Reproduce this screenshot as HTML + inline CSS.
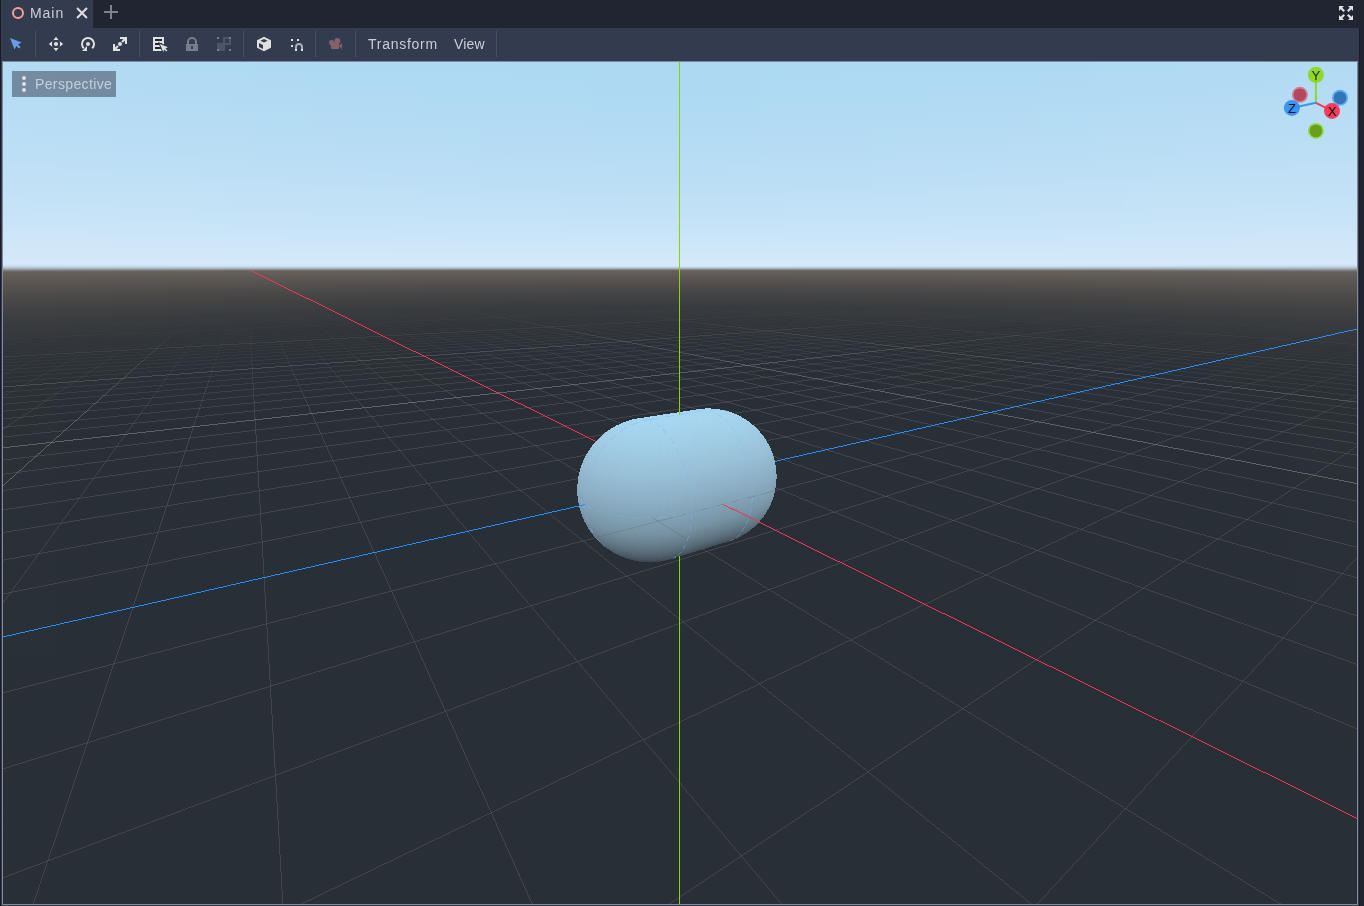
<!DOCTYPE html>
<html><head><meta charset="utf-8"><title>Godot 3D viewport</title>
<style>
html,body{margin:0;padding:0;background:#202531;}
body{width:1364px;height:906px;position:relative;overflow:hidden;font-family:"Liberation Sans",sans-serif;font-size:14px;color:#cccdd3;}
.abs{position:absolute;}
.txt{will-change:transform;}
#edgeL{left:0;top:0;width:1px;height:906px;background:#181b25;}
#edgeR{left:1359px;top:28px;width:1px;height:878px;background:#1a1d28;}
#panel{left:1px;top:28px;width:1358px;height:878px;background:#333b4f;}
#tab{left:1px;top:0;width:92px;height:28px;background:#333b4f;}
#tabtxt{left:30px;top:5px;line-height:16px;letter-spacing:0.95px;}
.sep{width:1px;top:31px;height:26px;background:#474e62;}
.mtxt{top:36px;line-height:16px;}
#vp{left:2px;top:61px;width:1354px;height:842px;border:1px solid #838898;}
#persp{left:12px;top:71px;width:104px;height:26px;background:rgba(51,59,79,0.5);}
#persptxt{left:35px;top:76px;line-height:16px;letter-spacing:0.37px;color:rgba(224,228,236,0.74);}
</style></head><body>
<div class="abs" id="panel"></div>
<div class="abs" id="tab"></div>
<div class="abs" id="edgeL"></div>
<div class="abs" id="edgeR"></div>
<div class="abs txt" id="tabtxt">Main</div>
<div class="abs mtxt txt" style="left:368px;letter-spacing:0.73px">Transform</div>
<div class="abs mtxt txt" style="left:454px;letter-spacing:0.2px">View</div>
<div class="abs sep" style="left:35px"></div>
<div class="abs sep" style="left:139px"></div>
<div class="abs sep" style="left:243px"></div>
<div class="abs sep" style="left:315px"></div>
<div class="abs sep" style="left:355px"></div>
<div class="abs sep" style="left:496px"></div>
<svg width="1364" height="906" viewBox="0 0 1364 906" style="position:absolute;left:0;top:0"><defs><linearGradient id="b0" gradientUnits="userSpaceOnUse" x1="0" y1="61" x2="0" y2="905"><stop offset="0.0000" stop-color="#b1dbf3"/><stop offset="0.0344" stop-color="#b4dcf4"/><stop offset="0.0699" stop-color="#b8ddf4"/><stop offset="0.1055" stop-color="#bcdff5"/><stop offset="0.1351" stop-color="#c0e0f6"/><stop offset="0.1647" stop-color="#c5e2f7"/><stop offset="0.1884" stop-color="#c9e4f7"/><stop offset="0.2121" stop-color="#cee6f8"/><stop offset="0.2299" stop-color="#d2e8f9"/><stop offset="0.2405" stop-color="#d5e9fa"/><stop offset="0.2431" stop-color="#c9dbea"/><stop offset="0.2441" stop-color="#becedb"/><stop offset="0.2453" stop-color="#aebcc7"/><stop offset="0.2459" stop-color="#a6b2bb"/><stop offset="0.2464" stop-color="#9da7af"/><stop offset="0.2476" stop-color="#898e92"/><stop offset="0.2486" stop-color="#767474"/><stop offset="0.2500" stop-color="#67615b"/><stop offset="0.2524" stop-color="#645e5a"/><stop offset="0.2559" stop-color="#605b57"/><stop offset="0.2595" stop-color="#5d5855"/><stop offset="0.2642" stop-color="#585451"/><stop offset="0.2690" stop-color="#54514f"/><stop offset="0.2749" stop-color="#4f4d4b"/><stop offset="0.2808" stop-color="#4b4949"/><stop offset="0.2879" stop-color="#464546"/><stop offset="0.2962" stop-color="#414143"/><stop offset="0.3057" stop-color="#3c3d40"/><stop offset="0.3164" stop-color="#373a3d"/><stop offset="0.3306" stop-color="#33363b"/><stop offset="0.3483" stop-color="#2e3339"/><stop offset="0.3720" stop-color="#2b3137"/><stop offset="0.4135" stop-color="#293036"/><stop offset="1.0000" stop-color="#282f36"/></linearGradient><linearGradient id="b1" gradientUnits="userSpaceOnUse" x1="0" y1="61" x2="0" y2="905"><stop offset="0.0000" stop-color="#b1dbf3"/><stop offset="0.0344" stop-color="#b4dcf3"/><stop offset="0.0699" stop-color="#b7ddf4"/><stop offset="0.1055" stop-color="#bbdff5"/><stop offset="0.1351" stop-color="#c0e0f6"/><stop offset="0.1647" stop-color="#c4e2f6"/><stop offset="0.1884" stop-color="#c9e4f7"/><stop offset="0.2121" stop-color="#cee6f8"/><stop offset="0.2299" stop-color="#d2e8f9"/><stop offset="0.2405" stop-color="#d5e9fa"/><stop offset="0.2431" stop-color="#cadceb"/><stop offset="0.2441" stop-color="#becfdc"/><stop offset="0.2453" stop-color="#afbcc7"/><stop offset="0.2459" stop-color="#a6b2bb"/><stop offset="0.2464" stop-color="#9da6ae"/><stop offset="0.2476" stop-color="#888d91"/><stop offset="0.2486" stop-color="#747271"/><stop offset="0.2500" stop-color="#67615b"/><stop offset="0.2524" stop-color="#645e5a"/><stop offset="0.2559" stop-color="#605b57"/><stop offset="0.2595" stop-color="#5d5854"/><stop offset="0.2642" stop-color="#585451"/><stop offset="0.2690" stop-color="#54504e"/><stop offset="0.2749" stop-color="#4f4c4b"/><stop offset="0.2808" stop-color="#4a4948"/><stop offset="0.2879" stop-color="#454545"/><stop offset="0.2962" stop-color="#404142"/><stop offset="0.3057" stop-color="#3b3d40"/><stop offset="0.3164" stop-color="#37393d"/><stop offset="0.3306" stop-color="#32363b"/><stop offset="0.3483" stop-color="#2e3339"/><stop offset="0.3720" stop-color="#2b3137"/><stop offset="0.4135" stop-color="#293036"/><stop offset="1.0000" stop-color="#282f36"/></linearGradient><linearGradient id="b2" gradientUnits="userSpaceOnUse" x1="0" y1="61" x2="0" y2="905"><stop offset="0.0000" stop-color="#b1daf3"/><stop offset="0.0344" stop-color="#b3dbf3"/><stop offset="0.0699" stop-color="#b7ddf4"/><stop offset="0.1055" stop-color="#bbdef5"/><stop offset="0.1351" stop-color="#bfe0f5"/><stop offset="0.1647" stop-color="#c4e2f6"/><stop offset="0.1884" stop-color="#c9e4f7"/><stop offset="0.2121" stop-color="#cee6f8"/><stop offset="0.2299" stop-color="#d2e8f9"/><stop offset="0.2405" stop-color="#d5e9fa"/><stop offset="0.2431" stop-color="#caddec"/><stop offset="0.2441" stop-color="#bfcfdc"/><stop offset="0.2453" stop-color="#afbcc7"/><stop offset="0.2459" stop-color="#a6b2bb"/><stop offset="0.2464" stop-color="#9da6ae"/><stop offset="0.2476" stop-color="#878b8f"/><stop offset="0.2486" stop-color="#72706f"/><stop offset="0.2500" stop-color="#67605b"/><stop offset="0.2524" stop-color="#645e59"/><stop offset="0.2559" stop-color="#605b57"/><stop offset="0.2595" stop-color="#5c5854"/><stop offset="0.2642" stop-color="#585451"/><stop offset="0.2690" stop-color="#53504e"/><stop offset="0.2749" stop-color="#4e4c4b"/><stop offset="0.2808" stop-color="#494848"/><stop offset="0.2879" stop-color="#444445"/><stop offset="0.2962" stop-color="#3f4042"/><stop offset="0.3057" stop-color="#3b3c3f"/><stop offset="0.3164" stop-color="#36393d"/><stop offset="0.3306" stop-color="#32363a"/><stop offset="0.3483" stop-color="#2e3339"/><stop offset="0.3720" stop-color="#2b3137"/><stop offset="0.4135" stop-color="#292f36"/><stop offset="1.0000" stop-color="#282f36"/></linearGradient><linearGradient id="b3" gradientUnits="userSpaceOnUse" x1="0" y1="61" x2="0" y2="905"><stop offset="0.0000" stop-color="#b0daf3"/><stop offset="0.0344" stop-color="#b3dbf3"/><stop offset="0.0699" stop-color="#b6ddf4"/><stop offset="0.1055" stop-color="#bbdef5"/><stop offset="0.1351" stop-color="#bfe0f5"/><stop offset="0.1647" stop-color="#c4e2f6"/><stop offset="0.1884" stop-color="#c8e4f7"/><stop offset="0.2121" stop-color="#cee6f8"/><stop offset="0.2299" stop-color="#d2e8f9"/><stop offset="0.2405" stop-color="#d5e9fa"/><stop offset="0.2431" stop-color="#cbdeec"/><stop offset="0.2441" stop-color="#bfd0dd"/><stop offset="0.2453" stop-color="#afbcc7"/><stop offset="0.2459" stop-color="#a6b1bb"/><stop offset="0.2464" stop-color="#9ca6ae"/><stop offset="0.2476" stop-color="#868a8e"/><stop offset="0.2486" stop-color="#716e6c"/><stop offset="0.2500" stop-color="#67605b"/><stop offset="0.2524" stop-color="#645e59"/><stop offset="0.2559" stop-color="#605b56"/><stop offset="0.2595" stop-color="#5c5754"/><stop offset="0.2642" stop-color="#575351"/><stop offset="0.2690" stop-color="#53504e"/><stop offset="0.2749" stop-color="#4d4b4a"/><stop offset="0.2808" stop-color="#494848"/><stop offset="0.2879" stop-color="#444445"/><stop offset="0.2962" stop-color="#3f4042"/><stop offset="0.3057" stop-color="#3a3c3f"/><stop offset="0.3164" stop-color="#35393c"/><stop offset="0.3306" stop-color="#31353a"/><stop offset="0.3483" stop-color="#2d3338"/><stop offset="0.3720" stop-color="#2b3137"/><stop offset="0.4135" stop-color="#292f36"/><stop offset="1.0000" stop-color="#282f36"/></linearGradient><linearGradient id="b4" gradientUnits="userSpaceOnUse" x1="0" y1="61" x2="0" y2="905"><stop offset="0.0000" stop-color="#b0daf3"/><stop offset="0.0344" stop-color="#b3dbf3"/><stop offset="0.0699" stop-color="#b6dcf4"/><stop offset="0.1055" stop-color="#badef5"/><stop offset="0.1351" stop-color="#bee0f5"/><stop offset="0.1647" stop-color="#c3e2f6"/><stop offset="0.1884" stop-color="#c8e4f7"/><stop offset="0.2121" stop-color="#cde6f8"/><stop offset="0.2299" stop-color="#d2e8f9"/><stop offset="0.2405" stop-color="#d5e9fa"/><stop offset="0.2431" stop-color="#ccdeed"/><stop offset="0.2441" stop-color="#c0d0dd"/><stop offset="0.2453" stop-color="#afbcc7"/><stop offset="0.2459" stop-color="#a6b1bb"/><stop offset="0.2464" stop-color="#9ca5ad"/><stop offset="0.2476" stop-color="#85898d"/><stop offset="0.2486" stop-color="#6f6c69"/><stop offset="0.2500" stop-color="#66605b"/><stop offset="0.2524" stop-color="#645e59"/><stop offset="0.2559" stop-color="#5f5a56"/><stop offset="0.2595" stop-color="#5c5754"/><stop offset="0.2642" stop-color="#575350"/><stop offset="0.2690" stop-color="#524f4d"/><stop offset="0.2749" stop-color="#4d4b4a"/><stop offset="0.2808" stop-color="#484747"/><stop offset="0.2879" stop-color="#434344"/><stop offset="0.2962" stop-color="#3e3f41"/><stop offset="0.3057" stop-color="#393b3f"/><stop offset="0.3164" stop-color="#35383c"/><stop offset="0.3306" stop-color="#31353a"/><stop offset="0.3483" stop-color="#2d3238"/><stop offset="0.3720" stop-color="#2a3137"/><stop offset="0.4135" stop-color="#292f36"/><stop offset="1.0000" stop-color="#282f36"/></linearGradient><linearGradient id="b5" gradientUnits="userSpaceOnUse" x1="0" y1="61" x2="0" y2="905"><stop offset="0.0000" stop-color="#b0daf3"/><stop offset="0.0344" stop-color="#b2dbf3"/><stop offset="0.0699" stop-color="#b6dcf4"/><stop offset="0.1055" stop-color="#badef5"/><stop offset="0.1351" stop-color="#bee0f5"/><stop offset="0.1647" stop-color="#c3e2f6"/><stop offset="0.1884" stop-color="#c8e4f7"/><stop offset="0.2121" stop-color="#cde6f8"/><stop offset="0.2299" stop-color="#d2e8f9"/><stop offset="0.2405" stop-color="#d5e9fa"/><stop offset="0.2431" stop-color="#ccdfee"/><stop offset="0.2441" stop-color="#c0d1de"/><stop offset="0.2453" stop-color="#afbcc7"/><stop offset="0.2459" stop-color="#a6b1bb"/><stop offset="0.2464" stop-color="#9ca5ad"/><stop offset="0.2476" stop-color="#84888b"/><stop offset="0.2486" stop-color="#6d6966"/><stop offset="0.2500" stop-color="#66605b"/><stop offset="0.2524" stop-color="#645e59"/><stop offset="0.2559" stop-color="#5f5a56"/><stop offset="0.2595" stop-color="#5b5754"/><stop offset="0.2642" stop-color="#565350"/><stop offset="0.2690" stop-color="#524f4d"/><stop offset="0.2749" stop-color="#4c4a4a"/><stop offset="0.2808" stop-color="#484747"/><stop offset="0.2879" stop-color="#434344"/><stop offset="0.2962" stop-color="#3d3f41"/><stop offset="0.3057" stop-color="#393b3e"/><stop offset="0.3164" stop-color="#34383c"/><stop offset="0.3306" stop-color="#30353a"/><stop offset="0.3483" stop-color="#2d3238"/><stop offset="0.3720" stop-color="#2a3037"/><stop offset="0.4135" stop-color="#282f36"/><stop offset="1.0000" stop-color="#282f36"/></linearGradient><linearGradient id="b6" gradientUnits="userSpaceOnUse" x1="0" y1="61" x2="0" y2="905"><stop offset="0.0000" stop-color="#afdaf3"/><stop offset="0.0344" stop-color="#b2dbf3"/><stop offset="0.0699" stop-color="#b5dcf4"/><stop offset="0.1055" stop-color="#b9def4"/><stop offset="0.1351" stop-color="#bee0f5"/><stop offset="0.1647" stop-color="#c3e2f6"/><stop offset="0.1884" stop-color="#c8e4f7"/><stop offset="0.2121" stop-color="#cde6f8"/><stop offset="0.2299" stop-color="#d2e8f9"/><stop offset="0.2405" stop-color="#d5e9fa"/><stop offset="0.2431" stop-color="#cde0ef"/><stop offset="0.2441" stop-color="#c0d1df"/><stop offset="0.2453" stop-color="#afbdc8"/><stop offset="0.2459" stop-color="#a6b1bb"/><stop offset="0.2464" stop-color="#9ba4ac"/><stop offset="0.2476" stop-color="#84878a"/><stop offset="0.2486" stop-color="#6c6763"/><stop offset="0.2500" stop-color="#66605b"/><stop offset="0.2524" stop-color="#635e59"/><stop offset="0.2559" stop-color="#5f5a56"/><stop offset="0.2595" stop-color="#5b5753"/><stop offset="0.2642" stop-color="#565250"/><stop offset="0.2690" stop-color="#514e4d"/><stop offset="0.2749" stop-color="#4c4a49"/><stop offset="0.2808" stop-color="#474646"/><stop offset="0.2879" stop-color="#424243"/><stop offset="0.2962" stop-color="#3d3e41"/><stop offset="0.3057" stop-color="#383a3e"/><stop offset="0.3164" stop-color="#34373c"/><stop offset="0.3306" stop-color="#30343a"/><stop offset="0.3483" stop-color="#2c3238"/><stop offset="0.3720" stop-color="#2a3037"/><stop offset="0.4135" stop-color="#282f36"/><stop offset="1.0000" stop-color="#282f36"/></linearGradient><linearGradient id="b7" gradientUnits="userSpaceOnUse" x1="0" y1="61" x2="0" y2="905"><stop offset="0.0000" stop-color="#afdaf3"/><stop offset="0.0344" stop-color="#b2dbf3"/><stop offset="0.0699" stop-color="#b5dcf4"/><stop offset="0.1055" stop-color="#b9def4"/><stop offset="0.1351" stop-color="#bddff5"/><stop offset="0.1647" stop-color="#c3e2f6"/><stop offset="0.1884" stop-color="#c7e4f7"/><stop offset="0.2121" stop-color="#cde6f8"/><stop offset="0.2299" stop-color="#d2e8f9"/><stop offset="0.2405" stop-color="#d5e9fa"/><stop offset="0.2431" stop-color="#cde1f0"/><stop offset="0.2441" stop-color="#c1d2df"/><stop offset="0.2453" stop-color="#afbdc8"/><stop offset="0.2459" stop-color="#a5b1ba"/><stop offset="0.2464" stop-color="#9ba4ac"/><stop offset="0.2476" stop-color="#838588"/><stop offset="0.2486" stop-color="#6a6460"/><stop offset="0.2500" stop-color="#66605b"/><stop offset="0.2524" stop-color="#635d59"/><stop offset="0.2559" stop-color="#5f5a56"/><stop offset="0.2595" stop-color="#5b5653"/><stop offset="0.2642" stop-color="#565250"/><stop offset="0.2690" stop-color="#514e4d"/><stop offset="0.2749" stop-color="#4b4a49"/><stop offset="0.2808" stop-color="#464646"/><stop offset="0.2879" stop-color="#414243"/><stop offset="0.2962" stop-color="#3c3e40"/><stop offset="0.3057" stop-color="#373a3e"/><stop offset="0.3164" stop-color="#33373b"/><stop offset="0.3306" stop-color="#2f3439"/><stop offset="0.3483" stop-color="#2c3238"/><stop offset="0.3720" stop-color="#2a3037"/><stop offset="0.4135" stop-color="#282f36"/><stop offset="1.0000" stop-color="#282f36"/></linearGradient><linearGradient id="b8" gradientUnits="userSpaceOnUse" x1="0" y1="61" x2="0" y2="905"><stop offset="0.0000" stop-color="#afdaf3"/><stop offset="0.0344" stop-color="#b1dbf3"/><stop offset="0.0699" stop-color="#b5dcf4"/><stop offset="0.1055" stop-color="#b9def4"/><stop offset="0.1351" stop-color="#bddff5"/><stop offset="0.1647" stop-color="#c2e1f6"/><stop offset="0.1884" stop-color="#c7e3f7"/><stop offset="0.2121" stop-color="#cde6f8"/><stop offset="0.2299" stop-color="#d1e8f9"/><stop offset="0.2405" stop-color="#d4e9fa"/><stop offset="0.2431" stop-color="#cee1f1"/><stop offset="0.2441" stop-color="#c1d2e0"/><stop offset="0.2453" stop-color="#afbdc8"/><stop offset="0.2459" stop-color="#a5b1ba"/><stop offset="0.2464" stop-color="#9ba4ab"/><stop offset="0.2476" stop-color="#828487"/><stop offset="0.2486" stop-color="#68615c"/><stop offset="0.2500" stop-color="#66605b"/><stop offset="0.2524" stop-color="#635d59"/><stop offset="0.2559" stop-color="#5e5a56"/><stop offset="0.2595" stop-color="#5a5653"/><stop offset="0.2642" stop-color="#55524f"/><stop offset="0.2690" stop-color="#504e4c"/><stop offset="0.2749" stop-color="#4b4949"/><stop offset="0.2808" stop-color="#464546"/><stop offset="0.2879" stop-color="#414143"/><stop offset="0.2962" stop-color="#3c3d40"/><stop offset="0.3057" stop-color="#373a3d"/><stop offset="0.3164" stop-color="#33373b"/><stop offset="0.3306" stop-color="#2f3439"/><stop offset="0.3483" stop-color="#2c3138"/><stop offset="0.3720" stop-color="#2a3037"/><stop offset="0.4135" stop-color="#282f36"/><stop offset="1.0000" stop-color="#282f36"/></linearGradient><linearGradient id="b9" gradientUnits="userSpaceOnUse" x1="0" y1="61" x2="0" y2="905"><stop offset="0.0000" stop-color="#aed9f3"/><stop offset="0.0344" stop-color="#b1daf3"/><stop offset="0.0699" stop-color="#b4dcf4"/><stop offset="0.1055" stop-color="#b8ddf4"/><stop offset="0.1351" stop-color="#bddff5"/><stop offset="0.1647" stop-color="#c2e1f6"/><stop offset="0.1884" stop-color="#c7e3f7"/><stop offset="0.2121" stop-color="#cde6f8"/><stop offset="0.2299" stop-color="#d1e8f9"/><stop offset="0.2405" stop-color="#d4e9fa"/><stop offset="0.2431" stop-color="#cfe2f2"/><stop offset="0.2441" stop-color="#c2d3e0"/><stop offset="0.2453" stop-color="#afbdc8"/><stop offset="0.2459" stop-color="#a5b1ba"/><stop offset="0.2464" stop-color="#9aa3ab"/><stop offset="0.2476" stop-color="#818385"/><stop offset="0.2486" stop-color="#68615c"/><stop offset="0.2500" stop-color="#66605b"/><stop offset="0.2524" stop-color="#635d59"/><stop offset="0.2559" stop-color="#5e5955"/><stop offset="0.2595" stop-color="#5a5653"/><stop offset="0.2642" stop-color="#55514f"/><stop offset="0.2690" stop-color="#504d4c"/><stop offset="0.2749" stop-color="#4a4948"/><stop offset="0.2808" stop-color="#454545"/><stop offset="0.2879" stop-color="#404142"/><stop offset="0.2962" stop-color="#3b3d40"/><stop offset="0.3057" stop-color="#36393d"/><stop offset="0.3164" stop-color="#32363b"/><stop offset="0.3306" stop-color="#2e3339"/><stop offset="0.3483" stop-color="#2b3138"/><stop offset="0.3720" stop-color="#293037"/><stop offset="0.4135" stop-color="#282f36"/><stop offset="1.0000" stop-color="#282f36"/></linearGradient><linearGradient id="b10" gradientUnits="userSpaceOnUse" x1="0" y1="61" x2="0" y2="905"><stop offset="0.0000" stop-color="#aed9f2"/><stop offset="0.0344" stop-color="#b1daf3"/><stop offset="0.0699" stop-color="#b4dcf3"/><stop offset="0.1055" stop-color="#b8ddf4"/><stop offset="0.1351" stop-color="#bcdff5"/><stop offset="0.1647" stop-color="#c2e1f6"/><stop offset="0.1884" stop-color="#c7e3f7"/><stop offset="0.2121" stop-color="#cce6f8"/><stop offset="0.2299" stop-color="#d1e8f9"/><stop offset="0.2405" stop-color="#d4e9fa"/><stop offset="0.2431" stop-color="#cfe3f2"/><stop offset="0.2441" stop-color="#c2d3e1"/><stop offset="0.2453" stop-color="#b0bdc8"/><stop offset="0.2459" stop-color="#a5b1ba"/><stop offset="0.2464" stop-color="#9aa3aa"/><stop offset="0.2476" stop-color="#808284"/><stop offset="0.2486" stop-color="#68615c"/><stop offset="0.2500" stop-color="#66605b"/><stop offset="0.2524" stop-color="#635d58"/><stop offset="0.2559" stop-color="#5e5955"/><stop offset="0.2595" stop-color="#5a5552"/><stop offset="0.2642" stop-color="#54514f"/><stop offset="0.2690" stop-color="#4f4d4c"/><stop offset="0.2749" stop-color="#4a4848"/><stop offset="0.2808" stop-color="#454445"/><stop offset="0.2879" stop-color="#404042"/><stop offset="0.2962" stop-color="#3b3c3f"/><stop offset="0.3057" stop-color="#36393d"/><stop offset="0.3164" stop-color="#32363b"/><stop offset="0.3306" stop-color="#2e3339"/><stop offset="0.3483" stop-color="#2b3137"/><stop offset="0.3720" stop-color="#293037"/><stop offset="0.4135" stop-color="#282f36"/><stop offset="1.0000" stop-color="#282f36"/></linearGradient><linearGradient id="b11" gradientUnits="userSpaceOnUse" x1="0" y1="61" x2="0" y2="905"><stop offset="0.0000" stop-color="#aed9f2"/><stop offset="0.0344" stop-color="#b0daf3"/><stop offset="0.0699" stop-color="#b4dbf3"/><stop offset="0.1055" stop-color="#b8ddf4"/><stop offset="0.1351" stop-color="#bcdff5"/><stop offset="0.1647" stop-color="#c1e1f6"/><stop offset="0.1884" stop-color="#c6e3f7"/><stop offset="0.2121" stop-color="#cce6f8"/><stop offset="0.2299" stop-color="#d1e8f9"/><stop offset="0.2405" stop-color="#d4e9fa"/><stop offset="0.2431" stop-color="#d0e4f3"/><stop offset="0.2441" stop-color="#c3d4e1"/><stop offset="0.2453" stop-color="#b0bdc8"/><stop offset="0.2459" stop-color="#a5b0ba"/><stop offset="0.2464" stop-color="#9aa2aa"/><stop offset="0.2476" stop-color="#7f8082"/><stop offset="0.2486" stop-color="#68615c"/><stop offset="0.2500" stop-color="#66605b"/><stop offset="0.2524" stop-color="#625d58"/><stop offset="0.2559" stop-color="#5e5955"/><stop offset="0.2595" stop-color="#595552"/><stop offset="0.2642" stop-color="#54514f"/><stop offset="0.2690" stop-color="#4f4d4b"/><stop offset="0.2749" stop-color="#494848"/><stop offset="0.2808" stop-color="#444445"/><stop offset="0.2879" stop-color="#3f4042"/><stop offset="0.2962" stop-color="#3a3c3f"/><stop offset="0.3057" stop-color="#35383c"/><stop offset="0.3164" stop-color="#31353a"/><stop offset="0.3306" stop-color="#2e3339"/><stop offset="0.3483" stop-color="#2b3137"/><stop offset="0.3720" stop-color="#293037"/><stop offset="0.4135" stop-color="#282f36"/><stop offset="1.0000" stop-color="#282f36"/></linearGradient><linearGradient id="b12" gradientUnits="userSpaceOnUse" x1="0" y1="61" x2="0" y2="905"><stop offset="0.0000" stop-color="#aed9f2"/><stop offset="0.0344" stop-color="#b0daf3"/><stop offset="0.0699" stop-color="#b3dbf3"/><stop offset="0.1055" stop-color="#b7ddf4"/><stop offset="0.1351" stop-color="#bcdff5"/><stop offset="0.1647" stop-color="#c1e1f6"/><stop offset="0.1884" stop-color="#c6e3f7"/><stop offset="0.2121" stop-color="#cce6f8"/><stop offset="0.2299" stop-color="#d1e8f9"/><stop offset="0.2405" stop-color="#d4e9fa"/><stop offset="0.2431" stop-color="#d1e4f4"/><stop offset="0.2441" stop-color="#c3d4e2"/><stop offset="0.2453" stop-color="#b0bdc8"/><stop offset="0.2459" stop-color="#a5b0ba"/><stop offset="0.2464" stop-color="#99a2a9"/><stop offset="0.2476" stop-color="#7e7f81"/><stop offset="0.2486" stop-color="#68615c"/><stop offset="0.2500" stop-color="#66605b"/><stop offset="0.2524" stop-color="#625d58"/><stop offset="0.2559" stop-color="#5e5955"/><stop offset="0.2595" stop-color="#595552"/><stop offset="0.2642" stop-color="#53504e"/><stop offset="0.2690" stop-color="#4e4c4b"/><stop offset="0.2749" stop-color="#494848"/><stop offset="0.2808" stop-color="#444344"/><stop offset="0.2879" stop-color="#3f3f41"/><stop offset="0.2962" stop-color="#393c3f"/><stop offset="0.3057" stop-color="#35383c"/><stop offset="0.3164" stop-color="#31353a"/><stop offset="0.3306" stop-color="#2d3338"/><stop offset="0.3483" stop-color="#2b3137"/><stop offset="0.3720" stop-color="#293036"/><stop offset="0.4135" stop-color="#282f36"/><stop offset="1.0000" stop-color="#282f36"/></linearGradient><linearGradient id="b13" gradientUnits="userSpaceOnUse" x1="0" y1="61" x2="0" y2="905"><stop offset="0.0000" stop-color="#add9f2"/><stop offset="0.0344" stop-color="#b0daf3"/><stop offset="0.0699" stop-color="#b3dbf3"/><stop offset="0.1055" stop-color="#b7ddf4"/><stop offset="0.1351" stop-color="#bbdff5"/><stop offset="0.1647" stop-color="#c1e1f6"/><stop offset="0.1884" stop-color="#c6e3f7"/><stop offset="0.2121" stop-color="#cce6f8"/><stop offset="0.2299" stop-color="#d1e8f9"/><stop offset="0.2405" stop-color="#d4e9fa"/><stop offset="0.2431" stop-color="#d1e5f5"/><stop offset="0.2441" stop-color="#c3d5e3"/><stop offset="0.2453" stop-color="#b0bdc9"/><stop offset="0.2459" stop-color="#a5b0ba"/><stop offset="0.2464" stop-color="#99a2a9"/><stop offset="0.2476" stop-color="#7d7e7f"/><stop offset="0.2486" stop-color="#67615c"/><stop offset="0.2500" stop-color="#655f5a"/><stop offset="0.2524" stop-color="#625d58"/><stop offset="0.2559" stop-color="#5d5855"/><stop offset="0.2595" stop-color="#595552"/><stop offset="0.2642" stop-color="#53504e"/><stop offset="0.2690" stop-color="#4e4c4b"/><stop offset="0.2749" stop-color="#484747"/><stop offset="0.2808" stop-color="#434344"/><stop offset="0.2879" stop-color="#3e3f41"/><stop offset="0.2962" stop-color="#393b3e"/><stop offset="0.3057" stop-color="#34383c"/><stop offset="0.3164" stop-color="#31353a"/><stop offset="0.3306" stop-color="#2d3238"/><stop offset="0.3483" stop-color="#2b3137"/><stop offset="0.3720" stop-color="#293036"/><stop offset="0.4135" stop-color="#282f36"/><stop offset="1.0000" stop-color="#282f36"/></linearGradient><linearGradient id="b14" gradientUnits="userSpaceOnUse" x1="0" y1="61" x2="0" y2="905"><stop offset="0.0000" stop-color="#add9f2"/><stop offset="0.0344" stop-color="#b0daf3"/><stop offset="0.0699" stop-color="#b3dbf3"/><stop offset="0.1055" stop-color="#b7ddf4"/><stop offset="0.1351" stop-color="#bbdef5"/><stop offset="0.1647" stop-color="#c1e1f6"/><stop offset="0.1884" stop-color="#c6e3f7"/><stop offset="0.2121" stop-color="#cce5f8"/><stop offset="0.2299" stop-color="#d1e8f9"/><stop offset="0.2405" stop-color="#d4e9fa"/><stop offset="0.2431" stop-color="#d2e6f6"/><stop offset="0.2441" stop-color="#c4d5e3"/><stop offset="0.2453" stop-color="#b0bec9"/><stop offset="0.2459" stop-color="#a5b0ba"/><stop offset="0.2464" stop-color="#99a1a9"/><stop offset="0.2476" stop-color="#7c7c7e"/><stop offset="0.2486" stop-color="#67615c"/><stop offset="0.2500" stop-color="#655f5a"/><stop offset="0.2524" stop-color="#625c58"/><stop offset="0.2559" stop-color="#5d5855"/><stop offset="0.2595" stop-color="#585452"/><stop offset="0.2642" stop-color="#53504e"/><stop offset="0.2690" stop-color="#4e4b4b"/><stop offset="0.2749" stop-color="#484747"/><stop offset="0.2808" stop-color="#434344"/><stop offset="0.2879" stop-color="#3e3f41"/><stop offset="0.2962" stop-color="#383b3e"/><stop offset="0.3057" stop-color="#34373c"/><stop offset="0.3164" stop-color="#30353a"/><stop offset="0.3306" stop-color="#2d3238"/><stop offset="0.3483" stop-color="#2a3137"/><stop offset="0.3720" stop-color="#293036"/><stop offset="0.4135" stop-color="#282f36"/><stop offset="1.0000" stop-color="#282f36"/></linearGradient><linearGradient id="b15" gradientUnits="userSpaceOnUse" x1="0" y1="61" x2="0" y2="905"><stop offset="0.0000" stop-color="#add9f2"/><stop offset="0.0344" stop-color="#afdaf3"/><stop offset="0.0699" stop-color="#b2dbf3"/><stop offset="0.1055" stop-color="#b7ddf4"/><stop offset="0.1351" stop-color="#bbdef5"/><stop offset="0.1647" stop-color="#c0e1f6"/><stop offset="0.1884" stop-color="#c5e3f7"/><stop offset="0.2121" stop-color="#cce5f8"/><stop offset="0.2299" stop-color="#d1e8f9"/><stop offset="0.2405" stop-color="#d4e9fa"/><stop offset="0.2431" stop-color="#d2e6f6"/><stop offset="0.2441" stop-color="#c4d6e4"/><stop offset="0.2453" stop-color="#b0bec9"/><stop offset="0.2459" stop-color="#a5b0b9"/><stop offset="0.2464" stop-color="#98a1a8"/><stop offset="0.2476" stop-color="#7b7b7c"/><stop offset="0.2486" stop-color="#67615c"/><stop offset="0.2500" stop-color="#655f5a"/><stop offset="0.2524" stop-color="#625c58"/><stop offset="0.2559" stop-color="#5d5855"/><stop offset="0.2595" stop-color="#585451"/><stop offset="0.2642" stop-color="#524f4e"/><stop offset="0.2690" stop-color="#4d4b4a"/><stop offset="0.2749" stop-color="#474647"/><stop offset="0.2808" stop-color="#424244"/><stop offset="0.2879" stop-color="#3d3e41"/><stop offset="0.2962" stop-color="#383a3e"/><stop offset="0.3057" stop-color="#34373c"/><stop offset="0.3164" stop-color="#30343a"/><stop offset="0.3306" stop-color="#2d3238"/><stop offset="0.3483" stop-color="#2a3037"/><stop offset="0.3720" stop-color="#293036"/><stop offset="0.4135" stop-color="#282f36"/><stop offset="1.0000" stop-color="#282f36"/></linearGradient><linearGradient id="b16" gradientUnits="userSpaceOnUse" x1="0" y1="61" x2="0" y2="905"><stop offset="0.0000" stop-color="#add9f2"/><stop offset="0.0344" stop-color="#afdaf3"/><stop offset="0.0699" stop-color="#b2dbf3"/><stop offset="0.1055" stop-color="#b6ddf4"/><stop offset="0.1351" stop-color="#bbdef5"/><stop offset="0.1647" stop-color="#c0e1f6"/><stop offset="0.1884" stop-color="#c5e3f7"/><stop offset="0.2121" stop-color="#cbe5f8"/><stop offset="0.2299" stop-color="#d1e8f9"/><stop offset="0.2405" stop-color="#d4e9fa"/><stop offset="0.2431" stop-color="#d3e7f7"/><stop offset="0.2441" stop-color="#c4d6e4"/><stop offset="0.2453" stop-color="#b0bec9"/><stop offset="0.2459" stop-color="#a5b0b9"/><stop offset="0.2464" stop-color="#98a1a8"/><stop offset="0.2476" stop-color="#7a7a7b"/><stop offset="0.2486" stop-color="#67615c"/><stop offset="0.2500" stop-color="#655f5a"/><stop offset="0.2524" stop-color="#625c58"/><stop offset="0.2559" stop-color="#5d5854"/><stop offset="0.2595" stop-color="#585451"/><stop offset="0.2642" stop-color="#524f4d"/><stop offset="0.2690" stop-color="#4d4b4a"/><stop offset="0.2749" stop-color="#474647"/><stop offset="0.2808" stop-color="#424243"/><stop offset="0.2879" stop-color="#3d3e40"/><stop offset="0.2962" stop-color="#383a3e"/><stop offset="0.3057" stop-color="#33373b"/><stop offset="0.3164" stop-color="#303439"/><stop offset="0.3306" stop-color="#2c3238"/><stop offset="0.3483" stop-color="#2a3037"/><stop offset="0.3720" stop-color="#292f36"/><stop offset="0.4135" stop-color="#282f36"/><stop offset="1.0000" stop-color="#282f36"/></linearGradient><linearGradient id="b17" gradientUnits="userSpaceOnUse" x1="0" y1="61" x2="0" y2="905"><stop offset="0.0000" stop-color="#add9f2"/><stop offset="0.0344" stop-color="#afdaf3"/><stop offset="0.0699" stop-color="#b2dbf3"/><stop offset="0.1055" stop-color="#b6dcf4"/><stop offset="0.1351" stop-color="#badef5"/><stop offset="0.1647" stop-color="#c0e0f6"/><stop offset="0.1884" stop-color="#c5e3f7"/><stop offset="0.2121" stop-color="#cbe5f8"/><stop offset="0.2299" stop-color="#d1e8f9"/><stop offset="0.2405" stop-color="#d4e9fa"/><stop offset="0.2431" stop-color="#d3e8f8"/><stop offset="0.2441" stop-color="#c5d6e4"/><stop offset="0.2453" stop-color="#b0bec9"/><stop offset="0.2459" stop-color="#a5b0b9"/><stop offset="0.2464" stop-color="#98a0a7"/><stop offset="0.2476" stop-color="#79797a"/><stop offset="0.2486" stop-color="#67615c"/><stop offset="0.2500" stop-color="#655f5a"/><stop offset="0.2524" stop-color="#615c58"/><stop offset="0.2559" stop-color="#5d5854"/><stop offset="0.2595" stop-color="#585451"/><stop offset="0.2642" stop-color="#524f4d"/><stop offset="0.2690" stop-color="#4d4b4a"/><stop offset="0.2749" stop-color="#474646"/><stop offset="0.2808" stop-color="#424243"/><stop offset="0.2879" stop-color="#3c3e40"/><stop offset="0.2962" stop-color="#373a3d"/><stop offset="0.3057" stop-color="#33373b"/><stop offset="0.3164" stop-color="#2f3439"/><stop offset="0.3306" stop-color="#2c3238"/><stop offset="0.3483" stop-color="#2a3037"/><stop offset="0.3720" stop-color="#292f36"/><stop offset="0.4135" stop-color="#282f36"/><stop offset="1.0000" stop-color="#282f36"/></linearGradient><linearGradient id="b18" gradientUnits="userSpaceOnUse" x1="0" y1="61" x2="0" y2="905"><stop offset="0.0000" stop-color="#acd9f2"/><stop offset="0.0344" stop-color="#afdaf3"/><stop offset="0.0699" stop-color="#b2dbf3"/><stop offset="0.1055" stop-color="#b6dcf4"/><stop offset="0.1351" stop-color="#badef5"/><stop offset="0.1647" stop-color="#c0e0f6"/><stop offset="0.1884" stop-color="#c5e3f7"/><stop offset="0.2121" stop-color="#cbe5f8"/><stop offset="0.2299" stop-color="#d1e8f9"/><stop offset="0.2405" stop-color="#d4e9fa"/><stop offset="0.2431" stop-color="#d4e8f8"/><stop offset="0.2441" stop-color="#c5d7e5"/><stop offset="0.2453" stop-color="#b0bec9"/><stop offset="0.2459" stop-color="#a5b0b9"/><stop offset="0.2464" stop-color="#98a0a7"/><stop offset="0.2476" stop-color="#787879"/><stop offset="0.2486" stop-color="#67615c"/><stop offset="0.2500" stop-color="#655f5a"/><stop offset="0.2524" stop-color="#615c58"/><stop offset="0.2559" stop-color="#5c5854"/><stop offset="0.2595" stop-color="#585451"/><stop offset="0.2642" stop-color="#524f4d"/><stop offset="0.2690" stop-color="#4c4a4a"/><stop offset="0.2749" stop-color="#464646"/><stop offset="0.2808" stop-color="#414243"/><stop offset="0.2879" stop-color="#3c3d40"/><stop offset="0.2962" stop-color="#373a3d"/><stop offset="0.3057" stop-color="#33363b"/><stop offset="0.3164" stop-color="#2f3439"/><stop offset="0.3306" stop-color="#2c3238"/><stop offset="0.3483" stop-color="#2a3037"/><stop offset="0.3720" stop-color="#292f36"/><stop offset="0.4135" stop-color="#282f36"/><stop offset="1.0000" stop-color="#282f36"/></linearGradient><linearGradient id="b19" gradientUnits="userSpaceOnUse" x1="0" y1="61" x2="0" y2="905"><stop offset="0.0000" stop-color="#acd9f2"/><stop offset="0.0344" stop-color="#afdaf3"/><stop offset="0.0699" stop-color="#b2dbf3"/><stop offset="0.1055" stop-color="#b6dcf4"/><stop offset="0.1351" stop-color="#badef5"/><stop offset="0.1647" stop-color="#c0e0f6"/><stop offset="0.1884" stop-color="#c5e3f7"/><stop offset="0.2121" stop-color="#cbe5f8"/><stop offset="0.2299" stop-color="#d1e8f9"/><stop offset="0.2405" stop-color="#d4e9fa"/><stop offset="0.2431" stop-color="#d4e8f8"/><stop offset="0.2441" stop-color="#c5d7e5"/><stop offset="0.2453" stop-color="#b0bec9"/><stop offset="0.2459" stop-color="#a5b0b9"/><stop offset="0.2464" stop-color="#97a0a7"/><stop offset="0.2476" stop-color="#787778"/><stop offset="0.2486" stop-color="#67615c"/><stop offset="0.2500" stop-color="#655f5a"/><stop offset="0.2524" stop-color="#615c58"/><stop offset="0.2559" stop-color="#5c5854"/><stop offset="0.2595" stop-color="#575451"/><stop offset="0.2642" stop-color="#514f4d"/><stop offset="0.2690" stop-color="#4c4a4a"/><stop offset="0.2749" stop-color="#464546"/><stop offset="0.2808" stop-color="#414143"/><stop offset="0.2879" stop-color="#3c3d40"/><stop offset="0.2962" stop-color="#373a3d"/><stop offset="0.3057" stop-color="#32363b"/><stop offset="0.3164" stop-color="#2f3439"/><stop offset="0.3306" stop-color="#2c3238"/><stop offset="0.3483" stop-color="#2a3037"/><stop offset="0.3720" stop-color="#292f36"/><stop offset="0.4135" stop-color="#282f36"/><stop offset="1.0000" stop-color="#282f36"/></linearGradient><linearGradient id="b20" gradientUnits="userSpaceOnUse" x1="0" y1="61" x2="0" y2="905"><stop offset="0.0000" stop-color="#acd9f2"/><stop offset="0.0344" stop-color="#aedaf3"/><stop offset="0.0699" stop-color="#b2dbf3"/><stop offset="0.1055" stop-color="#b6dcf4"/><stop offset="0.1351" stop-color="#badef5"/><stop offset="0.1647" stop-color="#bfe0f6"/><stop offset="0.1884" stop-color="#c5e2f7"/><stop offset="0.2121" stop-color="#cbe5f8"/><stop offset="0.2299" stop-color="#d1e8f9"/><stop offset="0.2405" stop-color="#d4e9fa"/><stop offset="0.2431" stop-color="#d4e9f9"/><stop offset="0.2441" stop-color="#c5d7e5"/><stop offset="0.2453" stop-color="#b0bec9"/><stop offset="0.2459" stop-color="#a4b0b9"/><stop offset="0.2464" stop-color="#97a0a7"/><stop offset="0.2476" stop-color="#777777"/><stop offset="0.2486" stop-color="#67615c"/><stop offset="0.2500" stop-color="#655f5a"/><stop offset="0.2524" stop-color="#615c57"/><stop offset="0.2559" stop-color="#5c5754"/><stop offset="0.2595" stop-color="#575351"/><stop offset="0.2642" stop-color="#514e4d"/><stop offset="0.2690" stop-color="#4c4a49"/><stop offset="0.2749" stop-color="#464546"/><stop offset="0.2808" stop-color="#414143"/><stop offset="0.2879" stop-color="#3b3d40"/><stop offset="0.2962" stop-color="#37393d"/><stop offset="0.3057" stop-color="#32363b"/><stop offset="0.3164" stop-color="#2f3439"/><stop offset="0.3306" stop-color="#2c3238"/><stop offset="0.3483" stop-color="#2a3037"/><stop offset="0.3720" stop-color="#292f36"/><stop offset="0.4135" stop-color="#282f36"/><stop offset="1.0000" stop-color="#282f36"/></linearGradient><linearGradient id="b21" gradientUnits="userSpaceOnUse" x1="0" y1="61" x2="0" y2="905"><stop offset="0.0000" stop-color="#acd9f2"/><stop offset="0.0344" stop-color="#aed9f3"/><stop offset="0.0699" stop-color="#b1dbf3"/><stop offset="0.1055" stop-color="#b5dcf4"/><stop offset="0.1351" stop-color="#badef5"/><stop offset="0.1647" stop-color="#bfe0f6"/><stop offset="0.1884" stop-color="#c5e2f7"/><stop offset="0.2121" stop-color="#cbe5f8"/><stop offset="0.2299" stop-color="#d1e8f9"/><stop offset="0.2405" stop-color="#d4e9fa"/><stop offset="0.2431" stop-color="#d5e9f9"/><stop offset="0.2441" stop-color="#c6d7e6"/><stop offset="0.2453" stop-color="#b0bec9"/><stop offset="0.2459" stop-color="#a4b0b9"/><stop offset="0.2464" stop-color="#979fa7"/><stop offset="0.2476" stop-color="#777676"/><stop offset="0.2486" stop-color="#67615c"/><stop offset="0.2500" stop-color="#655f5a"/><stop offset="0.2524" stop-color="#615c57"/><stop offset="0.2559" stop-color="#5c5754"/><stop offset="0.2595" stop-color="#575351"/><stop offset="0.2642" stop-color="#514e4d"/><stop offset="0.2690" stop-color="#4c4a49"/><stop offset="0.2749" stop-color="#464546"/><stop offset="0.2808" stop-color="#414143"/><stop offset="0.2879" stop-color="#3b3d40"/><stop offset="0.2962" stop-color="#36393d"/><stop offset="0.3057" stop-color="#32363b"/><stop offset="0.3164" stop-color="#2f3439"/><stop offset="0.3306" stop-color="#2c3138"/><stop offset="0.3483" stop-color="#2a3037"/><stop offset="0.3720" stop-color="#292f36"/><stop offset="0.4135" stop-color="#282f36"/><stop offset="1.0000" stop-color="#282f36"/></linearGradient><linearGradient id="b22" gradientUnits="userSpaceOnUse" x1="0" y1="61" x2="0" y2="905"><stop offset="0.0000" stop-color="#acd9f2"/><stop offset="0.0344" stop-color="#aed9f3"/><stop offset="0.0699" stop-color="#b1dbf3"/><stop offset="0.1055" stop-color="#b5dcf4"/><stop offset="0.1351" stop-color="#badef4"/><stop offset="0.1647" stop-color="#bfe0f5"/><stop offset="0.1884" stop-color="#c5e2f7"/><stop offset="0.2121" stop-color="#cbe5f8"/><stop offset="0.2299" stop-color="#d1e8f9"/><stop offset="0.2405" stop-color="#d4e9fa"/><stop offset="0.2431" stop-color="#d5e9f9"/><stop offset="0.2441" stop-color="#c6d7e6"/><stop offset="0.2453" stop-color="#b0bec9"/><stop offset="0.2459" stop-color="#a4b0b9"/><stop offset="0.2464" stop-color="#979fa6"/><stop offset="0.2476" stop-color="#777676"/><stop offset="0.2486" stop-color="#67615c"/><stop offset="0.2500" stop-color="#655f5a"/><stop offset="0.2524" stop-color="#615c57"/><stop offset="0.2559" stop-color="#5c5754"/><stop offset="0.2595" stop-color="#575351"/><stop offset="0.2642" stop-color="#514e4d"/><stop offset="0.2690" stop-color="#4c4a49"/><stop offset="0.2749" stop-color="#464546"/><stop offset="0.2808" stop-color="#404143"/><stop offset="0.2879" stop-color="#3b3d40"/><stop offset="0.2962" stop-color="#36393d"/><stop offset="0.3057" stop-color="#32363b"/><stop offset="0.3164" stop-color="#2f3339"/><stop offset="0.3306" stop-color="#2c3138"/><stop offset="0.3483" stop-color="#2a3037"/><stop offset="0.3720" stop-color="#292f36"/><stop offset="0.4135" stop-color="#282f36"/><stop offset="1.0000" stop-color="#282f36"/></linearGradient><linearGradient id="b23" gradientUnits="userSpaceOnUse" x1="0" y1="61" x2="0" y2="905"><stop offset="0.0000" stop-color="#acd9f2"/><stop offset="0.0344" stop-color="#aed9f3"/><stop offset="0.0699" stop-color="#b1dbf3"/><stop offset="0.1055" stop-color="#b5dcf4"/><stop offset="0.1351" stop-color="#badef4"/><stop offset="0.1647" stop-color="#bfe0f5"/><stop offset="0.1884" stop-color="#c5e2f7"/><stop offset="0.2121" stop-color="#cbe5f8"/><stop offset="0.2299" stop-color="#d1e8f9"/><stop offset="0.2405" stop-color="#d4e9fa"/><stop offset="0.2431" stop-color="#d5e9f9"/><stop offset="0.2441" stop-color="#c6d8e6"/><stop offset="0.2453" stop-color="#b0bec9"/><stop offset="0.2459" stop-color="#a4b0b9"/><stop offset="0.2464" stop-color="#979fa6"/><stop offset="0.2476" stop-color="#777675"/><stop offset="0.2486" stop-color="#67615c"/><stop offset="0.2500" stop-color="#655f5a"/><stop offset="0.2524" stop-color="#615c57"/><stop offset="0.2559" stop-color="#5c5754"/><stop offset="0.2595" stop-color="#575351"/><stop offset="0.2642" stop-color="#514e4d"/><stop offset="0.2690" stop-color="#4c4a49"/><stop offset="0.2749" stop-color="#464546"/><stop offset="0.2808" stop-color="#404143"/><stop offset="0.2879" stop-color="#3b3d40"/><stop offset="0.2962" stop-color="#36393d"/><stop offset="0.3057" stop-color="#32363b"/><stop offset="0.3164" stop-color="#2e3339"/><stop offset="0.3306" stop-color="#2c3138"/><stop offset="0.3483" stop-color="#2a3037"/><stop offset="0.3720" stop-color="#292f36"/><stop offset="0.4135" stop-color="#282f36"/><stop offset="1.0000" stop-color="#282f36"/></linearGradient><linearGradient id="b24" gradientUnits="userSpaceOnUse" x1="0" y1="61" x2="0" y2="905"><stop offset="0.0000" stop-color="#b2dbf3"/><stop offset="0.0344" stop-color="#b4dcf4"/><stop offset="0.0699" stop-color="#b8ddf4"/><stop offset="0.1055" stop-color="#bcdff5"/><stop offset="0.1351" stop-color="#c0e0f6"/><stop offset="0.1647" stop-color="#c5e2f7"/><stop offset="0.1884" stop-color="#c9e4f7"/><stop offset="0.2121" stop-color="#cee6f8"/><stop offset="0.2299" stop-color="#d2e8f9"/><stop offset="0.2405" stop-color="#d5e9fa"/><stop offset="0.2431" stop-color="#c9dbea"/><stop offset="0.2441" stop-color="#becedb"/><stop offset="0.2453" stop-color="#aebcc7"/><stop offset="0.2459" stop-color="#a6b2bb"/><stop offset="0.2464" stop-color="#9da7af"/><stop offset="0.2476" stop-color="#898e92"/><stop offset="0.2486" stop-color="#767575"/><stop offset="0.2500" stop-color="#67615b"/><stop offset="0.2524" stop-color="#645f5a"/><stop offset="0.2559" stop-color="#605b57"/><stop offset="0.2595" stop-color="#5d5855"/><stop offset="0.2642" stop-color="#585452"/><stop offset="0.2690" stop-color="#54514f"/><stop offset="0.2749" stop-color="#4f4d4c"/><stop offset="0.2808" stop-color="#4b4949"/><stop offset="0.2879" stop-color="#464546"/><stop offset="0.2962" stop-color="#414143"/><stop offset="0.3057" stop-color="#3c3d40"/><stop offset="0.3164" stop-color="#373a3e"/><stop offset="0.3306" stop-color="#33363b"/><stop offset="0.3483" stop-color="#2f3439"/><stop offset="0.3720" stop-color="#2b3138"/><stop offset="0.4135" stop-color="#293036"/><stop offset="1.0000" stop-color="#282f36"/></linearGradient><clipPath id="capclip"><path d="M705 408h6v1h-6zM696 409h24v1h-24zM690 410h35v1h-35zM683 411h46v1h-46zM677 412h55v1h-55zM670 413h64v1h-64zM663 414h74v1h-74zM657 415h82v1h-82zM650 416h91v1h-91zM644 417h98v1h-98zM637 418h107v1h-107zM632 419h114v1h-114zM629 420h118v1h-118zM626 421h123v1h-123zM623 422h127v1h-127zM621 423h130v1h-130zM619 424h133v1h-133zM616 425h138v1h-138zM615 426h140v1h-140zM613 427h143v1h-143zM611 428h146v1h-146zM610 429h148v1h-148zM608 430h151v1h-151zM607 431h153v1h-153zM605 432h155v1h-155zM604 433h157v1h-157zM603 434h159v1h-159zM602 435h161v1h-161zM601 436h163v1h-163zM600 437h164v1h-164zM599 438h166v1h-166zM598 439h168v1h-168zM597 440h169v1h-169zM596 441h171v1h-171zM595 442h172v1h-172zM594 443h174v1h-174zM593 444h176v1h-176zM592 445h177v1h-177zM592 446h178v1h-178zM591 447h179v1h-179zM590 448h181v1h-181zM590 449h181v1h-181zM589 450h182v1h-182zM588 451h184v1h-184zM588 452h184v1h-184zM587 453h186v1h-186zM586 454h187v1h-187zM586 455h187v1h-187zM585 456h189v1h-189zM585 457h189v1h-189zM584 458h190v1h-190zM584 459h190v1h-190zM583 460h192v1h-192zM583 461h192v1h-192zM583 462h192v1h-192zM582 463h193v1h-193zM582 464h193v1h-193zM581 465h195v1h-195zM581 466h195v1h-195zM581 467h195v1h-195zM580 468h196v1h-196zM580 469h196v1h-196zM580 470h196v1h-196zM580 471h196v1h-196zM579 472h197v1h-197zM579 473h197v1h-197zM579 474h198v1h-198zM579 475h198v1h-198zM578 476h199v1h-199zM578 477h199v1h-199zM578 478h199v1h-199zM578 479h198v1h-198zM578 480h198v1h-198zM578 481h198v1h-198zM578 482h198v1h-198zM578 483h198v1h-198zM577 484h199v1h-199zM577 485h199v1h-199zM577 486h199v1h-199zM577 487h199v1h-199zM577 488h198v1h-198zM577 489h198v1h-198zM577 490h198v1h-198zM577 491h198v1h-198zM577 492h198v1h-198zM577 493h197v1h-197zM577 494h197v1h-197zM577 495h197v1h-197zM578 496h196v1h-196zM578 497h195v1h-195zM578 498h195v1h-195zM578 499h195v1h-195zM578 500h194v1h-194zM578 501h194v1h-194zM578 502h193v1h-193zM579 503h192v1h-192zM579 504h192v1h-192zM579 505h191v1h-191zM579 506h191v1h-191zM579 507h190v1h-190zM580 508h189v1h-189zM580 509h188v1h-188zM580 510h187v1h-187zM581 511h186v1h-186zM581 512h185v1h-185zM581 513h185v1h-185zM582 514h183v1h-183zM582 515h182v1h-182zM582 516h182v1h-182zM583 517h180v1h-180zM583 518h179v1h-179zM584 519h177v1h-177zM584 520h176v1h-176zM584 521h176v1h-176zM585 522h174v1h-174zM586 523h172v1h-172zM586 524h171v1h-171zM587 525h169v1h-169zM587 526h168v1h-168zM588 527h166v1h-166zM588 528h164v1h-164zM589 529h162v1h-162zM590 530h160v1h-160zM590 531h159v1h-159zM591 532h156v1h-156zM592 533h154v1h-154zM593 534h151v1h-151zM593 535h149v1h-149zM594 536h147v1h-147zM595 537h144v1h-144zM596 538h141v1h-141zM597 539h137v1h-137zM598 540h134v1h-134zM599 541h130v1h-130zM600 542h126v1h-126zM601 543h121v1h-121zM602 544h117v1h-117zM603 545h113v1h-113zM604 546h108v1h-108zM606 547h103v1h-103zM607 548h99v1h-99zM609 549h94v1h-94zM610 550h89v1h-89zM612 551h84v1h-84zM613 552h80v1h-80zM615 553h75v1h-75zM617 554h69v1h-69zM619 555h64v1h-64zM621 556h59v1h-59zM624 557h52v1h-52zM626 558h47v1h-47zM630 559h40v1h-40zM634 560h32v1h-32zM639 561h22v1h-22z"/></clipPath><linearGradient id="c4" gradientUnits="userSpaceOnUse" x1="0" y1="400" x2="0" y2="600"><stop offset="0.4225" stop-color="#89abc0"/><stop offset="0.4775" stop-color="#82a2b5"/></linearGradient><linearGradient id="c6" gradientUnits="userSpaceOnUse" x1="0" y1="400" x2="0" y2="600"><stop offset="0.3625" stop-color="#90b5ca"/><stop offset="0.4375" stop-color="#8aadc1"/><stop offset="0.5025" stop-color="#82a2b5"/><stop offset="0.5375" stop-color="#7b98aa"/></linearGradient><linearGradient id="c8" gradientUnits="userSpaceOnUse" x1="0" y1="400" x2="0" y2="600"><stop offset="0.3275" stop-color="#93b9cf"/><stop offset="0.3725" stop-color="#91b7cc"/><stop offset="0.4575" stop-color="#89acc0"/><stop offset="0.5275" stop-color="#809fb2"/><stop offset="0.5675" stop-color="#7794a5"/></linearGradient><linearGradient id="c10" gradientUnits="userSpaceOnUse" x1="0" y1="400" x2="0" y2="600"><stop offset="0.3025" stop-color="#95bcd3"/><stop offset="0.3325" stop-color="#95bcd2"/><stop offset="0.4425" stop-color="#8cafc4"/><stop offset="0.5425" stop-color="#7f9eb0"/><stop offset="0.5725" stop-color="#7996a8"/><stop offset="0.5925" stop-color="#738e9f"/></linearGradient><linearGradient id="c12" gradientUnits="userSpaceOnUse" x1="0" y1="400" x2="0" y2="600"><stop offset="0.2825" stop-color="#98bfd6"/><stop offset="0.3425" stop-color="#95bcd3"/><stop offset="0.4625" stop-color="#8aadc2"/><stop offset="0.5625" stop-color="#7d9bad"/><stop offset="0.5925" stop-color="#7793a4"/><stop offset="0.6025" stop-color="#748fa0"/><stop offset="0.6125" stop-color="#6f8999"/></linearGradient><linearGradient id="c14" gradientUnits="userSpaceOnUse" x1="0" y1="400" x2="0" y2="600"><stop offset="0.2675" stop-color="#99c2d9"/><stop offset="0.3375" stop-color="#96bdd4"/><stop offset="0.4675" stop-color="#8aadc2"/><stop offset="0.5375" stop-color="#82a2b5"/><stop offset="0.5975" stop-color="#7894a5"/><stop offset="0.6175" stop-color="#728c9c"/><stop offset="0.6325" stop-color="#6a8291"/></linearGradient><linearGradient id="c16" gradientUnits="userSpaceOnUse" x1="0" y1="400" x2="0" y2="600"><stop offset="0.2525" stop-color="#9bc4dc"/><stop offset="0.3225" stop-color="#98c0d7"/><stop offset="0.4625" stop-color="#8cafc4"/><stop offset="0.5425" stop-color="#82a2b5"/><stop offset="0.6125" stop-color="#7692a3"/><stop offset="0.6325" stop-color="#6f8898"/><stop offset="0.6475" stop-color="#677e8d"/></linearGradient><linearGradient id="c18" gradientUnits="userSpaceOnUse" x1="0" y1="400" x2="0" y2="600"><stop offset="0.2375" stop-color="#9cc6de"/><stop offset="0.3175" stop-color="#99c1d8"/><stop offset="0.4675" stop-color="#8cafc4"/><stop offset="0.5525" stop-color="#81a1b4"/><stop offset="0.6225" stop-color="#7590a1"/><stop offset="0.6475" stop-color="#6b8493"/><stop offset="0.6625" stop-color="#637987"/></linearGradient><linearGradient id="c20" gradientUnits="userSpaceOnUse" x1="0" y1="400" x2="0" y2="600"><stop offset="0.2225" stop-color="#9dc7df"/><stop offset="0.2775" stop-color="#9bc5dd"/><stop offset="0.3925" stop-color="#93b9cf"/><stop offset="0.5175" stop-color="#86a8bb"/><stop offset="0.5875" stop-color="#7c9bac"/><stop offset="0.6275" stop-color="#7590a1"/><stop offset="0.6575" stop-color="#6a8291"/><stop offset="0.6675" stop-color="#657c8a"/><stop offset="0.6725" stop-color="#627886"/><stop offset="0.6775" stop-color="#5d727f"/></linearGradient><linearGradient id="c22" gradientUnits="userSpaceOnUse" x1="0" y1="400" x2="0" y2="600"><stop offset="0.2125" stop-color="#9ec9e1"/><stop offset="0.2725" stop-color="#9cc6de"/><stop offset="0.3925" stop-color="#94bad0"/><stop offset="0.5225" stop-color="#86a8bb"/><stop offset="0.5925" stop-color="#7c9aac"/><stop offset="0.6325" stop-color="#7590a1"/><stop offset="0.6675" stop-color="#68808f"/><stop offset="0.6775" stop-color="#637a88"/><stop offset="0.6875" stop-color="#5d717e"/></linearGradient><linearGradient id="c24" gradientUnits="userSpaceOnUse" x1="0" y1="400" x2="0" y2="600"><stop offset="0.2025" stop-color="#9fcae3"/><stop offset="0.2975" stop-color="#9bc4dc"/><stop offset="0.4725" stop-color="#8cb0c5"/><stop offset="0.5725" stop-color="#809fb2"/><stop offset="0.6225" stop-color="#7894a6"/><stop offset="0.6525" stop-color="#708a9a"/><stop offset="0.6825" stop-color="#647b89"/><stop offset="0.6975" stop-color="#5b6f7c"/></linearGradient><linearGradient id="c26" gradientUnits="userSpaceOnUse" x1="0" y1="400" x2="0" y2="600"><stop offset="0.1925" stop-color="#a0cce4"/><stop offset="0.2575" stop-color="#9ec8e0"/><stop offset="0.3875" stop-color="#95bbd2"/><stop offset="0.5275" stop-color="#86a8bc"/><stop offset="0.6075" stop-color="#7b99aa"/><stop offset="0.6475" stop-color="#738e9e"/><stop offset="0.6875" stop-color="#647b89"/><stop offset="0.6975" stop-color="#5f7482"/><stop offset="0.7075" stop-color="#586c78"/></linearGradient><linearGradient id="c28" gradientUnits="userSpaceOnUse" x1="0" y1="400" x2="0" y2="600"><stop offset="0.1825" stop-color="#a1cde5"/><stop offset="0.2475" stop-color="#9fc9e2"/><stop offset="0.3825" stop-color="#95bcd3"/><stop offset="0.5275" stop-color="#87a8bc"/><stop offset="0.6075" stop-color="#7c99ab"/><stop offset="0.6375" stop-color="#7692a3"/><stop offset="0.6675" stop-color="#6e8797"/><stop offset="0.6975" stop-color="#627886"/><stop offset="0.7075" stop-color="#5d717e"/><stop offset="0.7175" stop-color="#556874"/></linearGradient><linearGradient id="c30" gradientUnits="userSpaceOnUse" x1="0" y1="400" x2="0" y2="600"><stop offset="0.1725" stop-color="#a1cde6"/><stop offset="0.2425" stop-color="#9fcae3"/><stop offset="0.3825" stop-color="#95bdd3"/><stop offset="0.5325" stop-color="#86a8bc"/><stop offset="0.6175" stop-color="#7a98aa"/><stop offset="0.6475" stop-color="#7591a1"/><stop offset="0.6975" stop-color="#647a88"/><stop offset="0.7175" stop-color="#5a6e7a"/><stop offset="0.7225" stop-color="#566975"/><stop offset="0.7275" stop-color="#51626e"/></linearGradient><linearGradient id="c32" gradientUnits="userSpaceOnUse" x1="0" y1="400" x2="0" y2="600"><stop offset="0.1625" stop-color="#a1cee7"/><stop offset="0.1925" stop-color="#a2cee7"/><stop offset="0.3525" stop-color="#98c0d7"/><stop offset="0.5175" stop-color="#89abbf"/><stop offset="0.6075" stop-color="#7d9bad"/><stop offset="0.6575" stop-color="#738e9e"/><stop offset="0.7075" stop-color="#617785"/><stop offset="0.7225" stop-color="#5a6d7a"/><stop offset="0.7325" stop-color="#526470"/></linearGradient><linearGradient id="c34" gradientUnits="userSpaceOnUse" x1="0" y1="400" x2="0" y2="600"><stop offset="0.1575" stop-color="#a2cfe8"/><stop offset="0.2275" stop-color="#a0cce5"/><stop offset="0.3775" stop-color="#96bed4"/><stop offset="0.5375" stop-color="#86a8bc"/><stop offset="0.6275" stop-color="#7a97a8"/><stop offset="0.6575" stop-color="#748fa0"/><stop offset="0.6925" stop-color="#68808f"/><stop offset="0.7225" stop-color="#5c707d"/><stop offset="0.7325" stop-color="#566975"/><stop offset="0.7425" stop-color="#4d5e69"/></linearGradient><linearGradient id="c36" gradientUnits="userSpaceOnUse" x1="0" y1="400" x2="0" y2="600"><stop offset="0.1525" stop-color="#a3d0ea"/><stop offset="0.2225" stop-color="#a1cde6"/><stop offset="0.3725" stop-color="#97bed5"/><stop offset="0.5375" stop-color="#87a8bc"/><stop offset="0.6275" stop-color="#7a97a9"/><stop offset="0.6575" stop-color="#7590a1"/><stop offset="0.6975" stop-color="#68808e"/><stop offset="0.7275" stop-color="#5b707c"/><stop offset="0.7375" stop-color="#566875"/><stop offset="0.7475" stop-color="#4e5f6a"/></linearGradient><linearGradient id="c38" gradientUnits="userSpaceOnUse" x1="0" y1="400" x2="0" y2="600"><stop offset="0.1425" stop-color="#a3d0ea"/><stop offset="0.1925" stop-color="#a2cfe8"/><stop offset="0.3525" stop-color="#99c1d8"/><stop offset="0.5275" stop-color="#88aabe"/><stop offset="0.6275" stop-color="#7b98aa"/><stop offset="0.6575" stop-color="#7591a2"/><stop offset="0.6975" stop-color="#698190"/><stop offset="0.7325" stop-color="#5a6f7b"/><stop offset="0.7425" stop-color="#556874"/><stop offset="0.7525" stop-color="#4e5e69"/></linearGradient><linearGradient id="c40" gradientUnits="userSpaceOnUse" x1="0" y1="400" x2="0" y2="600"><stop offset="0.1375" stop-color="#a4d1eb"/><stop offset="0.1875" stop-color="#a3d0e9"/><stop offset="0.3525" stop-color="#99c1d8"/><stop offset="0.4725" stop-color="#8eb3c8"/><stop offset="0.5975" stop-color="#7f9eb1"/><stop offset="0.6425" stop-color="#7895a6"/><stop offset="0.6725" stop-color="#728c9c"/><stop offset="0.7125" stop-color="#647b89"/><stop offset="0.7425" stop-color="#576a76"/><stop offset="0.7525" stop-color="#51626e"/><stop offset="0.7575" stop-color="#4d5d68"/><stop offset="0.7625" stop-color="#47555f"/></linearGradient><linearGradient id="c42" gradientUnits="userSpaceOnUse" x1="0" y1="400" x2="0" y2="600"><stop offset="0.1325" stop-color="#a4d2ec"/><stop offset="0.2125" stop-color="#a2cee7"/><stop offset="0.3725" stop-color="#97bfd6"/><stop offset="0.5425" stop-color="#87a8bc"/><stop offset="0.6425" stop-color="#7996a7"/><stop offset="0.6725" stop-color="#728d9d"/><stop offset="0.7125" stop-color="#657c8b"/><stop offset="0.7475" stop-color="#566975"/><stop offset="0.7575" stop-color="#50616c"/><stop offset="0.7625" stop-color="#4c5c67"/><stop offset="0.7675" stop-color="#46555e"/></linearGradient><linearGradient id="c44" gradientUnits="userSpaceOnUse" x1="0" y1="400" x2="0" y2="600"><stop offset="0.1275" stop-color="#a5d3ec"/><stop offset="0.2075" stop-color="#a2cfe8"/><stop offset="0.3725" stop-color="#97bfd6"/><stop offset="0.4875" stop-color="#8db1c6"/><stop offset="0.6125" stop-color="#7e9cae"/><stop offset="0.6575" stop-color="#7692a3"/><stop offset="0.7075" stop-color="#68808e"/><stop offset="0.7475" stop-color="#576b77"/><stop offset="0.7625" stop-color="#4f5f6b"/><stop offset="0.7675" stop-color="#4b5a65"/><stop offset="0.7725" stop-color="#45535d"/></linearGradient><linearGradient id="c46" gradientUnits="userSpaceOnUse" x1="0" y1="400" x2="0" y2="600"><stop offset="0.1225" stop-color="#a5d3ed"/><stop offset="0.2025" stop-color="#a3cfe9"/><stop offset="0.3675" stop-color="#98c0d7"/><stop offset="0.4875" stop-color="#8db1c6"/><stop offset="0.6125" stop-color="#7e9daf"/><stop offset="0.6575" stop-color="#7793a4"/><stop offset="0.7075" stop-color="#68808f"/><stop offset="0.7375" stop-color="#5d727f"/><stop offset="0.7625" stop-color="#51626d"/><stop offset="0.7725" stop-color="#495963"/><stop offset="0.7775" stop-color="#43515a"/></linearGradient><linearGradient id="c48" gradientUnits="userSpaceOnUse" x1="0" y1="400" x2="0" y2="600"><stop offset="0.1175" stop-color="#a5d3ed"/><stop offset="0.1675" stop-color="#a4d2ec"/><stop offset="0.3475" stop-color="#9ac2da"/><stop offset="0.4725" stop-color="#8fb3c9"/><stop offset="0.6075" stop-color="#7f9eb0"/><stop offset="0.6575" stop-color="#7793a4"/><stop offset="0.6875" stop-color="#6f8999"/><stop offset="0.7275" stop-color="#627886"/><stop offset="0.7625" stop-color="#52646f"/><stop offset="0.7725" stop-color="#4c5c66"/><stop offset="0.7775" stop-color="#475660"/><stop offset="0.7825" stop-color="#404d56"/></linearGradient><linearGradient id="c50" gradientUnits="userSpaceOnUse" x1="0" y1="400" x2="0" y2="600"><stop offset="0.1125" stop-color="#a5d4ee"/><stop offset="0.1675" stop-color="#a4d2ec"/><stop offset="0.3475" stop-color="#9ac2da"/><stop offset="0.4725" stop-color="#8fb4c9"/><stop offset="0.6075" stop-color="#7f9eb1"/><stop offset="0.6575" stop-color="#7794a5"/><stop offset="0.6875" stop-color="#708a9a"/><stop offset="0.7275" stop-color="#637987"/><stop offset="0.7625" stop-color="#536571"/><stop offset="0.7725" stop-color="#4d5e69"/><stop offset="0.7825" stop-color="#45535d"/></linearGradient><linearGradient id="c52" gradientUnits="userSpaceOnUse" x1="0" y1="400" x2="0" y2="600"><stop offset="0.1125" stop-color="#a5d4ee"/><stop offset="0.1975" stop-color="#a3d0ea"/><stop offset="0.3675" stop-color="#98c0d7"/><stop offset="0.4875" stop-color="#8db2c7"/><stop offset="0.6175" stop-color="#7e9cae"/><stop offset="0.6625" stop-color="#7693a4"/><stop offset="0.7125" stop-color="#68808f"/><stop offset="0.7425" stop-color="#5d727f"/><stop offset="0.7725" stop-color="#4e5f6a"/><stop offset="0.7825" stop-color="#47555f"/><stop offset="0.7875" stop-color="#404d56"/></linearGradient><linearGradient id="c54" gradientUnits="userSpaceOnUse" x1="0" y1="400" x2="0" y2="600"><stop offset="0.1075" stop-color="#a6d4ee"/><stop offset="0.1625" stop-color="#a5d3ed"/><stop offset="0.3475" stop-color="#9ac3da"/><stop offset="0.4775" stop-color="#8fb3c8"/><stop offset="0.6175" stop-color="#7e9caf"/><stop offset="0.6675" stop-color="#7692a3"/><stop offset="0.7175" stop-color="#677f8d"/><stop offset="0.7475" stop-color="#5c707d"/><stop offset="0.7775" stop-color="#4c5c67"/><stop offset="0.7875" stop-color="#44525c"/><stop offset="0.7925" stop-color="#3b474f"/></linearGradient><linearGradient id="c56" gradientUnits="userSpaceOnUse" x1="0" y1="400" x2="0" y2="600"><stop offset="0.1025" stop-color="#a6d5ef"/><stop offset="0.1575" stop-color="#a5d3ed"/><stop offset="0.3425" stop-color="#9ac3db"/><stop offset="0.4725" stop-color="#8fb4c9"/><stop offset="0.6125" stop-color="#7f9eb0"/><stop offset="0.6625" stop-color="#7793a4"/><stop offset="0.6975" stop-color="#6e8797"/><stop offset="0.7375" stop-color="#607684"/><stop offset="0.7725" stop-color="#51626e"/><stop offset="0.7825" stop-color="#4b5b65"/><stop offset="0.7925" stop-color="#425059"/></linearGradient><linearGradient id="c58" gradientUnits="userSpaceOnUse" x1="0" y1="400" x2="0" y2="600"><stop offset="0.1025" stop-color="#a6d5ef"/><stop offset="0.1875" stop-color="#a4d1eb"/><stop offset="0.3675" stop-color="#98c1d8"/><stop offset="0.4925" stop-color="#8db1c6"/><stop offset="0.6225" stop-color="#7d9cae"/><stop offset="0.6725" stop-color="#7591a2"/><stop offset="0.7225" stop-color="#667d8c"/><stop offset="0.7525" stop-color="#5b6f7c"/><stop offset="0.7825" stop-color="#4b5b66"/><stop offset="0.7925" stop-color="#43515b"/><stop offset="0.7975" stop-color="#3d4951"/></linearGradient><linearGradient id="c60" gradientUnits="userSpaceOnUse" x1="0" y1="400" x2="0" y2="600"><stop offset="0.0975" stop-color="#a6d5ef"/><stop offset="0.1225" stop-color="#a6d5f0"/><stop offset="0.2525" stop-color="#a0cce5"/><stop offset="0.4125" stop-color="#95bcd2"/><stop offset="0.5225" stop-color="#8aadc1"/><stop offset="0.6425" stop-color="#7b98aa"/><stop offset="0.6825" stop-color="#738e9e"/><stop offset="0.7325" stop-color="#637987"/><stop offset="0.7725" stop-color="#52646f"/><stop offset="0.7875" stop-color="#495862"/><stop offset="0.7975" stop-color="#404d56"/></linearGradient><linearGradient id="c62" gradientUnits="userSpaceOnUse" x1="0" y1="400" x2="0" y2="600"><stop offset="0.0975" stop-color="#a6d6f0"/><stop offset="0.1575" stop-color="#a5d4ee"/><stop offset="0.3475" stop-color="#9ac3da"/><stop offset="0.4775" stop-color="#8fb3c9"/><stop offset="0.6175" stop-color="#7e9daf"/><stop offset="0.6675" stop-color="#7693a4"/><stop offset="0.7075" stop-color="#6c8494"/><stop offset="0.7475" stop-color="#5e7380"/><stop offset="0.7825" stop-color="#4d5e68"/><stop offset="0.7925" stop-color="#46555f"/><stop offset="0.7975" stop-color="#424f58"/><stop offset="0.8025" stop-color="#3b464e"/></linearGradient><linearGradient id="c64" gradientUnits="userSpaceOnUse" x1="0" y1="400" x2="0" y2="600"><stop offset="0.0925" stop-color="#a6d5f0"/><stop offset="0.1325" stop-color="#a6d5ef"/><stop offset="0.3275" stop-color="#9cc5dd"/><stop offset="0.4675" stop-color="#90b5ca"/><stop offset="0.6125" stop-color="#7f9eb1"/><stop offset="0.6625" stop-color="#7794a5"/><stop offset="0.6875" stop-color="#728c9d"/><stop offset="0.7375" stop-color="#627886"/><stop offset="0.7775" stop-color="#51626d"/><stop offset="0.7925" stop-color="#485761"/><stop offset="0.8025" stop-color="#3e4b54"/></linearGradient><linearGradient id="c66" gradientUnits="userSpaceOnUse" x1="0" y1="400" x2="0" y2="600"><stop offset="0.0925" stop-color="#a6d6f0"/><stop offset="0.1525" stop-color="#a5d4ee"/><stop offset="0.3425" stop-color="#9bc4db"/><stop offset="0.4775" stop-color="#8fb4c9"/><stop offset="0.6225" stop-color="#7e9caf"/><stop offset="0.6725" stop-color="#7692a3"/><stop offset="0.7325" stop-color="#647b89"/><stop offset="0.7625" stop-color="#586c78"/><stop offset="0.7825" stop-color="#4e5f6a"/><stop offset="0.7975" stop-color="#44535c"/><stop offset="0.8025" stop-color="#404d55"/><stop offset="0.8075" stop-color="#37424a"/></linearGradient><linearGradient id="c68" gradientUnits="userSpaceOnUse" x1="0" y1="400" x2="0" y2="600"><stop offset="0.0925" stop-color="#a6d6f1"/><stop offset="0.1825" stop-color="#a4d2ec"/><stop offset="0.3625" stop-color="#99c1d9"/><stop offset="0.4925" stop-color="#8eb2c7"/><stop offset="0.5825" stop-color="#83a4b7"/><stop offset="0.6475" stop-color="#7a97a9"/><stop offset="0.6775" stop-color="#7590a1"/><stop offset="0.7325" stop-color="#647b89"/><stop offset="0.7625" stop-color="#586c78"/><stop offset="0.7825" stop-color="#4f5f6b"/><stop offset="0.7975" stop-color="#45535d"/><stop offset="0.8025" stop-color="#404d56"/><stop offset="0.8075" stop-color="#39444c"/></linearGradient><linearGradient id="c70" gradientUnits="userSpaceOnUse" x1="0" y1="400" x2="0" y2="600"><stop offset="0.0925" stop-color="#a7d6f1"/><stop offset="0.1825" stop-color="#a4d2ec"/><stop offset="0.3625" stop-color="#99c2d9"/><stop offset="0.4925" stop-color="#8eb2c7"/><stop offset="0.6325" stop-color="#7c9aac"/><stop offset="0.6825" stop-color="#738f9f"/><stop offset="0.7325" stop-color="#647b89"/><stop offset="0.7625" stop-color="#596c79"/><stop offset="0.7925" stop-color="#495862"/><stop offset="0.8025" stop-color="#414e57"/><stop offset="0.8075" stop-color="#3b464f"/></linearGradient><linearGradient id="c72" gradientUnits="userSpaceOnUse" x1="0" y1="400" x2="0" y2="600"><stop offset="0.0875" stop-color="#a6d6f0"/><stop offset="0.1275" stop-color="#a6d6f0"/><stop offset="0.2575" stop-color="#a0cce5"/><stop offset="0.4175" stop-color="#95bbd2"/><stop offset="0.5275" stop-color="#8aadc1"/><stop offset="0.6475" stop-color="#7a97a9"/><stop offset="0.6775" stop-color="#7591a1"/><stop offset="0.7325" stop-color="#647b89"/><stop offset="0.7625" stop-color="#596c79"/><stop offset="0.7925" stop-color="#495963"/><stop offset="0.8025" stop-color="#414f58"/><stop offset="0.8075" stop-color="#3c4850"/></linearGradient><linearGradient id="c74" gradientUnits="userSpaceOnUse" x1="0" y1="400" x2="0" y2="600"><stop offset="0.0875" stop-color="#a6d6f1"/><stop offset="0.1475" stop-color="#a6d4ef"/><stop offset="0.3375" stop-color="#9bc4dc"/><stop offset="0.4725" stop-color="#90b4ca"/><stop offset="0.6175" stop-color="#7f9db0"/><stop offset="0.6675" stop-color="#7793a4"/><stop offset="0.7075" stop-color="#6c8595"/><stop offset="0.7475" stop-color="#5f7481"/><stop offset="0.7725" stop-color="#546773"/><stop offset="0.7925" stop-color="#495963"/><stop offset="0.8025" stop-color="#424f58"/><stop offset="0.8075" stop-color="#3c4851"/></linearGradient><linearGradient id="c76" gradientUnits="userSpaceOnUse" x1="0" y1="400" x2="0" y2="600"><stop offset="0.0875" stop-color="#a7d6f1"/><stop offset="0.1475" stop-color="#a6d4ef"/><stop offset="0.3375" stop-color="#9bc4dc"/><stop offset="0.4725" stop-color="#90b4ca"/><stop offset="0.6175" stop-color="#7f9db0"/><stop offset="0.6675" stop-color="#7793a4"/><stop offset="0.7075" stop-color="#6c8595"/><stop offset="0.7475" stop-color="#5f7481"/><stop offset="0.7725" stop-color="#546773"/><stop offset="0.7925" stop-color="#495963"/><stop offset="0.8025" stop-color="#424f59"/><stop offset="0.8075" stop-color="#3d4951"/></linearGradient><linearGradient id="c78" gradientUnits="userSpaceOnUse" x1="0" y1="400" x2="0" y2="600"><stop offset="0.0825" stop-color="#a6d6f0"/><stop offset="0.1075" stop-color="#a7d6f1"/><stop offset="0.2425" stop-color="#a1cde6"/><stop offset="0.4075" stop-color="#95bcd3"/><stop offset="0.5225" stop-color="#8aadc2"/><stop offset="0.6475" stop-color="#7a97a9"/><stop offset="0.6775" stop-color="#7590a1"/><stop offset="0.7325" stop-color="#647b89"/><stop offset="0.7625" stop-color="#596c79"/><stop offset="0.7925" stop-color="#495963"/><stop offset="0.8025" stop-color="#424f59"/><stop offset="0.8075" stop-color="#3d4951"/></linearGradient><linearGradient id="c80" gradientUnits="userSpaceOnUse" x1="0" y1="400" x2="0" y2="600"><stop offset="0.0825" stop-color="#a6d6f1"/><stop offset="0.1425" stop-color="#a6d5ef"/><stop offset="0.3325" stop-color="#9bc5dc"/><stop offset="0.4725" stop-color="#8fb4ca"/><stop offset="0.6175" stop-color="#7f9db0"/><stop offset="0.6675" stop-color="#7793a4"/><stop offset="0.7075" stop-color="#6c8595"/><stop offset="0.7475" stop-color="#5f7481"/><stop offset="0.7725" stop-color="#546672"/><stop offset="0.7925" stop-color="#495963"/><stop offset="0.8025" stop-color="#424f58"/><stop offset="0.8075" stop-color="#3c4851"/></linearGradient><linearGradient id="c82" gradientUnits="userSpaceOnUse" x1="0" y1="400" x2="0" y2="600"><stop offset="0.0825" stop-color="#a7d6f1"/><stop offset="0.1425" stop-color="#a6d5ef"/><stop offset="0.3325" stop-color="#9bc5dc"/><stop offset="0.4725" stop-color="#8fb4ca"/><stop offset="0.6175" stop-color="#7f9db0"/><stop offset="0.6675" stop-color="#7793a4"/><stop offset="0.7075" stop-color="#6c8594"/><stop offset="0.7475" stop-color="#5e7481"/><stop offset="0.7725" stop-color="#546672"/><stop offset="0.7925" stop-color="#495863"/><stop offset="0.8025" stop-color="#414e58"/><stop offset="0.8075" stop-color="#3c4750"/></linearGradient><linearGradient id="c84" gradientUnits="userSpaceOnUse" x1="0" y1="400" x2="0" y2="600"><stop offset="0.0775" stop-color="#a6d6f0"/><stop offset="0.1175" stop-color="#a6d6f0"/><stop offset="0.2475" stop-color="#a1cde6"/><stop offset="0.4075" stop-color="#95bcd3"/><stop offset="0.5225" stop-color="#8aadc2"/><stop offset="0.6475" stop-color="#7a97a9"/><stop offset="0.6775" stop-color="#7590a1"/><stop offset="0.7325" stop-color="#647a88"/><stop offset="0.7625" stop-color="#586c78"/><stop offset="0.7925" stop-color="#485762"/><stop offset="0.8025" stop-color="#404d56"/><stop offset="0.8075" stop-color="#3a454d"/></linearGradient><linearGradient id="c86" gradientUnits="userSpaceOnUse" x1="0" y1="400" x2="0" y2="600"><stop offset="0.0775" stop-color="#a6d6f0"/><stop offset="0.1375" stop-color="#a6d5ef"/><stop offset="0.3325" stop-color="#9bc5dc"/><stop offset="0.4725" stop-color="#8fb4c9"/><stop offset="0.6175" stop-color="#7e9daf"/><stop offset="0.6675" stop-color="#7793a4"/><stop offset="0.7075" stop-color="#6c8594"/><stop offset="0.7475" stop-color="#5e7380"/><stop offset="0.7725" stop-color="#536671"/><stop offset="0.7925" stop-color="#485761"/><stop offset="0.8025" stop-color="#404d56"/><stop offset="0.8075" stop-color="#39444c"/></linearGradient><linearGradient id="c88" gradientUnits="userSpaceOnUse" x1="0" y1="400" x2="0" y2="600"><stop offset="0.0775" stop-color="#a7d6f1"/><stop offset="0.1375" stop-color="#a6d5ef"/><stop offset="0.3325" stop-color="#9bc4dc"/><stop offset="0.4725" stop-color="#8fb4c9"/><stop offset="0.6175" stop-color="#7e9daf"/><stop offset="0.6675" stop-color="#7692a3"/><stop offset="0.7275" stop-color="#657c8a"/><stop offset="0.7575" stop-color="#5a6e7a"/><stop offset="0.7875" stop-color="#4b5b65"/><stop offset="0.7975" stop-color="#44515b"/><stop offset="0.8025" stop-color="#3f4b54"/><stop offset="0.8075" stop-color="#353f47"/></linearGradient><linearGradient id="c90" gradientUnits="userSpaceOnUse" x1="0" y1="400" x2="0" y2="600"><stop offset="0.0725" stop-color="#a6d5f0"/><stop offset="0.0975" stop-color="#a7d6f1"/><stop offset="0.2325" stop-color="#a2cee7"/><stop offset="0.3975" stop-color="#96bdd4"/><stop offset="0.5175" stop-color="#8baec2"/><stop offset="0.6425" stop-color="#7a98a9"/><stop offset="0.6725" stop-color="#7591a2"/><stop offset="0.7275" stop-color="#657b8a"/><stop offset="0.7575" stop-color="#596d79"/><stop offset="0.7875" stop-color="#4a5963"/><stop offset="0.7975" stop-color="#424f58"/><stop offset="0.8025" stop-color="#3c4850"/></linearGradient><linearGradient id="c92" gradientUnits="userSpaceOnUse" x1="0" y1="400" x2="0" y2="600"><stop offset="0.0725" stop-color="#a6d6f0"/><stop offset="0.1125" stop-color="#a6d6f0"/><stop offset="0.2425" stop-color="#a1cde6"/><stop offset="0.4025" stop-color="#96bdd3"/><stop offset="0.5175" stop-color="#8baec2"/><stop offset="0.6425" stop-color="#7a98a9"/><stop offset="0.6725" stop-color="#7591a2"/><stop offset="0.7275" stop-color="#647b89"/><stop offset="0.7575" stop-color="#596d79"/><stop offset="0.7875" stop-color="#495963"/><stop offset="0.7975" stop-color="#414e57"/><stop offset="0.8025" stop-color="#3a464e"/></linearGradient><linearGradient id="c94" gradientUnits="userSpaceOnUse" x1="0" y1="400" x2="0" y2="600"><stop offset="0.0725" stop-color="#a6d6f1"/><stop offset="0.1325" stop-color="#a6d5ef"/><stop offset="0.3225" stop-color="#9cc5dd"/><stop offset="0.4625" stop-color="#90b5ca"/><stop offset="0.6075" stop-color="#7f9eb1"/><stop offset="0.6575" stop-color="#7894a5"/><stop offset="0.6825" stop-color="#728d9d"/><stop offset="0.7325" stop-color="#627886"/><stop offset="0.7725" stop-color="#51636e"/><stop offset="0.7875" stop-color="#485761"/><stop offset="0.7975" stop-color="#3f4c55"/></linearGradient><linearGradient id="c96" gradientUnits="userSpaceOnUse" x1="0" y1="400" x2="0" y2="600"><stop offset="0.0725" stop-color="#a7d6f1"/><stop offset="0.1625" stop-color="#a5d3ed"/><stop offset="0.3475" stop-color="#9ac3da"/><stop offset="0.4775" stop-color="#8eb3c8"/><stop offset="0.6175" stop-color="#7e9caf"/><stop offset="0.6675" stop-color="#7692a2"/><stop offset="0.7225" stop-color="#657c8b"/><stop offset="0.7525" stop-color="#5a6e7a"/><stop offset="0.7825" stop-color="#4a5a65"/><stop offset="0.7925" stop-color="#435059"/><stop offset="0.7975" stop-color="#3c4851"/></linearGradient><linearGradient id="c98" gradientUnits="userSpaceOnUse" x1="0" y1="400" x2="0" y2="600"><stop offset="0.0675" stop-color="#a6d6f0"/><stop offset="0.1075" stop-color="#a6d6f0"/><stop offset="0.2375" stop-color="#a1cde6"/><stop offset="0.3975" stop-color="#96bdd3"/><stop offset="0.5075" stop-color="#8bafc3"/><stop offset="0.6325" stop-color="#7b99ab"/><stop offset="0.6775" stop-color="#738e9e"/><stop offset="0.7275" stop-color="#637988"/><stop offset="0.7675" stop-color="#52646f"/><stop offset="0.7825" stop-color="#495963"/><stop offset="0.7925" stop-color="#404d56"/></linearGradient><linearGradient id="c100" gradientUnits="userSpaceOnUse" x1="0" y1="400" x2="0" y2="600"><stop offset="0.0675" stop-color="#a6d6f1"/><stop offset="0.1275" stop-color="#a6d5ef"/><stop offset="0.3175" stop-color="#9cc5dd"/><stop offset="0.4575" stop-color="#90b5cb"/><stop offset="0.6025" stop-color="#809fb1"/><stop offset="0.6525" stop-color="#7894a6"/><stop offset="0.6775" stop-color="#728d9e"/><stop offset="0.7275" stop-color="#627987"/><stop offset="0.7675" stop-color="#51636e"/><stop offset="0.7825" stop-color="#485761"/><stop offset="0.7875" stop-color="#43515a"/><stop offset="0.7925" stop-color="#3c4850"/></linearGradient><linearGradient id="c102" gradientUnits="userSpaceOnUse" x1="0" y1="400" x2="0" y2="600"><stop offset="0.0675" stop-color="#a7d6f1"/><stop offset="0.1275" stop-color="#a6d5ef"/><stop offset="0.3175" stop-color="#9cc5dd"/><stop offset="0.4525" stop-color="#91b6cb"/><stop offset="0.5975" stop-color="#809fb2"/><stop offset="0.6475" stop-color="#7895a7"/><stop offset="0.6725" stop-color="#738f9f"/><stop offset="0.7225" stop-color="#647a88"/><stop offset="0.7625" stop-color="#536570"/><stop offset="0.7775" stop-color="#4a5963"/><stop offset="0.7875" stop-color="#404d56"/></linearGradient><linearGradient id="c104" gradientUnits="userSpaceOnUse" x1="0" y1="400" x2="0" y2="600"><stop offset="0.0625" stop-color="#a6d6f0"/><stop offset="0.1025" stop-color="#a6d6f0"/><stop offset="0.2325" stop-color="#a1cde6"/><stop offset="0.3925" stop-color="#96bdd3"/><stop offset="0.5025" stop-color="#8bafc3"/><stop offset="0.6225" stop-color="#7c9aac"/><stop offset="0.6675" stop-color="#748fa0"/><stop offset="0.7175" stop-color="#647b89"/><stop offset="0.7575" stop-color="#546671"/><stop offset="0.7725" stop-color="#4a5a65"/><stop offset="0.7825" stop-color="#414e57"/></linearGradient><linearGradient id="c106" gradientUnits="userSpaceOnUse" x1="0" y1="400" x2="0" y2="600"><stop offset="0.0625" stop-color="#a6d6f1"/><stop offset="0.1225" stop-color="#a6d5ef"/><stop offset="0.3125" stop-color="#9cc5dd"/><stop offset="0.4475" stop-color="#91b6cc"/><stop offset="0.5925" stop-color="#80a0b2"/><stop offset="0.6425" stop-color="#7996a7"/><stop offset="0.6675" stop-color="#748fa0"/><stop offset="0.7175" stop-color="#647b89"/><stop offset="0.7575" stop-color="#536571"/><stop offset="0.7725" stop-color="#495963"/><stop offset="0.7775" stop-color="#45535d"/><stop offset="0.7825" stop-color="#3e4a53"/></linearGradient><linearGradient id="c108" gradientUnits="userSpaceOnUse" x1="0" y1="400" x2="0" y2="600"><stop offset="0.0625" stop-color="#a7d6f1"/><stop offset="0.1225" stop-color="#a6d5ef"/><stop offset="0.3125" stop-color="#9cc5dd"/><stop offset="0.4475" stop-color="#91b6cb"/><stop offset="0.5925" stop-color="#809fb2"/><stop offset="0.6425" stop-color="#7895a6"/><stop offset="0.6675" stop-color="#738e9f"/><stop offset="0.7125" stop-color="#657c8a"/><stop offset="0.7525" stop-color="#546672"/><stop offset="0.7675" stop-color="#4b5b65"/><stop offset="0.7775" stop-color="#414e57"/></linearGradient><linearGradient id="c110" gradientUnits="userSpaceOnUse" x1="0" y1="400" x2="0" y2="600"><stop offset="0.0625" stop-color="#a7d6f1"/><stop offset="0.1525" stop-color="#a5d3ed"/><stop offset="0.3325" stop-color="#9ac3da"/><stop offset="0.4625" stop-color="#8fb4c9"/><stop offset="0.6025" stop-color="#7e9daf"/><stop offset="0.6525" stop-color="#7692a3"/><stop offset="0.7025" stop-color="#68808e"/><stop offset="0.7325" stop-color="#5c717e"/><stop offset="0.7525" stop-color="#536470"/><stop offset="0.7675" stop-color="#485862"/><stop offset="0.7725" stop-color="#44515b"/><stop offset="0.7775" stop-color="#3b474f"/></linearGradient><linearGradient id="c112" gradientUnits="userSpaceOnUse" x1="0" y1="400" x2="0" y2="600"><stop offset="0.0575" stop-color="#a6d6f0"/><stop offset="0.0975" stop-color="#a6d6f0"/><stop offset="0.2275" stop-color="#a1cde6"/><stop offset="0.3875" stop-color="#96bdd3"/><stop offset="0.4975" stop-color="#8baec3"/><stop offset="0.6175" stop-color="#7c9aac"/><stop offset="0.6575" stop-color="#7591a1"/><stop offset="0.7075" stop-color="#657c8a"/><stop offset="0.7325" stop-color="#5b6f7c"/><stop offset="0.7575" stop-color="#4e5e69"/><stop offset="0.7675" stop-color="#46545e"/><stop offset="0.7725" stop-color="#404c55"/></linearGradient><linearGradient id="c114" gradientUnits="userSpaceOnUse" x1="0" y1="400" x2="0" y2="600"><stop offset="0.0575" stop-color="#a7d6f1"/><stop offset="0.1175" stop-color="#a6d5ef"/><stop offset="0.3075" stop-color="#9cc5dd"/><stop offset="0.4375" stop-color="#91b6cc"/><stop offset="0.5825" stop-color="#81a0b3"/><stop offset="0.6325" stop-color="#7996a7"/><stop offset="0.6575" stop-color="#7490a0"/><stop offset="0.7025" stop-color="#667d8c"/><stop offset="0.7425" stop-color="#556773"/><stop offset="0.7575" stop-color="#4c5c66"/><stop offset="0.7675" stop-color="#425059"/></linearGradient><linearGradient id="c116" gradientUnits="userSpaceOnUse" x1="0" y1="400" x2="0" y2="600"><stop offset="0.0575" stop-color="#a7d6f1"/><stop offset="0.1475" stop-color="#a5d3ed"/><stop offset="0.3275" stop-color="#9ac3da"/><stop offset="0.4525" stop-color="#8fb4c9"/><stop offset="0.5925" stop-color="#7f9eb0"/><stop offset="0.6425" stop-color="#7793a4"/><stop offset="0.6725" stop-color="#6f8999"/><stop offset="0.7125" stop-color="#617785"/><stop offset="0.7325" stop-color="#586c78"/><stop offset="0.7525" stop-color="#4d5d68"/><stop offset="0.7625" stop-color="#45535c"/><stop offset="0.7675" stop-color="#3e4a52"/></linearGradient><linearGradient id="c118" gradientUnits="userSpaceOnUse" x1="0" y1="400" x2="0" y2="600"><stop offset="0.0525" stop-color="#a6d6f0"/><stop offset="0.0925" stop-color="#a6d6f0"/><stop offset="0.2225" stop-color="#a1cde6"/><stop offset="0.3825" stop-color="#95bdd3"/><stop offset="0.5475" stop-color="#85a6b9"/><stop offset="0.6375" stop-color="#7794a5"/><stop offset="0.6675" stop-color="#708a9a"/><stop offset="0.7075" stop-color="#627886"/><stop offset="0.7425" stop-color="#51636e"/><stop offset="0.7525" stop-color="#4b5b65"/><stop offset="0.7625" stop-color="#414e57"/></linearGradient><linearGradient id="c120" gradientUnits="userSpaceOnUse" x1="0" y1="400" x2="0" y2="600"><stop offset="0.0525" stop-color="#a6d6f1"/><stop offset="0.1125" stop-color="#a6d5ef"/><stop offset="0.3025" stop-color="#9bc5dd"/><stop offset="0.4325" stop-color="#91b6cc"/><stop offset="0.5775" stop-color="#80a0b2"/><stop offset="0.6275" stop-color="#7995a7"/><stop offset="0.6525" stop-color="#738e9f"/><stop offset="0.6975" stop-color="#657b8a"/><stop offset="0.7225" stop-color="#5a6e7b"/><stop offset="0.7475" stop-color="#4c5c67"/><stop offset="0.7575" stop-color="#43515b"/><stop offset="0.7625" stop-color="#3b464e"/></linearGradient><linearGradient id="c122" gradientUnits="userSpaceOnUse" x1="0" y1="400" x2="0" y2="600"><stop offset="0.0525" stop-color="#a7d6f1"/><stop offset="0.1125" stop-color="#a6d5ef"/><stop offset="0.3025" stop-color="#9bc5dc"/><stop offset="0.4325" stop-color="#91b6cb"/><stop offset="0.5725" stop-color="#81a0b3"/><stop offset="0.6225" stop-color="#7996a7"/><stop offset="0.6475" stop-color="#748fa0"/><stop offset="0.6925" stop-color="#657c8b"/><stop offset="0.7175" stop-color="#5b6f7c"/><stop offset="0.7425" stop-color="#4e5e69"/><stop offset="0.7525" stop-color="#45545e"/><stop offset="0.7575" stop-color="#3f4c55"/></linearGradient><linearGradient id="c124" gradientUnits="userSpaceOnUse" x1="0" y1="400" x2="0" y2="600"><stop offset="0.0475" stop-color="#a6d6f0"/><stop offset="0.0725" stop-color="#a7d6f1"/><stop offset="0.2025" stop-color="#a2cee7"/><stop offset="0.3625" stop-color="#97bed5"/><stop offset="0.4725" stop-color="#8cb0c5"/><stop offset="0.5925" stop-color="#7d9cae"/><stop offset="0.6375" stop-color="#7692a2"/><stop offset="0.6875" stop-color="#667d8c"/><stop offset="0.7275" stop-color="#556773"/><stop offset="0.7425" stop-color="#4b5b66"/><stop offset="0.7525" stop-color="#424f59"/></linearGradient><linearGradient id="c126" gradientUnits="userSpaceOnUse" x1="0" y1="400" x2="0" y2="600"><stop offset="0.0475" stop-color="#a6d6f1"/><stop offset="0.1075" stop-color="#a6d5ef"/><stop offset="0.2975" stop-color="#9bc5dd"/><stop offset="0.4275" stop-color="#91b6cb"/><stop offset="0.5675" stop-color="#81a0b3"/><stop offset="0.6175" stop-color="#7996a7"/><stop offset="0.6425" stop-color="#748fa0"/><stop offset="0.6875" stop-color="#657c8a"/><stop offset="0.7125" stop-color="#5b6f7c"/><stop offset="0.7375" stop-color="#4d5d68"/><stop offset="0.7475" stop-color="#44525c"/><stop offset="0.7525" stop-color="#3d4952"/></linearGradient><linearGradient id="c128" gradientUnits="userSpaceOnUse" x1="0" y1="400" x2="0" y2="600"><stop offset="0.0475" stop-color="#a7d6f1"/><stop offset="0.1075" stop-color="#a6d5ef"/><stop offset="0.2925" stop-color="#9cc5dd"/><stop offset="0.4225" stop-color="#91b6cc"/><stop offset="0.5625" stop-color="#81a1b3"/><stop offset="0.6125" stop-color="#7996a8"/><stop offset="0.6375" stop-color="#7490a1"/><stop offset="0.6825" stop-color="#667d8b"/><stop offset="0.7225" stop-color="#546772"/><stop offset="0.7375" stop-color="#4b5a65"/><stop offset="0.7475" stop-color="#414e57"/></linearGradient><linearGradient id="c130" gradientUnits="userSpaceOnUse" x1="0" y1="400" x2="0" y2="600"><stop offset="0.0475" stop-color="#a7d6f1"/><stop offset="0.1375" stop-color="#a5d3ec"/><stop offset="0.3175" stop-color="#9ac2da"/><stop offset="0.4425" stop-color="#8fb3c8"/><stop offset="0.5725" stop-color="#7f9eb1"/><stop offset="0.6225" stop-color="#7793a4"/><stop offset="0.6525" stop-color="#6f8999"/><stop offset="0.6925" stop-color="#617784"/><stop offset="0.7125" stop-color="#586b78"/><stop offset="0.7325" stop-color="#4c5c67"/><stop offset="0.7425" stop-color="#43515a"/><stop offset="0.7475" stop-color="#39454d"/></linearGradient><linearGradient id="c132" gradientUnits="userSpaceOnUse" x1="0" y1="400" x2="0" y2="600"><stop offset="0.0425" stop-color="#a6d6f0"/><stop offset="0.0825" stop-color="#a6d6f0"/><stop offset="0.2725" stop-color="#9dc7df"/><stop offset="0.4075" stop-color="#92b7cd"/><stop offset="0.5525" stop-color="#81a1b4"/><stop offset="0.6025" stop-color="#7a97a8"/><stop offset="0.6275" stop-color="#7591a2"/><stop offset="0.6775" stop-color="#657c8a"/><stop offset="0.7025" stop-color="#5b6f7b"/><stop offset="0.7275" stop-color="#4c5d67"/><stop offset="0.7375" stop-color="#44515b"/><stop offset="0.7425" stop-color="#3b474f"/></linearGradient><linearGradient id="c134" gradientUnits="userSpaceOnUse" x1="0" y1="400" x2="0" y2="600"><stop offset="0.0425" stop-color="#a6d6f0"/><stop offset="0.0975" stop-color="#a6d5ef"/><stop offset="0.2825" stop-color="#9cc6dd"/><stop offset="0.4125" stop-color="#91b7cc"/><stop offset="0.5525" stop-color="#81a1b4"/><stop offset="0.6025" stop-color="#7a97a8"/><stop offset="0.6275" stop-color="#7590a1"/><stop offset="0.6725" stop-color="#667e8c"/><stop offset="0.7125" stop-color="#556773"/><stop offset="0.7275" stop-color="#4b5b66"/><stop offset="0.7375" stop-color="#424f58"/></linearGradient><linearGradient id="c136" gradientUnits="userSpaceOnUse" x1="0" y1="400" x2="0" y2="600"><stop offset="0.0425" stop-color="#a6d6f1"/><stop offset="0.0975" stop-color="#a6d5ef"/><stop offset="0.2825" stop-color="#9cc5dd"/><stop offset="0.4125" stop-color="#91b6cc"/><stop offset="0.5525" stop-color="#81a0b3"/><stop offset="0.6025" stop-color="#7996a7"/><stop offset="0.6275" stop-color="#748fa0"/><stop offset="0.6725" stop-color="#657c8b"/><stop offset="0.6975" stop-color="#5b6f7c"/><stop offset="0.7225" stop-color="#4d5d68"/><stop offset="0.7325" stop-color="#44525c"/><stop offset="0.7375" stop-color="#3c4851"/></linearGradient><linearGradient id="c138" gradientUnits="userSpaceOnUse" x1="0" y1="400" x2="0" y2="600"><stop offset="0.0425" stop-color="#a6d6f0"/><stop offset="0.0975" stop-color="#a6d5ef"/><stop offset="0.2825" stop-color="#9cc5dd"/><stop offset="0.4125" stop-color="#91b6cc"/><stop offset="0.5525" stop-color="#80a0b3"/><stop offset="0.6025" stop-color="#7995a7"/><stop offset="0.6225" stop-color="#7590a1"/><stop offset="0.6675" stop-color="#667d8c"/><stop offset="0.6925" stop-color="#5c707d"/><stop offset="0.7175" stop-color="#4e5f6a"/><stop offset="0.7275" stop-color="#46555f"/><stop offset="0.7325" stop-color="#404d56"/></linearGradient><linearGradient id="c140" gradientUnits="userSpaceOnUse" x1="0" y1="400" x2="0" y2="600"><stop offset="0.0475" stop-color="#a7d7f1"/><stop offset="0.1325" stop-color="#a4d2ec"/><stop offset="0.3025" stop-color="#9ac3da"/><stop offset="0.4225" stop-color="#90b4ca"/><stop offset="0.5525" stop-color="#809fb2"/><stop offset="0.6025" stop-color="#7895a6"/><stop offset="0.6325" stop-color="#718b9b"/><stop offset="0.6725" stop-color="#637987"/><stop offset="0.7075" stop-color="#536570"/><stop offset="0.7175" stop-color="#4c5c67"/><stop offset="0.7275" stop-color="#43515a"/></linearGradient><linearGradient id="c142" gradientUnits="userSpaceOnUse" x1="0" y1="400" x2="0" y2="600"><stop offset="0.0475" stop-color="#a7d6f1"/><stop offset="0.1325" stop-color="#a4d2ec"/><stop offset="0.3025" stop-color="#9ac3da"/><stop offset="0.4225" stop-color="#8fb4c9"/><stop offset="0.5525" stop-color="#809fb1"/><stop offset="0.6025" stop-color="#7894a5"/><stop offset="0.6325" stop-color="#708a9a"/><stop offset="0.6725" stop-color="#627886"/><stop offset="0.6925" stop-color="#596d79"/><stop offset="0.7125" stop-color="#4d5e69"/><stop offset="0.7225" stop-color="#45535d"/><stop offset="0.7275" stop-color="#3e4b53"/></linearGradient><linearGradient id="c144" gradientUnits="userSpaceOnUse" x1="0" y1="400" x2="0" y2="600"><stop offset="0.0475" stop-color="#a7d6f1"/><stop offset="0.1325" stop-color="#a4d2ec"/><stop offset="0.3025" stop-color="#9ac2da"/><stop offset="0.4225" stop-color="#8fb4c9"/><stop offset="0.5525" stop-color="#7f9eb1"/><stop offset="0.5975" stop-color="#7895a6"/><stop offset="0.6275" stop-color="#718b9b"/><stop offset="0.6675" stop-color="#637987"/><stop offset="0.7025" stop-color="#52646f"/><stop offset="0.7125" stop-color="#4b5b66"/><stop offset="0.7225" stop-color="#414f58"/></linearGradient><linearGradient id="c146" gradientUnits="userSpaceOnUse" x1="0" y1="400" x2="0" y2="600"><stop offset="0.0475" stop-color="#a6d6f0"/><stop offset="0.1325" stop-color="#a4d2ec"/><stop offset="0.3025" stop-color="#99c2d9"/><stop offset="0.4225" stop-color="#8fb3c9"/><stop offset="0.5525" stop-color="#7f9eb0"/><stop offset="0.5975" stop-color="#7894a5"/><stop offset="0.6275" stop-color="#708a9a"/><stop offset="0.6675" stop-color="#617785"/><stop offset="0.6875" stop-color="#596c79"/><stop offset="0.7075" stop-color="#4d5d68"/><stop offset="0.7175" stop-color="#44525b"/><stop offset="0.7225" stop-color="#3c4750"/></linearGradient><linearGradient id="c148" gradientUnits="userSpaceOnUse" x1="0" y1="400" x2="0" y2="600"><stop offset="0.0525" stop-color="#a6d6f1"/><stop offset="0.1775" stop-color="#a2cee7"/><stop offset="0.3375" stop-color="#96bed5"/><stop offset="0.4475" stop-color="#8cafc4"/><stop offset="0.5675" stop-color="#7c9aac"/><stop offset="0.6075" stop-color="#7591a1"/><stop offset="0.6525" stop-color="#667e8c"/><stop offset="0.6775" stop-color="#5c707d"/><stop offset="0.7025" stop-color="#4e5f6a"/><stop offset="0.7125" stop-color="#46555e"/><stop offset="0.7175" stop-color="#404d56"/></linearGradient><linearGradient id="c150" gradientUnits="userSpaceOnUse" x1="0" y1="400" x2="0" y2="600"><stop offset="0.0525" stop-color="#a6d6f0"/><stop offset="0.1325" stop-color="#a4d2eb"/><stop offset="0.3025" stop-color="#99c2d9"/><stop offset="0.4225" stop-color="#8eb3c8"/><stop offset="0.5475" stop-color="#7f9eb0"/><stop offset="0.5925" stop-color="#7794a5"/><stop offset="0.6225" stop-color="#708a99"/><stop offset="0.6625" stop-color="#617785"/><stop offset="0.6925" stop-color="#536570"/><stop offset="0.7025" stop-color="#4c5c67"/><stop offset="0.7125" stop-color="#43505a"/></linearGradient><linearGradient id="c152" gradientUnits="userSpaceOnUse" x1="0" y1="400" x2="0" y2="600"><stop offset="0.0525" stop-color="#a6d5f0"/><stop offset="0.1025" stop-color="#a5d4ee"/><stop offset="0.2825" stop-color="#9bc4db"/><stop offset="0.4075" stop-color="#90b4ca"/><stop offset="0.5375" stop-color="#809fb2"/><stop offset="0.5875" stop-color="#7894a6"/><stop offset="0.6175" stop-color="#708a9a"/><stop offset="0.6575" stop-color="#627886"/><stop offset="0.6775" stop-color="#596d79"/><stop offset="0.6975" stop-color="#4d5e69"/><stop offset="0.7075" stop-color="#45535d"/><stop offset="0.7125" stop-color="#3e4a53"/></linearGradient><linearGradient id="c154" gradientUnits="userSpaceOnUse" x1="0" y1="400" x2="0" y2="600"><stop offset="0.0575" stop-color="#a6d5f0"/><stop offset="0.1375" stop-color="#a4d1eb"/><stop offset="0.3025" stop-color="#99c1d8"/><stop offset="0.4225" stop-color="#8eb2c7"/><stop offset="0.5475" stop-color="#7e9daf"/><stop offset="0.5925" stop-color="#7692a3"/><stop offset="0.6425" stop-color="#677e8d"/><stop offset="0.6825" stop-color="#556773"/><stop offset="0.6975" stop-color="#4b5b66"/><stop offset="0.7075" stop-color="#414e57"/></linearGradient><linearGradient id="c156" gradientUnits="userSpaceOnUse" x1="0" y1="400" x2="0" y2="600"><stop offset="0.0575" stop-color="#a6d4ef"/><stop offset="0.1075" stop-color="#a5d3ed"/><stop offset="0.2825" stop-color="#9ac3db"/><stop offset="0.4025" stop-color="#90b4ca"/><stop offset="0.5325" stop-color="#809fb2"/><stop offset="0.5825" stop-color="#7894a5"/><stop offset="0.6125" stop-color="#708a9a"/><stop offset="0.6525" stop-color="#627885"/><stop offset="0.6725" stop-color="#596c79"/><stop offset="0.6925" stop-color="#4d5d68"/><stop offset="0.7025" stop-color="#44525b"/><stop offset="0.7075" stop-color="#3b464f"/></linearGradient><linearGradient id="c158" gradientUnits="userSpaceOnUse" x1="0" y1="400" x2="0" y2="600"><stop offset="0.0625" stop-color="#a6d4ef"/><stop offset="0.1425" stop-color="#a3d0ea"/><stop offset="0.3025" stop-color="#98c1d8"/><stop offset="0.4175" stop-color="#8eb2c7"/><stop offset="0.5425" stop-color="#7e9daf"/><stop offset="0.5875" stop-color="#7692a3"/><stop offset="0.6375" stop-color="#667e8c"/><stop offset="0.6625" stop-color="#5c707d"/><stop offset="0.6875" stop-color="#4e5f6a"/><stop offset="0.6975" stop-color="#46545e"/><stop offset="0.7025" stop-color="#3f4c55"/></linearGradient><linearGradient id="c160" gradientUnits="userSpaceOnUse" x1="0" y1="400" x2="0" y2="600"><stop offset="0.0675" stop-color="#a5d4ee"/><stop offset="0.1475" stop-color="#a3d0e9"/><stop offset="0.3075" stop-color="#98c0d7"/><stop offset="0.4175" stop-color="#8eb2c7"/><stop offset="0.5375" stop-color="#7e9daf"/><stop offset="0.5825" stop-color="#7793a4"/><stop offset="0.6125" stop-color="#6e8897"/><stop offset="0.6475" stop-color="#617785"/><stop offset="0.6775" stop-color="#536570"/><stop offset="0.6875" stop-color="#4c5c67"/><stop offset="0.6975" stop-color="#425059"/></linearGradient><linearGradient id="c162" gradientUnits="userSpaceOnUse" x1="0" y1="400" x2="0" y2="600"><stop offset="0.0725" stop-color="#a5d4ee"/><stop offset="0.1525" stop-color="#a2cfe8"/><stop offset="0.3125" stop-color="#97bfd6"/><stop offset="0.4225" stop-color="#8db1c5"/><stop offset="0.5425" stop-color="#7d9bae"/><stop offset="0.5825" stop-color="#7692a3"/><stop offset="0.6275" stop-color="#68808f"/><stop offset="0.6675" stop-color="#576a76"/><stop offset="0.6825" stop-color="#4d5e69"/><stop offset="0.6925" stop-color="#45535c"/></linearGradient><linearGradient id="c164" gradientUnits="userSpaceOnUse" x1="0" y1="400" x2="0" y2="600"><stop offset="0.0725" stop-color="#a5d3ec"/><stop offset="0.1025" stop-color="#a5d3ec"/><stop offset="0.2725" stop-color="#9ac3db"/><stop offset="0.3925" stop-color="#90b5ca"/><stop offset="0.5225" stop-color="#809fb2"/><stop offset="0.5675" stop-color="#7895a6"/><stop offset="0.5975" stop-color="#718c9c"/><stop offset="0.6375" stop-color="#637987"/><stop offset="0.6575" stop-color="#5a6e7b"/><stop offset="0.6775" stop-color="#4f606b"/><stop offset="0.6875" stop-color="#47555f"/><stop offset="0.6925" stop-color="#3f4c55"/></linearGradient><linearGradient id="c166" gradientUnits="userSpaceOnUse" x1="0" y1="400" x2="0" y2="600"><stop offset="0.0775" stop-color="#a4d2ec"/><stop offset="0.1275" stop-color="#a3d1ea"/><stop offset="0.2875" stop-color="#99c1d9"/><stop offset="0.4025" stop-color="#8eb3c8"/><stop offset="0.5275" stop-color="#7f9db0"/><stop offset="0.5725" stop-color="#7793a4"/><stop offset="0.6025" stop-color="#6f8898"/><stop offset="0.6375" stop-color="#627886"/><stop offset="0.6675" stop-color="#536571"/><stop offset="0.6775" stop-color="#4d5d68"/><stop offset="0.6825" stop-color="#485862"/><stop offset="0.6875" stop-color="#424f58"/></linearGradient><linearGradient id="c168" gradientUnits="userSpaceOnUse" x1="0" y1="400" x2="0" y2="600"><stop offset="0.0825" stop-color="#a4d2eb"/><stop offset="0.1325" stop-color="#a3d0ea"/><stop offset="0.2925" stop-color="#98c1d8"/><stop offset="0.4025" stop-color="#8eb2c8"/><stop offset="0.5225" stop-color="#7f9eb0"/><stop offset="0.5675" stop-color="#7794a5"/><stop offset="0.5975" stop-color="#6f8999"/><stop offset="0.6325" stop-color="#637987"/><stop offset="0.6625" stop-color="#546773"/><stop offset="0.6725" stop-color="#4e5f6a"/><stop offset="0.6775" stop-color="#4a5964"/><stop offset="0.6825" stop-color="#43515a"/></linearGradient><linearGradient id="c170" gradientUnits="userSpaceOnUse" x1="0" y1="400" x2="0" y2="600"><stop offset="0.0925" stop-color="#a4d2eb"/><stop offset="0.1625" stop-color="#a1cee7"/><stop offset="0.3125" stop-color="#97bed5"/><stop offset="0.4725" stop-color="#86a7ba"/><stop offset="0.5575" stop-color="#7996a7"/><stop offset="0.5875" stop-color="#728c9c"/><stop offset="0.6225" stop-color="#657d8b"/><stop offset="0.6525" stop-color="#586c78"/><stop offset="0.6625" stop-color="#536470"/><stop offset="0.6725" stop-color="#4b5b65"/></linearGradient><linearGradient id="c172" gradientUnits="userSpaceOnUse" x1="0" y1="400" x2="0" y2="600"><stop offset="0.0975" stop-color="#a4d1ea"/><stop offset="0.1675" stop-color="#a1cde6"/><stop offset="0.3125" stop-color="#96bed4"/><stop offset="0.4675" stop-color="#86a7bb"/><stop offset="0.5525" stop-color="#7996a8"/><stop offset="0.5825" stop-color="#728d9d"/><stop offset="0.6175" stop-color="#667e8c"/><stop offset="0.6475" stop-color="#596d79"/><stop offset="0.6575" stop-color="#546671"/><stop offset="0.6675" stop-color="#4c5c66"/></linearGradient><linearGradient id="c174" gradientUnits="userSpaceOnUse" x1="0" y1="400" x2="0" y2="600"><stop offset="0.1025" stop-color="#a3d0e9"/><stop offset="0.1725" stop-color="#a0cce5"/><stop offset="0.3125" stop-color="#96bdd4"/><stop offset="0.4625" stop-color="#86a8bb"/><stop offset="0.5475" stop-color="#7a97a8"/><stop offset="0.5775" stop-color="#738e9e"/><stop offset="0.6125" stop-color="#677f8d"/><stop offset="0.6425" stop-color="#5a6e7b"/><stop offset="0.6525" stop-color="#546772"/><stop offset="0.6625" stop-color="#4c5c67"/></linearGradient><linearGradient id="c176" gradientUnits="userSpaceOnUse" x1="0" y1="400" x2="0" y2="600"><stop offset="0.1075" stop-color="#a2cfe8"/><stop offset="0.1525" stop-color="#a1cde6"/><stop offset="0.2975" stop-color="#97bfd6"/><stop offset="0.4575" stop-color="#87a8bc"/><stop offset="0.5425" stop-color="#7a97a9"/><stop offset="0.5725" stop-color="#748f9f"/><stop offset="0.6075" stop-color="#68808e"/><stop offset="0.6375" stop-color="#5b6f7c"/><stop offset="0.6475" stop-color="#556773"/><stop offset="0.6525" stop-color="#51626e"/><stop offset="0.6575" stop-color="#4b5b65"/></linearGradient><linearGradient id="c178" gradientUnits="userSpaceOnUse" x1="0" y1="400" x2="0" y2="600"><stop offset="0.1175" stop-color="#a2cee7"/><stop offset="0.1825" stop-color="#9fcbe3"/><stop offset="0.3175" stop-color="#95bcd3"/><stop offset="0.4625" stop-color="#86a7ba"/><stop offset="0.5425" stop-color="#7997a8"/><stop offset="0.5725" stop-color="#738e9e"/><stop offset="0.6225" stop-color="#607683"/><stop offset="0.6375" stop-color="#586c78"/><stop offset="0.6475" stop-color="#51626d"/></linearGradient><linearGradient id="c180" gradientUnits="userSpaceOnUse" x1="0" y1="400" x2="0" y2="600"><stop offset="0.1275" stop-color="#a1cde6"/><stop offset="0.2275" stop-color="#9cc6de"/><stop offset="0.3475" stop-color="#92b8ce"/><stop offset="0.4725" stop-color="#84a5b8"/><stop offset="0.5425" stop-color="#7996a7"/><stop offset="0.5675" stop-color="#738f9f"/><stop offset="0.6125" stop-color="#637987"/><stop offset="0.6275" stop-color="#5b707d"/><stop offset="0.6375" stop-color="#556773"/></linearGradient><linearGradient id="c182" gradientUnits="userSpaceOnUse" x1="0" y1="400" x2="0" y2="600"><stop offset="0.1325" stop-color="#a0cce4"/><stop offset="0.1725" stop-color="#9fcbe3"/><stop offset="0.3025" stop-color="#96bdd4"/><stop offset="0.4475" stop-color="#87a9bc"/><stop offset="0.5275" stop-color="#7b99aa"/><stop offset="0.5575" stop-color="#7591a2"/><stop offset="0.5875" stop-color="#6b8494"/><stop offset="0.6175" stop-color="#5e7481"/><stop offset="0.6275" stop-color="#586b78"/><stop offset="0.6325" stop-color="#536570"/></linearGradient><linearGradient id="c184" gradientUnits="userSpaceOnUse" x1="0" y1="400" x2="0" y2="600"><stop offset="0.1425" stop-color="#9fcbe3"/><stop offset="0.2025" stop-color="#9dc8e0"/><stop offset="0.3225" stop-color="#94bbd1"/><stop offset="0.4525" stop-color="#86a7bb"/><stop offset="0.5225" stop-color="#7b99ab"/><stop offset="0.5625" stop-color="#738e9e"/><stop offset="0.6025" stop-color="#637a88"/><stop offset="0.6125" stop-color="#5e7381"/><stop offset="0.6225" stop-color="#566975"/></linearGradient><linearGradient id="c186" gradientUnits="userSpaceOnUse" x1="0" y1="400" x2="0" y2="600"><stop offset="0.1525" stop-color="#9ec9e2"/><stop offset="0.2075" stop-color="#9dc7df"/><stop offset="0.3275" stop-color="#93bad0"/><stop offset="0.4525" stop-color="#85a7ba"/><stop offset="0.5225" stop-color="#7b98aa"/><stop offset="0.5475" stop-color="#7692a3"/><stop offset="0.5875" stop-color="#68808e"/><stop offset="0.6025" stop-color="#607684"/><stop offset="0.6125" stop-color="#586c78"/></linearGradient><linearGradient id="c188" gradientUnits="userSpaceOnUse" x1="0" y1="400" x2="0" y2="600"><stop offset="0.1675" stop-color="#9ec8e0"/><stop offset="0.2475" stop-color="#9ac2da"/><stop offset="0.3975" stop-color="#8cafc4"/><stop offset="0.4825" stop-color="#81a0b3"/><stop offset="0.5325" stop-color="#7895a6"/><stop offset="0.5575" stop-color="#728c9c"/><stop offset="0.5825" stop-color="#687f8e"/><stop offset="0.5975" stop-color="#5f7582"/></linearGradient><linearGradient id="c190" gradientUnits="userSpaceOnUse" x1="0" y1="400" x2="0" y2="600"><stop offset="0.1775" stop-color="#9cc6de"/><stop offset="0.2275" stop-color="#9bc4db"/><stop offset="0.3325" stop-color="#92b8ce"/><stop offset="0.4425" stop-color="#86a7bb"/><stop offset="0.5025" stop-color="#7d9bad"/><stop offset="0.5375" stop-color="#7692a3"/><stop offset="0.5675" stop-color="#6c8494"/><stop offset="0.5775" stop-color="#677e8d"/><stop offset="0.5875" stop-color="#607684"/></linearGradient><linearGradient id="c192" gradientUnits="userSpaceOnUse" x1="0" y1="400" x2="0" y2="600"><stop offset="0.1925" stop-color="#9bc5dc"/><stop offset="0.2625" stop-color="#98c0d6"/><stop offset="0.3975" stop-color="#8baec2"/><stop offset="0.4725" stop-color="#81a1b3"/><stop offset="0.5375" stop-color="#7590a1"/><stop offset="0.5575" stop-color="#6d8696"/><stop offset="0.5725" stop-color="#657c8a"/></linearGradient><linearGradient id="c194" gradientUnits="userSpaceOnUse" x1="0" y1="400" x2="0" y2="600"><stop offset="0.2075" stop-color="#9ac2da"/><stop offset="0.2725" stop-color="#96bed4"/><stop offset="0.3975" stop-color="#8aadc2"/><stop offset="0.4675" stop-color="#81a1b3"/><stop offset="0.5275" stop-color="#7692a3"/><stop offset="0.5475" stop-color="#6e8897"/><stop offset="0.5575" stop-color="#68808f"/></linearGradient><linearGradient id="c196" gradientUnits="userSpaceOnUse" x1="0" y1="400" x2="0" y2="600"><stop offset="0.2225" stop-color="#98c0d7"/><stop offset="0.2625" stop-color="#96bed4"/><stop offset="0.3825" stop-color="#8bafc3"/><stop offset="0.4525" stop-color="#82a2b5"/><stop offset="0.5125" stop-color="#7894a5"/><stop offset="0.5225" stop-color="#7591a2"/><stop offset="0.5325" stop-color="#718b9b"/><stop offset="0.5425" stop-color="#6a8392"/></linearGradient><linearGradient id="c198" gradientUnits="userSpaceOnUse" x1="0" y1="400" x2="0" y2="600"><stop offset="0.2425" stop-color="#95bdd3"/><stop offset="0.2725" stop-color="#95bcd2"/><stop offset="0.3825" stop-color="#8baec2"/><stop offset="0.4725" stop-color="#7e9daf"/><stop offset="0.5025" stop-color="#7894a6"/><stop offset="0.5125" stop-color="#7591a2"/><stop offset="0.5225" stop-color="#6f8999"/></linearGradient><linearGradient id="c200" gradientUnits="userSpaceOnUse" x1="0" y1="400" x2="0" y2="600"><stop offset="0.2675" stop-color="#93b9cf"/><stop offset="0.3075" stop-color="#91b7cc"/><stop offset="0.3875" stop-color="#89acc0"/><stop offset="0.4575" stop-color="#7f9eb1"/><stop offset="0.4825" stop-color="#7a97a9"/><stop offset="0.4975" stop-color="#7591a2"/></linearGradient><linearGradient id="c202" gradientUnits="userSpaceOnUse" x1="0" y1="400" x2="0" y2="600"><stop offset="0.3025" stop-color="#90b4ca"/><stop offset="0.3725" stop-color="#8aacc1"/><stop offset="0.4325" stop-color="#81a1b4"/><stop offset="0.4625" stop-color="#7b99ab"/></linearGradient><linearGradient id="c204" gradientUnits="userSpaceOnUse" x1="0" y1="400" x2="0" y2="600"><stop offset="0.3725" stop-color="#87a8bc"/><stop offset="0.3925" stop-color="#84a5b8"/></linearGradient></defs><rect x="2" y="61" width="28" height="844" fill="url(#b0)"/>
<rect x="30" y="61" width="28" height="844" fill="url(#b1)"/>
<rect x="58" y="61" width="28" height="844" fill="url(#b2)"/>
<rect x="86" y="61" width="28" height="844" fill="url(#b3)"/>
<rect x="114" y="61" width="28" height="844" fill="url(#b4)"/>
<rect x="142" y="61" width="28" height="844" fill="url(#b5)"/>
<rect x="170" y="61" width="28" height="844" fill="url(#b6)"/>
<rect x="198" y="61" width="28" height="844" fill="url(#b7)"/>
<rect x="226" y="61" width="28" height="844" fill="url(#b8)"/>
<rect x="254" y="61" width="28" height="844" fill="url(#b9)"/>
<rect x="282" y="61" width="28" height="844" fill="url(#b10)"/>
<rect x="310" y="61" width="28" height="844" fill="url(#b11)"/>
<rect x="338" y="61" width="28" height="844" fill="url(#b12)"/>
<rect x="366" y="61" width="28" height="844" fill="url(#b13)"/>
<rect x="394" y="61" width="28" height="844" fill="url(#b14)"/>
<rect x="422" y="61" width="28" height="844" fill="url(#b15)"/>
<rect x="450" y="61" width="28" height="844" fill="url(#b16)"/>
<rect x="478" y="61" width="28" height="844" fill="url(#b17)"/>
<rect x="506" y="61" width="28" height="844" fill="url(#b18)"/>
<rect x="534" y="61" width="28" height="844" fill="url(#b19)"/>
<rect x="562" y="61" width="28" height="844" fill="url(#b20)"/>
<rect x="590" y="61" width="28" height="844" fill="url(#b21)"/>
<rect x="618" y="61" width="28" height="844" fill="url(#b22)"/>
<rect x="646" y="61" width="28" height="844" fill="url(#b23)"/>
<rect x="674" y="61" width="28" height="844" fill="url(#b23)"/>
<rect x="702" y="61" width="28" height="844" fill="url(#b22)"/>
<rect x="730" y="61" width="28" height="844" fill="url(#b21)"/>
<rect x="758" y="61" width="28" height="844" fill="url(#b20)"/>
<rect x="786" y="61" width="28" height="844" fill="url(#b19)"/>
<rect x="814" y="61" width="28" height="844" fill="url(#b18)"/>
<rect x="842" y="61" width="28" height="844" fill="url(#b17)"/>
<rect x="870" y="61" width="28" height="844" fill="url(#b16)"/>
<rect x="898" y="61" width="28" height="844" fill="url(#b15)"/>
<rect x="926" y="61" width="28" height="844" fill="url(#b14)"/>
<rect x="954" y="61" width="28" height="844" fill="url(#b13)"/>
<rect x="982" y="61" width="28" height="844" fill="url(#b12)"/>
<rect x="1010" y="61" width="28" height="844" fill="url(#b11)"/>
<rect x="1038" y="61" width="28" height="844" fill="url(#b10)"/>
<rect x="1066" y="61" width="28" height="844" fill="url(#b9)"/>
<rect x="1094" y="61" width="28" height="844" fill="url(#b8)"/>
<rect x="1122" y="61" width="28" height="844" fill="url(#b7)"/>
<rect x="1150" y="61" width="28" height="844" fill="url(#b6)"/>
<rect x="1178" y="61" width="28" height="844" fill="url(#b5)"/>
<rect x="1206" y="61" width="28" height="844" fill="url(#b4)"/>
<rect x="1234" y="61" width="28" height="844" fill="url(#b3)"/>
<rect x="1262" y="61" width="28" height="844" fill="url(#b2)"/>
<rect x="1290" y="61" width="28" height="844" fill="url(#b1)"/>
<rect x="1318" y="61" width="28" height="844" fill="url(#b0)"/>
<rect x="1346" y="61" width="12" height="844" fill="url(#b24)"/>
<g shape-rendering="crispEdges">
<g clip-path="url(#capclip)">
<rect x="576" y="484" width="2" height="12" fill="url(#c4)"/>
<rect x="578" y="472" width="2" height="36" fill="url(#c6)"/>
<rect x="580" y="465" width="2" height="49" fill="url(#c8)"/>
<rect x="582" y="460" width="2" height="59" fill="url(#c10)"/>
<rect x="584" y="456" width="2" height="67" fill="url(#c12)"/>
<rect x="586" y="453" width="2" height="74" fill="url(#c14)"/>
<rect x="588" y="450" width="2" height="80" fill="url(#c16)"/>
<rect x="590" y="447" width="2" height="86" fill="url(#c18)"/>
<rect x="592" y="444" width="2" height="92" fill="url(#c20)"/>
<rect x="594" y="442" width="2" height="96" fill="url(#c22)"/>
<rect x="596" y="440" width="2" height="100" fill="url(#c24)"/>
<rect x="598" y="438" width="2" height="104" fill="url(#c26)"/>
<rect x="600" y="436" width="2" height="108" fill="url(#c28)"/>
<rect x="602" y="434" width="2" height="112" fill="url(#c30)"/>
<rect x="604" y="432" width="2" height="115" fill="url(#c32)"/>
<rect x="606" y="431" width="2" height="118" fill="url(#c34)"/>
<rect x="608" y="430" width="2" height="120" fill="url(#c36)"/>
<rect x="610" y="428" width="2" height="123" fill="url(#c38)"/>
<rect x="612" y="427" width="2" height="126" fill="url(#c40)"/>
<rect x="614" y="426" width="2" height="128" fill="url(#c42)"/>
<rect x="616" y="425" width="2" height="130" fill="url(#c44)"/>
<rect x="618" y="424" width="2" height="132" fill="url(#c46)"/>
<rect x="620" y="423" width="2" height="134" fill="url(#c48)"/>
<rect x="622" y="422" width="2" height="135" fill="url(#c50)"/>
<rect x="624" y="422" width="2" height="136" fill="url(#c52)"/>
<rect x="626" y="421" width="2" height="138" fill="url(#c54)"/>
<rect x="628" y="420" width="2" height="139" fill="url(#c56)"/>
<rect x="630" y="420" width="2" height="140" fill="url(#c58)"/>
<rect x="632" y="419" width="2" height="141" fill="url(#c60)"/>
<rect x="634" y="419" width="2" height="142" fill="url(#c62)"/>
<rect x="636" y="418" width="2" height="143" fill="url(#c64)"/>
<rect x="638" y="418" width="2" height="144" fill="url(#c66)"/>
<rect x="640" y="418" width="2" height="144" fill="url(#c68)"/>
<rect x="642" y="418" width="2" height="144" fill="url(#c70)"/>
<rect x="644" y="417" width="2" height="145" fill="url(#c72)"/>
<rect x="646" y="417" width="2" height="145" fill="url(#c74)"/>
<rect x="648" y="417" width="2" height="145" fill="url(#c76)"/>
<rect x="650" y="416" width="2" height="146" fill="url(#c78)"/>
<rect x="652" y="416" width="2" height="146" fill="url(#c80)"/>
<rect x="654" y="416" width="2" height="146" fill="url(#c82)"/>
<rect x="656" y="415" width="2" height="147" fill="url(#c84)"/>
<rect x="658" y="415" width="2" height="147" fill="url(#c86)"/>
<rect x="660" y="415" width="2" height="147" fill="url(#c88)"/>
<rect x="662" y="414" width="2" height="147" fill="url(#c90)"/>
<rect x="664" y="414" width="2" height="147" fill="url(#c92)"/>
<rect x="666" y="414" width="2" height="146" fill="url(#c94)"/>
<rect x="668" y="414" width="2" height="146" fill="url(#c96)"/>
<rect x="670" y="413" width="2" height="146" fill="url(#c98)"/>
<rect x="672" y="413" width="2" height="146" fill="url(#c100)"/>
<rect x="674" y="413" width="2" height="145" fill="url(#c102)"/>
<rect x="676" y="412" width="2" height="145" fill="url(#c104)"/>
<rect x="678" y="412" width="2" height="145" fill="url(#c106)"/>
<rect x="680" y="412" width="2" height="144" fill="url(#c108)"/>
<rect x="682" y="411" width="2" height="145" fill="url(#c110)"/>
<rect x="684" y="411" width="2" height="144" fill="url(#c112)"/>
<rect x="686" y="411" width="2" height="143" fill="url(#c114)"/>
<rect x="688" y="411" width="2" height="143" fill="url(#c116)"/>
<rect x="690" y="410" width="2" height="143" fill="url(#c118)"/>
<rect x="692" y="410" width="2" height="143" fill="url(#c120)"/>
<rect x="694" y="410" width="2" height="142" fill="url(#c122)"/>
<rect x="696" y="409" width="2" height="142" fill="url(#c124)"/>
<rect x="698" y="409" width="2" height="142" fill="url(#c126)"/>
<rect x="700" y="409" width="2" height="141" fill="url(#c128)"/>
<rect x="702" y="409" width="2" height="141" fill="url(#c130)"/>
<rect x="704" y="408" width="2" height="141" fill="url(#c132)"/>
<rect x="706" y="408" width="2" height="140" fill="url(#c134)"/>
<rect x="708" y="408" width="2" height="140" fill="url(#c136)"/>
<rect x="710" y="408" width="2" height="139" fill="url(#c138)"/>
<rect x="712" y="409" width="2" height="137" fill="url(#c140)"/>
<rect x="714" y="409" width="2" height="137" fill="url(#c142)"/>
<rect x="716" y="409" width="2" height="136" fill="url(#c144)"/>
<rect x="718" y="409" width="2" height="136" fill="url(#c146)"/>
<rect x="720" y="410" width="2" height="134" fill="url(#c148)"/>
<rect x="722" y="410" width="2" height="133" fill="url(#c150)"/>
<rect x="724" y="410" width="2" height="133" fill="url(#c152)"/>
<rect x="726" y="411" width="2" height="131" fill="url(#c154)"/>
<rect x="728" y="411" width="2" height="131" fill="url(#c156)"/>
<rect x="730" y="412" width="2" height="129" fill="url(#c158)"/>
<rect x="732" y="413" width="2" height="127" fill="url(#c160)"/>
<rect x="734" y="414" width="2" height="125" fill="url(#c162)"/>
<rect x="736" y="414" width="2" height="125" fill="url(#c164)"/>
<rect x="738" y="415" width="2" height="123" fill="url(#c166)"/>
<rect x="740" y="416" width="2" height="121" fill="url(#c168)"/>
<rect x="742" y="418" width="2" height="117" fill="url(#c170)"/>
<rect x="744" y="419" width="2" height="115" fill="url(#c172)"/>
<rect x="746" y="420" width="2" height="113" fill="url(#c174)"/>
<rect x="748" y="421" width="2" height="111" fill="url(#c176)"/>
<rect x="750" y="423" width="2" height="107" fill="url(#c178)"/>
<rect x="752" y="425" width="2" height="103" fill="url(#c180)"/>
<rect x="754" y="426" width="2" height="101" fill="url(#c182)"/>
<rect x="756" y="428" width="2" height="97" fill="url(#c184)"/>
<rect x="758" y="430" width="2" height="93" fill="url(#c186)"/>
<rect x="760" y="433" width="2" height="87" fill="url(#c188)"/>
<rect x="762" y="435" width="2" height="83" fill="url(#c190)"/>
<rect x="764" y="438" width="2" height="77" fill="url(#c192)"/>
<rect x="766" y="441" width="2" height="71" fill="url(#c194)"/>
<rect x="768" y="444" width="2" height="65" fill="url(#c196)"/>
<rect x="770" y="448" width="2" height="57" fill="url(#c198)"/>
<rect x="772" y="453" width="2" height="47" fill="url(#c200)"/>
<rect x="774" y="460" width="2" height="33" fill="url(#c202)"/>
<rect x="776" y="474" width="2" height="5" fill="url(#c204)"/>
</g>
<path fill="#616161" fill-opacity="0.017" d="M3 327.86L465.3 310.73L465.3 311.73L3 328.86ZM3 329.18L513.76 309.83L513.76 310.83L3 330.18ZM3 330.56L550.38 309.36L550.38 310.36L3 331.56ZM3 332L585.31 308.93L585.31 309.93L3 333ZM3 333.51L614.08 308.73L614.08 309.73L3 334.51ZM417.69 317.87L640.98 308.6L640.98 309.6L417.69 318.87ZM3 335.09L50.85 333.1L50.85 334.1L3 336.09ZM486.18 316.19L665.88 308.54L665.88 309.54L486.18 317.19ZM578.04 314.59L713.81 308.51L713.81 309.51L578.04 315.59ZM613.11 314.22L736.73 308.54L736.73 309.54L613.11 315.22ZM642.07 314.12L753.91 308.84L753.91 309.84L642.07 315.12ZM669.17 314.11L776.87 308.88L776.87 309.88L669.17 315.11ZM696.24 314.1L795.84 309.13L795.84 310.13L696.24 315.1ZM721.42 314.18L813.22 309.46L813.22 310.46L721.42 315.18ZM745.9 314.31L833.77 309.65L833.77 310.65L745.9 315.31ZM791.51 314.78L871.15 310.28L871.15 311.28L791.51 315.78ZM815.4 314.97L891.06 310.56L891.06 311.56L815.4 315.97ZM835.31 315.42L906.99 311.09L906.99 312.09L835.31 316.42ZM855.22 315.9L926.91 311.41L926.91 312.41L855.22 316.9ZM879.12 316.16L946.82 311.76L946.82 312.76L879.12 317.16ZM899.03 316.7L962.75 312.4L962.75 313.4L899.03 317.7ZM918.94 317.3L982.66 312.82L982.66 313.82L918.94 318.3ZM962.75 318.33L1018.5 314.07L1018.5 315.07L962.75 319.33ZM982.66 319.08L1038.41 314.62L1038.41 315.62L982.66 320.08ZM1004.3 319.76L1059.1 315.16L1059.1 316.16L1004.3 320.76ZM1025.47 320.54L1078.24 315.89L1078.24 316.89L1025.47 321.54ZM1047.37 321.35L1099.14 316.54L1099.14 317.54L1047.37 322.35ZM1070.48 322.12L1119.23 317.34L1119.23 318.34L1070.48 323.12ZM1093.56 323L1140.28 318.13L1140.28 319.13L1093.56 324ZM1140.6 325L1184.28 319.83L1184.28 320.83L1140.6 326ZM1164.56 326.16L1207.22 320.74L1207.22 321.74L1164.56 327.16ZM1190.6 327.23L1230.22 321.8L1230.22 322.8L1190.6 328.23ZM1216.56 328.49L1255.13 322.74L1255.13 323.74L1216.56 329.49ZM1243.51 329.83L1280.02 323.88L1280.02 324.88L1243.51 330.83ZM1271.39 331.28L1305.83 325.08L1305.83 326.08L1271.39 332.28ZM1301.15 332.68L1332.51 326.38L1332.51 327.38L1301.15 333.68Z"/>
<path fill="#616161" fill-opacity="0.034" d="M50.85 333.1L417.69 317.87L417.69 318.87L50.85 334.1ZM3 336.74L486.18 316.19L486.18 317.19L3 337.74ZM386.36 323.16L578.04 314.59L578.04 315.59L386.36 324.16ZM3 340.32L106.83 335.67L106.83 336.67L3 341.32ZM473.54 320.63L613.11 314.22L613.11 315.22L473.54 321.63ZM530.24 319.4L642.07 314.12L642.07 315.12L530.24 320.4ZM573.43 318.76L669.17 314.11L669.17 315.11L573.43 319.76ZM612.57 318.28L696.24 314.1L696.24 315.1L612.57 319.28ZM645.59 318.08L721.42 314.18L721.42 315.18L645.59 319.08ZM678 317.91L745.9 314.31L745.9 315.31L678 318.91ZM731.77 318.15L791.51 314.78L791.51 315.78L731.77 319.15ZM755.66 318.46L815.4 314.97L815.4 315.97L755.66 319.46ZM783.54 318.55L835.31 315.42L835.31 316.42L783.54 319.55ZM807.44 318.89L855.22 315.9L855.22 316.9L807.44 319.89ZM831.33 319.26L879.12 316.16L879.12 317.16L831.33 320.26ZM851.24 319.93L899.03 316.7L899.03 317.7L851.24 320.93ZM875.14 320.37L918.94 317.3L918.94 318.3L875.14 321.37ZM922.92 321.37L962.75 318.33L962.75 319.33L922.92 322.37ZM942.84 322.26L982.66 319.08L982.66 320.08L942.84 323.26ZM966.44 322.93L1004.3 319.76L1004.3 320.76L966.44 323.93ZM989.63 323.7L1025.47 320.54L1025.47 321.54L989.63 324.7ZM1012.53 324.58L1047.37 321.35L1047.37 322.35L1012.53 325.58ZM1036.66 325.44L1070.48 322.12L1070.48 323.12L1036.66 326.44ZM1060.75 326.41L1093.56 323L1093.56 324L1060.75 327.41ZM1110.82 328.52L1140.6 325L1140.6 326L1110.82 329.52ZM1135.8 329.82L1164.56 326.16L1164.56 327.16L1135.8 330.82ZM1162.86 331.03L1190.6 327.23L1190.6 328.23L1162.86 332.03ZM1190.84 332.32L1216.56 328.49L1216.56 329.49L1190.84 333.32ZM1218.84 333.85L1243.51 329.83L1243.51 330.83L1218.84 334.85ZM1248.76 335.35L1271.39 331.28L1271.39 332.28L1248.76 336.35ZM1279.6 337.02L1301.15 332.68L1301.15 333.68L1279.6 338.02ZM1345.39 340.79L1357 337.75L1357 338.75L1345.39 341.79Z"/>
<path fill="#616161" fill-opacity="0.051" d="M106.83 335.67L386.36 323.16L386.36 324.16L106.83 336.67ZM3 342.25L473.54 320.63L473.54 321.63L3 343.25ZM290.58 330.71L530.24 319.4L530.24 320.4L290.58 331.71ZM3 344.28L226.68 333.73L226.68 334.73L3 345.28ZM449.77 324.76L573.43 318.76L573.43 319.76L449.77 325.76ZM516.95 323.05L612.57 318.28L612.57 319.28L516.95 324.05ZM565.76 322.18L645.59 318.08L645.59 319.08L565.76 323.18ZM606.11 321.72L678 317.91L678 318.91L606.11 322.72ZM676.02 321.3L731.77 318.15L731.77 319.15L676.02 322.3ZM707.88 321.25L755.66 318.46L755.66 319.46L707.88 322.25ZM735.75 321.43L783.54 318.55L783.54 319.55L735.75 322.43ZM763.63 321.63L807.44 318.89L807.44 319.89L763.63 322.63ZM787.52 322.11L831.33 319.26L831.33 320.26L787.52 323.11ZM811.42 322.62L851.24 319.93L851.24 320.93L811.42 323.62ZM839.29 322.89L875.14 320.37L875.14 321.37L839.29 323.89ZM887.08 324.11L922.92 321.37L922.92 322.37L887.08 325.11ZM910.98 324.81L942.84 322.26L942.84 323.26L910.98 325.81ZM935.56 325.52L966.44 322.93L966.44 323.93L935.56 326.52ZM959.76 326.33L989.63 323.7L989.63 324.7L959.76 327.33ZM984.65 327.17L1012.53 324.58L1012.53 325.58L984.65 328.17ZM1008.8 328.18L1036.66 325.44L1036.66 326.44L1008.8 329.18ZM1033.91 329.2L1060.75 326.41L1060.75 327.41L1033.91 330.2ZM1086 331.46L1110.82 328.52L1110.82 329.52L1086 332.46ZM1112.98 332.72L1135.8 329.82L1135.8 330.82L1112.98 333.72ZM1140.08 334.16L1162.86 331.03L1162.86 332.03L1140.08 335.16ZM1169.08 335.56L1190.84 332.32L1190.84 333.32L1169.08 336.56ZM1199.1 337.07L1218.84 333.85L1218.84 334.85L1199.1 338.07ZM1229.08 338.89L1248.76 335.35L1248.76 336.35L1229.08 339.89ZM1261.97 340.56L1279.6 337.02L1279.6 338.02L1261.97 341.56ZM1329.92 344.84L1345.39 340.79L1345.39 341.79L1329.92 345.84Z"/>
<path fill="#616161" fill-opacity="0.067" d="M226.68 333.73L290.58 330.71L290.58 331.71L226.68 334.73ZM3 346.43L449.77 324.76L449.77 325.76L3 347.43ZM329.7 332.4L516.95 323.05L516.95 324.05L329.7 333.4ZM3 348.71L186.27 339.56L186.27 340.56L3 349.71ZM461.99 327.52L565.76 322.18L565.76 323.18L461.99 328.52ZM526.23 325.95L606.11 321.72L606.11 322.72L526.23 326.95ZM620.26 324.44L676.02 321.3L676.02 322.3L620.26 325.44ZM656.11 324.27L707.88 321.25L707.88 322.25L656.11 325.27ZM687.96 324.32L735.75 321.43L735.75 322.43L687.96 325.32ZM719.82 324.37L763.63 321.63L763.63 322.63L719.82 325.37ZM747.7 324.69L787.52 322.11L787.52 323.11L747.7 325.69ZM775.58 325.03L811.42 322.62L811.42 323.62L775.58 326.03ZM803.45 325.41L839.29 322.89L839.29 323.89L803.45 326.41ZM855.22 326.55L887.08 324.11L887.08 325.11L855.22 327.55ZM883.1 327.04L910.98 324.81L910.98 325.81L883.1 328.04ZM907.66 327.86L935.56 325.52L935.56 326.52L907.66 328.86ZM933.88 328.62L959.76 326.33L959.76 327.33L933.88 329.62ZM958.76 329.58L984.65 327.17L984.65 328.17L958.76 330.58ZM984.92 330.52L1008.8 328.18L1008.8 329.18L984.92 331.52ZM1011.04 331.58L1033.91 329.2L1033.91 330.2L1011.04 332.58ZM1065.16 333.93L1086 331.46L1086 332.46L1065.16 334.93ZM1092.15 335.36L1112.98 332.72L1112.98 333.72L1092.15 336.36ZM1121.26 336.74L1140.08 334.16L1140.08 335.16L1121.26 337.74ZM1150.29 338.36L1169.08 335.56L1169.08 336.56L1150.29 339.36ZM1181.34 339.96L1199.1 337.07L1199.1 338.07L1181.34 340.96ZM1213.33 341.73L1229.08 338.89L1229.08 339.89L1213.33 342.73ZM1246.29 343.71L1261.97 340.56L1261.97 341.56L1246.29 344.71ZM1317.35 348.13L1329.92 344.84L1329.92 345.84L1317.35 349.13ZM1356.05 350.55L1357 350.26L1357 351.26L1356.05 351.55Z"/>
<path fill="#616161" fill-opacity="0.084" d="M186.27 339.56L329.7 332.4L329.7 333.4L186.27 340.56ZM3 351.12L461.99 327.52L461.99 328.52L3 352.12ZM406.4 332.3L526.23 325.95L526.23 326.95L406.4 333.3ZM3 353.67L78.89 349.65L78.89 350.65L3 354.67ZM556.55 328.04L620.26 324.44L620.26 325.44L556.55 329.04ZM604.34 327.29L656.11 324.27L656.11 325.27L604.34 328.29ZM644.16 326.96L687.96 324.32L687.96 325.32L644.16 327.96ZM680 326.87L719.82 324.37L719.82 325.37L680 327.87ZM711.86 327.02L747.7 324.69L747.7 325.69L711.86 328.02ZM743.72 327.18L775.58 325.03L775.58 326.03L743.72 328.18ZM771.59 327.64L803.45 325.41L803.45 326.41L771.59 328.64ZM827.35 328.68L855.22 326.55L855.22 327.55L827.35 329.68ZM855.22 329.27L883.1 327.04L883.1 328.04L855.22 330.27ZM882.75 329.95L907.66 327.86L907.66 328.86L882.75 330.95ZM909.98 330.72L933.88 328.62L933.88 329.62L909.98 331.72ZM935.87 331.7L958.76 329.58L958.76 330.58L935.87 332.7ZM963.04 332.67L984.92 330.52L984.92 331.52L963.04 333.67ZM990.17 333.76L1011.04 331.58L1011.04 332.58L990.17 334.76ZM1045.3 336.28L1065.16 333.93L1065.16 334.93L1045.3 337.28ZM1074.3 337.63L1092.15 335.36L1092.15 336.36L1074.3 338.63ZM1103.43 339.18L1121.26 336.74L1121.26 337.74L1103.43 340.18ZM1134.47 340.72L1150.29 338.36L1150.29 339.36L1134.47 341.72ZM1165.55 342.54L1181.34 339.96L1181.34 340.96L1165.55 343.54ZM1198.57 344.39L1213.33 341.73L1213.33 342.73L1198.57 345.39ZM1232.57 346.47L1246.29 343.71L1246.29 344.71L1232.57 347.47ZM1305.74 351.17L1317.35 348.13L1317.35 349.13L1305.74 352.17ZM1344.59 354.09L1356.05 350.55L1356.05 351.55L1344.59 355.09Z"/>
<path fill="#616161" fill-opacity="0.099" d="M78.89 349.65L406.4 332.3L406.4 333.3L78.89 350.65ZM472.92 332.76L556.55 328.04L556.55 329.04L472.92 333.76ZM540.62 331.01L604.34 327.29L604.34 328.29L540.62 332.01ZM592.39 330.09L644.16 326.96L644.16 327.96L592.39 331.09ZM636.19 329.61L680 326.87L680 327.87L636.19 330.61ZM676.02 329.35L711.86 327.02L711.86 328.02L676.02 330.35ZM707.88 329.6L743.72 327.18L743.72 328.18L707.88 330.6ZM739.74 329.88L771.59 327.64L771.59 328.64L739.74 330.88ZM803.45 330.51L827.35 328.68L827.35 329.68L803.45 331.51ZM831.33 331.18L855.22 329.27L855.22 330.27L831.33 332.18ZM858.84 331.95L882.75 329.95L882.75 330.95L858.84 332.95ZM887.08 332.74L909.98 330.72L909.98 331.72L887.08 333.74ZM914.96 333.65L935.87 331.7L935.87 332.7L914.96 334.65ZM943.14 334.62L963.04 332.67L963.04 333.67L943.14 335.62ZM971.28 335.72L990.17 333.76L990.17 334.76L971.28 336.72ZM1028.43 338.27L1045.3 336.28L1045.3 337.28L1028.43 339.27ZM1057.43 339.77L1074.3 337.63L1074.3 338.63L1057.43 340.77ZM1087.59 341.36L1103.43 339.18L1103.43 340.18L1087.59 342.36ZM1118.64 343.08L1134.47 340.72L1134.47 341.72L1118.64 344.08ZM1150.74 344.95L1165.55 342.54L1165.55 343.54L1150.74 345.95ZM1184.8 346.87L1198.57 344.39L1198.57 345.39L1184.8 347.87ZM1219.84 349.03L1232.57 346.47L1232.57 347.47L1219.84 350.03ZM1294.14 354.21L1305.74 351.17L1305.74 352.17L1294.14 355.21ZM1335.04 357.04L1344.59 354.09L1344.59 355.09L1335.04 358.04Z"/>
<path fill="#616161" fill-opacity="0.115" d="M3 359.29L472.92 332.76L472.92 333.76L3 360.29ZM460.97 335.65L540.62 331.01L540.62 332.01L460.97 336.65ZM536.64 333.46L592.39 330.09L592.39 331.09L536.64 334.46ZM588.41 332.6L636.19 329.61L636.19 330.61L588.41 333.6ZM636.19 331.93L676.02 329.35L676.02 330.35L636.19 332.93ZM676.02 331.75L707.88 329.6L707.88 330.6L676.02 332.75ZM711.86 331.84L739.74 329.88L739.74 330.88L711.86 332.84ZM775.58 332.64L803.45 330.51L803.45 331.51L775.58 333.64ZM807.44 333.09L831.33 331.18L831.33 332.18L807.44 334.09ZM836.92 333.79L858.84 331.95L858.84 332.95L836.92 334.79ZM866.17 334.58L887.08 332.74L887.08 333.74L866.17 335.58ZM895.05 335.49L914.96 333.65L914.96 334.65L895.05 336.49ZM924.24 336.48L943.14 334.62L943.14 335.62L924.24 337.48ZM953.38 337.59L971.28 335.72L971.28 336.72L953.38 338.59ZM1011.55 340.27L1028.43 338.27L1028.43 339.27L1011.55 341.27ZM1041.56 341.79L1057.43 339.77L1057.43 340.77L1041.56 342.79ZM1072.73 343.39L1087.59 341.36L1087.59 342.36L1072.73 344.39ZM1104.79 345.14L1118.64 343.08L1118.64 344.08L1104.79 346.14ZM1137.91 347.04L1150.74 344.95L1150.74 345.95L1137.91 348.04ZM1172.01 349.17L1184.8 346.87L1184.8 347.87L1172.01 350.17ZM1208.08 351.39L1219.84 349.03L1219.84 350.03L1208.08 352.39ZM1284.46 356.74L1294.14 354.21L1294.14 355.21L1284.46 357.74ZM1326.44 359.69L1335.04 357.04L1335.04 358.04L1326.44 360.69Z"/>
<path fill="#616161" fill-opacity="0.130" d="M3 362.38L460.97 335.65L460.97 336.65L3 363.38ZM460.97 338.03L536.64 333.46L536.64 334.46L460.97 339.03ZM536.64 335.84L588.41 332.6L588.41 333.6L536.64 336.84ZM592.39 334.78L636.19 331.93L636.19 332.93L592.39 335.78ZM640.18 334.17L676.02 331.75L676.02 332.75L640.18 335.17ZM680 334.07L711.86 331.84L711.86 332.84L680 335.07ZM751.68 334.46L775.58 332.64L775.58 333.64L751.68 335.46ZM783.54 335L807.44 333.09L807.44 334.09L783.54 336ZM815 335.63L836.92 333.79L836.92 334.79L815 336.63ZM845.27 336.43L866.17 334.58L866.17 335.58L845.27 337.43ZM876.13 337.25L895.05 335.49L895.05 336.49L876.13 338.25ZM905.34 338.33L924.24 336.48L924.24 337.48L905.34 339.33ZM935.49 339.45L953.38 337.59L953.38 338.59L935.49 340.45ZM996.66 342.03L1011.55 340.27L1011.55 341.27L996.66 343.03ZM1027.68 343.55L1041.56 341.79L1041.56 342.79L1027.68 344.55ZM1058.86 345.29L1072.73 343.39L1072.73 344.39L1058.86 346.29ZM1091.94 347.05L1104.79 345.14L1104.79 346.14L1091.94 348.05ZM1125.08 349.13L1137.91 347.04L1137.91 348.04L1125.08 350.13ZM1160.2 351.29L1172.01 349.17L1172.01 350.17L1160.2 352.29ZM1196.32 353.75L1208.08 351.39L1208.08 352.39L1196.32 354.75ZM1274.79 359.28L1284.46 356.74L1284.46 357.74L1274.79 360.28ZM1317.85 362.34L1326.44 359.69L1326.44 360.69L1317.85 363.34Z"/>
<path fill="#616161" fill-opacity="0.145" d="M3 365.69L460.97 338.03L460.97 339.03L3 366.69ZM468.94 340.08L536.64 335.84L536.64 336.84L468.94 341.08ZM544.6 337.88L592.39 334.78L592.39 335.78L544.6 338.88ZM600.35 336.86L640.18 334.17L640.18 335.17L600.35 337.86ZM648.14 336.31L680 334.07L680 335.07L648.14 337.31ZM723.81 336.59L751.68 334.46L751.68 335.46L723.81 337.59ZM759.65 336.92L783.54 335L783.54 336L759.65 337.92ZM793.08 337.47L815 335.63L815 336.63L793.08 338.47ZM825.36 338.18L845.27 336.43L845.27 337.43L825.36 339.18ZM857.21 339.01L876.13 337.25L876.13 338.25L857.21 340.01ZM888.42 339.99L905.34 338.33L905.34 339.33L888.42 340.99ZM919.58 341.1L935.49 339.45L935.49 340.45L919.58 342.1ZM981.77 343.79L996.66 342.03L996.66 343.03L981.77 344.79ZM1012.8 345.44L1027.68 343.55L1027.68 344.55L1012.8 346.44ZM1045.99 347.06L1058.86 345.29L1058.86 346.29L1045.99 348.06ZM1079.08 348.97L1091.94 347.05L1091.94 348.05L1079.08 349.97ZM1113.24 351.06L1125.08 349.13L1125.08 350.13L1113.24 352.06ZM1148.39 353.42L1160.2 351.29L1160.2 352.29L1148.39 354.42ZM1185.55 355.92L1196.32 353.75L1196.32 354.75L1185.55 356.92ZM1266.09 361.56L1274.79 359.28L1274.79 360.28L1266.09 362.56ZM1309.26 365L1317.85 362.34L1317.85 363.34L1309.26 366ZM1356.06 368.56L1357 368.21L1357 369.21L1356.06 369.56Z"/>
<path fill="#616161" fill-opacity="0.160" d="M333.54 348.55L468.94 340.08L468.94 341.08L333.54 349.55ZM3 369.24L190.17 357.52L190.17 358.52L3 370.24ZM484.86 341.76L544.6 337.88L544.6 338.88L484.86 342.76ZM556.55 339.81L600.35 336.86L600.35 337.86L556.55 340.81ZM612.3 338.83L648.14 336.31L648.14 337.31L612.3 339.83ZM699.91 338.42L723.81 336.59L723.81 337.59L699.91 339.42ZM735.75 338.83L759.65 336.92L759.65 337.92L735.75 339.83ZM772.16 339.22L793.08 337.47L793.08 338.47L772.16 340.22ZM806.44 339.85L825.36 338.18L825.36 339.18L806.44 340.85ZM839.29 340.67L857.21 339.01L857.21 340.01L839.29 341.67ZM871.51 341.65L888.42 339.99L888.42 340.99L871.51 342.65ZM902.68 342.86L919.58 341.1L919.58 342.1L902.68 343.86ZM966.88 345.56L981.77 343.79L981.77 344.79L966.88 346.56ZM999.9 347.08L1012.8 345.44L1012.8 346.44L999.9 348.08ZM1032.12 348.96L1045.99 347.06L1045.99 348.06L1032.12 349.96ZM1066.22 350.88L1079.08 348.97L1079.08 349.97L1066.22 351.88ZM1101.4 353L1113.24 351.06L1113.24 352.06L1101.4 354ZM1137.57 355.37L1148.39 353.42L1148.39 354.42L1137.57 356.37ZM1175.75 357.89L1185.55 355.92L1185.55 356.92L1175.75 358.89ZM1257.38 363.84L1266.09 361.56L1266.09 362.56L1257.38 364.84ZM1301.62 367.35L1309.26 365L1309.26 366L1301.62 368.35ZM1348.58 371.38L1356.06 368.56L1356.06 369.56L1348.58 372.38Z"/>
<path fill="#616161" fill-opacity="0.175" d="M190.17 357.52L333.54 348.55L333.54 349.55L190.17 358.52ZM385.31 348.23L484.86 341.76L484.86 342.76L385.31 349.23ZM3 373.05L122.47 365.3L122.47 366.3L3 374.05ZM504.78 343.31L556.55 339.81L556.55 340.81L504.78 344.31ZM572.48 341.63L612.3 338.83L612.3 339.83L572.48 342.63ZM672.04 340.55L699.91 338.42L699.91 339.42L672.04 341.55ZM711.86 340.74L735.75 338.83L735.75 339.83L711.86 341.74ZM750.24 341.06L772.16 339.22L772.16 340.22L750.24 342.06ZM786.53 341.6L806.44 339.85L806.44 340.85L786.53 342.6ZM820.38 342.43L839.29 340.67L839.29 341.67L820.38 343.43ZM854.6 343.31L871.51 341.65L871.51 342.65L854.6 344.31ZM887.77 344.41L902.68 342.86L902.68 343.86L887.77 345.41ZM952.98 347.2L966.88 345.56L966.88 346.56L952.98 348.2ZM986.01 348.85L999.9 347.08L999.9 348.08L986.01 349.85ZM1020.23 350.59L1032.12 348.96L1032.12 349.96L1020.23 351.59ZM1054.35 352.65L1066.22 350.88L1066.22 351.88L1054.35 353.65ZM1090.54 354.77L1101.4 353L1101.4 354L1090.54 355.77ZM1126.74 357.32L1137.57 355.37L1137.57 356.37L1126.74 358.32ZM1165.95 359.86L1175.75 357.89L1175.75 358.89L1165.95 360.86ZM1248.68 366.12L1257.38 363.84L1257.38 364.84L1248.68 367.12ZM1293.98 369.71L1301.62 367.35L1301.62 368.35L1293.98 370.71ZM1342.03 373.84L1348.58 371.38L1348.58 372.38L1342.03 374.84Z"/>
<path fill="#616161" fill-opacity="0.189" d="M122.47 365.3L385.31 348.23L385.31 349.23L122.47 366.3ZM429.11 348.41L504.78 343.31L504.78 344.31L429.11 349.41ZM3 377.17L54.77 373.67L54.77 374.67L3 378.17ZM524.69 344.98L572.48 341.63L572.48 342.63L524.69 345.98ZM644.16 342.68L672.04 340.55L672.04 341.55L644.16 343.68ZM687.96 342.65L711.86 340.74L711.86 341.74L687.96 343.65ZM728.32 342.9L750.24 341.06L750.24 342.06L728.32 343.9ZM766.62 343.36L786.53 341.6L786.53 342.6L766.62 344.36ZM802.46 344.09L820.38 342.43L820.38 343.43L802.46 345.09ZM837.68 344.97L854.6 343.31L854.6 344.31L837.68 345.97ZM871.87 346.07L887.77 344.41L887.77 345.41L871.87 347.07ZM939.09 348.85L952.98 347.2L952.98 348.2L939.09 349.85ZM973.12 350.49L986.01 348.85L986.01 349.85L973.12 351.49ZM1008.35 352.22L1020.23 350.59L1020.23 351.59L1008.35 353.22ZM1043.47 354.27L1054.35 352.65L1054.35 353.65L1043.47 355.27ZM1079.69 356.53L1090.54 354.77L1090.54 355.77L1079.69 357.53ZM1116.9 359.09L1126.74 357.32L1126.74 358.32L1116.9 360.09ZM1156.15 361.82L1165.95 359.86L1165.95 360.86L1156.15 362.82ZM1239.98 368.4L1248.68 366.12L1248.68 367.12L1239.98 369.4ZM1286.34 372.07L1293.98 369.71L1293.98 370.71L1286.34 373.07ZM1335.48 376.3L1342.03 373.84L1342.03 374.84L1335.48 377.3Z"/>
<path fill="#616161" fill-opacity="0.203" d="M54.77 373.67L429.11 348.41L429.11 349.41L54.77 374.67ZM468.94 348.9L524.69 344.98L524.69 345.98L468.94 349.9ZM612.3 345.12L644.16 342.68L644.16 343.68L612.3 346.12ZM664.07 344.56L687.96 342.65L687.96 343.65L664.07 345.56ZM706.4 344.74L728.32 342.9L728.32 343.9L706.4 345.74ZM746.7 345.11L766.62 343.36L766.62 344.36L746.7 346.11ZM784.54 345.76L802.46 344.09L802.46 345.09L784.54 346.76ZM820.77 346.64L837.68 344.97L837.68 345.97L820.77 347.64ZM856.95 347.62L871.87 346.07L871.87 347.07L856.95 348.62ZM926.18 350.37L939.09 348.85L939.09 349.85L926.18 351.37ZM961.22 352L973.12 350.49L973.12 351.49L961.22 353ZM996.46 353.85L1008.35 352.22L1008.35 353.22L996.46 354.85ZM1031.6 356.04L1043.47 354.27L1043.47 355.27L1031.6 357.04ZM1068.83 358.3L1079.69 356.53L1079.69 357.53L1068.83 359.3ZM1107.06 360.86L1116.9 359.09L1116.9 360.09L1107.06 361.86ZM1146.36 363.79L1156.15 361.82L1156.15 362.82L1146.36 364.79ZM1232.24 370.42L1239.98 368.4L1239.98 369.4L1232.24 371.42ZM1278.7 374.43L1286.34 372.07L1286.34 373.07L1278.7 375.43ZM1328.93 378.76L1335.48 376.3L1335.48 377.3L1328.93 379.76Z"/>
<path fill="#616161" fill-opacity="0.217" d="M369.38 355.89L468.94 348.9L468.94 349.9L369.38 356.89ZM3 381.62L146.36 371.55L146.36 372.55L3 382.62ZM580.44 347.55L612.3 345.12L612.3 346.12L580.44 348.55ZM636.19 346.79L664.07 344.56L664.07 345.56L636.19 347.79ZM683.49 346.66L706.4 344.74L706.4 345.74L683.49 347.66ZM726.79 346.87L746.7 345.11L746.7 346.11L726.79 347.87ZM766.62 347.42L784.54 345.76L784.54 346.76L766.62 348.42ZM804.85 348.2L820.77 346.64L820.77 347.64L804.85 349.2ZM841.05 349.28L856.95 347.62L856.95 348.62L841.05 350.28ZM913.28 351.9L926.18 350.37L926.18 351.37L913.28 352.9ZM948.32 353.64L961.22 352L961.22 353L948.32 354.64ZM984.58 355.48L996.46 353.85L996.46 354.85L984.58 356.48ZM1020.73 357.66L1031.6 356.04L1031.6 357.04L1020.73 358.66ZM1057.98 360.07L1068.83 358.3L1068.83 359.3L1057.98 361.07ZM1097.22 362.63L1107.06 360.86L1107.06 361.86L1097.22 363.63ZM1137.54 365.57L1146.36 363.79L1146.36 364.79L1137.54 366.57ZM1224.5 372.45L1232.24 370.42L1232.24 371.42L1224.5 373.45ZM1272.02 376.49L1278.7 374.43L1278.7 375.43L1272.02 377.49ZM1322.38 381.23L1328.93 378.76L1328.93 379.76L1322.38 382.23Z"/>
<path fill="#616161" fill-opacity="0.231" d="M146.36 371.55L369.38 355.89L369.38 356.89L146.36 372.55ZM540.62 350.6L580.44 347.55L580.44 348.55L540.62 351.6ZM604.34 349.34L636.19 346.79L636.19 347.79L604.34 350.34ZM658.58 348.75L683.49 346.66L683.49 347.66L658.58 349.75ZM705.89 348.71L726.79 346.87L726.79 347.87L705.89 349.71ZM747.7 349.18L766.62 347.42L766.62 348.42L747.7 350.18ZM787.94 349.86L804.85 348.2L804.85 349.2L787.94 350.86ZM826.14 350.83L841.05 349.28L841.05 350.28L826.14 351.83ZM899.38 353.54L913.28 351.9L913.28 352.9L899.38 354.54ZM936.42 355.15L948.32 353.64L948.32 354.64L936.42 356.15ZM972.69 357.11L984.58 355.48L984.58 356.48L972.69 358.11ZM1009.85 359.28L1020.73 357.66L1020.73 358.66L1009.85 360.28ZM1048.11 361.68L1057.98 360.07L1057.98 361.07L1048.11 362.68ZM1087.38 364.4L1097.22 362.63L1097.22 363.63L1087.38 365.4ZM1128.72 367.34L1137.54 365.57L1137.54 366.57L1128.72 368.34ZM1216.76 374.48L1224.5 372.45L1224.5 373.45L1216.76 375.48ZM1265.33 378.56L1272.02 376.49L1272.02 377.49L1265.33 379.56ZM1316.76 383.34L1322.38 381.23L1322.38 382.23L1316.76 384.34Z"/>
<path fill="#616161" fill-opacity="0.245" d="M492.83 354.25L540.62 350.6L540.62 351.6L492.83 355.25ZM572.48 351.89L604.34 349.34L604.34 350.34L572.48 352.89ZM632.67 350.92L658.58 348.75L658.58 349.75L632.67 351.92ZM683.98 350.64L705.89 348.71L705.89 349.71L683.98 351.64ZM728.78 350.94L747.7 349.18L747.7 350.18L728.78 351.94ZM771.03 351.52L787.94 349.86L787.94 350.86L771.03 352.52ZM810.23 352.48L826.14 350.83L826.14 351.83L810.23 353.48ZM886.48 355.07L899.38 353.54L899.38 354.54L886.48 356.07ZM923.52 356.79L936.42 355.15L936.42 356.15L923.52 357.79ZM961.79 358.61L972.69 357.11L972.69 358.11L961.79 359.61ZM998.97 360.9L1009.85 359.28L1009.85 360.28L998.97 361.9ZM1038.24 363.29L1048.11 361.68L1048.11 362.68L1038.24 364.29ZM1078.52 366L1087.38 364.4L1087.38 365.4L1078.52 367ZM1119.9 369.11L1128.72 367.34L1128.72 368.34L1119.9 370.11ZM1209.03 376.5L1216.76 374.48L1216.76 375.48L1209.03 377.5ZM1257.69 380.92L1265.33 378.56L1265.33 379.56L1257.69 381.92ZM1310.21 385.8L1316.76 383.34L1316.76 384.34L1310.21 386.8Z"/>
<path fill="#616161" fill-opacity="0.258" d="M425.13 359.43L492.83 354.25L492.83 355.25L425.13 360.43ZM3 391.69L70.7 386.52L70.7 387.52L3 392.69ZM532.65 355.07L572.48 351.89L572.48 352.89L532.65 356.07ZM604.78 353.26L632.67 350.92L632.67 351.92L604.78 354.26ZM661.08 352.66L683.98 350.64L683.98 351.64L661.08 353.66ZM708.87 352.79L728.78 350.94L728.78 351.94L708.87 353.79ZM753.12 353.28L771.03 351.52L771.03 352.52L753.12 354.28ZM795.32 354.04L810.23 352.48L810.23 353.48L795.32 355.04ZM873.57 356.6L886.48 355.07L886.48 356.07L873.57 357.6ZM911.62 358.3L923.52 356.79L923.52 357.79L911.62 359.3ZM949.91 360.24L961.79 358.61L961.79 359.61L949.91 361.24ZM989.08 362.38L998.97 360.9L998.97 361.9L989.08 363.38ZM1028.37 364.9L1038.24 363.29L1038.24 364.29L1028.37 365.9ZM1068.68 367.77L1078.52 366L1078.52 367L1068.68 368.77ZM1111.09 370.88L1119.9 369.11L1119.9 370.11L1111.09 371.88ZM1201.29 378.53L1209.03 376.5L1209.03 377.5L1201.29 379.53ZM1251.01 382.98L1257.69 380.92L1257.69 381.92L1251.01 383.98ZM1304.6 387.91L1310.21 385.8L1310.21 386.8L1304.6 388.91Z"/>
<path fill="#616161" fill-opacity="0.272" d="M70.7 386.52L425.13 359.43L425.13 360.43L70.7 387.52ZM488.85 358.57L532.65 355.07L532.65 356.07L488.85 359.57ZM572.9 355.93L604.78 353.26L604.78 354.26L572.9 356.93ZM636.19 354.85L661.08 352.66L661.08 353.66L636.19 355.85ZM688.96 354.64L708.87 352.79L708.87 353.79L688.96 355.64ZM735.21 355.03L753.12 353.28L753.12 354.28L735.21 356.03ZM779.41 355.69L795.32 354.04L795.32 355.04L779.41 356.69ZM859.67 358.24L873.57 356.6L873.57 357.6L859.67 359.24ZM899.72 359.81L911.62 358.3L911.62 359.3L899.72 360.81ZM938.02 361.87L949.91 360.24L949.91 361.24L938.02 362.87ZM978.2 364L989.08 362.38L989.08 363.38L978.2 365ZM1018.5 366.51L1028.37 364.9L1028.37 365.9L1018.5 367.51ZM1058.84 369.54L1068.68 367.77L1068.68 368.77L1058.84 370.54ZM1102.27 372.65L1111.09 370.88L1111.09 371.88L1102.27 373.65ZM1194.52 380.3L1201.29 378.53L1201.29 379.53L1194.52 381.3ZM1244.33 385.04L1251.01 382.98L1251.01 383.98L1244.33 386.04ZM1298.05 390.37L1304.6 387.91L1304.6 388.91L1298.05 391.37Z"/>
<path fill="#616161" fill-opacity="0.285" d="M421.15 363.99L488.85 358.57L488.85 359.57L421.15 364.99ZM3 397.43L78.66 391.38L78.66 392.38L3 398.43ZM536.03 359.03L572.9 355.93L572.9 356.93L536.03 360.03ZM609.31 357.22L636.19 354.85L636.19 355.85L609.31 358.22ZM667.06 356.67L688.96 354.64L688.96 355.64L667.06 357.67ZM717.31 356.79L735.21 355.03L735.21 356.03L717.31 357.79ZM762.51 357.45L779.41 355.69L779.41 356.69L762.51 358.45ZM846.77 359.77L859.67 358.24L859.67 359.24L846.77 360.77ZM886.82 361.45L899.72 359.81L899.72 360.81L886.82 362.45ZM927.13 363.36L938.02 361.87L938.02 362.87L927.13 364.36ZM967.32 365.62L978.2 364L978.2 365L967.32 366.62ZM1007.64 368.28L1018.5 366.51L1018.5 367.51L1007.64 369.28ZM1049.99 371.13L1058.84 369.54L1058.84 370.54L1049.99 372.13ZM1093.45 374.43L1102.27 372.65L1102.27 373.65L1093.45 375.43ZM1186.78 382.33L1194.52 380.3L1194.52 381.3L1186.78 383.33ZM1237.64 387.11L1244.33 385.04L1244.33 386.04L1237.64 388.11ZM1292.43 392.48L1298.05 390.37L1298.05 391.37L1292.43 393.48ZM1351.6 398.75L1357 396.16L1357 397.16L1351.6 399.75Z"/>
<path fill="#616161" fill-opacity="0.298" d="M78.66 391.38L421.15 363.99L421.15 364.99L78.66 392.38ZM491.2 362.79L536.03 359.03L536.03 360.03L491.2 363.79ZM579.45 359.86L609.31 357.22L609.31 358.22L579.45 360.86ZM643.16 358.89L667.06 356.67L667.06 357.67L643.16 359.89ZM697.41 358.74L717.31 356.79L717.31 357.79L697.41 359.74ZM745.61 359.21L762.51 357.45L762.51 358.45L745.61 360.21ZM832.87 361.41L846.77 359.77L846.77 360.77L832.87 362.41ZM874.92 362.96L886.82 361.45L886.82 362.45L874.92 363.96ZM915.24 364.99L927.13 363.36L927.13 364.36L915.24 365.99ZM956.44 367.24L967.32 365.62L967.32 366.62L956.44 368.24ZM997.78 369.89L1007.64 368.28L1007.64 369.28L997.78 370.89ZM1040.15 372.9L1049.99 371.13L1049.99 372.13L1040.15 373.9ZM1084.63 376.2L1093.45 374.43L1093.45 375.43L1084.63 377.2ZM1179.05 384.36L1186.78 382.33L1186.78 383.33L1179.05 385.36ZM1230.96 389.17L1237.64 387.11L1237.64 388.11L1230.96 390.17ZM1285.88 394.95L1292.43 392.48L1292.43 393.48L1285.88 395.95ZM1346.19 401.35L1351.6 398.75L1351.6 399.75L1346.19 402.35Z"/>
<path fill="#616161" fill-opacity="0.311" d="M427.43 368.13L491.2 362.79L491.2 363.79L427.43 369.13ZM3 403.73L70.75 398.05L70.75 399.05L3 404.73ZM544.6 362.93L579.45 359.86L579.45 360.86L544.6 363.93ZM618.27 361.2L643.16 358.89L643.16 359.89L618.27 362.2ZM676.52 360.8L697.41 358.74L697.41 359.74L676.52 361.8ZM727.72 361.07L745.61 359.21L745.61 360.21L727.72 362.07ZM818.97 363.06L832.87 361.41L832.87 362.41L818.97 364.06ZM862.02 364.6L874.92 362.96L874.92 363.96L862.02 365.6ZM903.36 366.62L915.24 364.99L915.24 365.99L903.36 367.62ZM945.56 368.86L956.44 367.24L956.44 368.24L945.56 369.86ZM987.91 371.5L997.78 369.89L997.78 370.89L987.91 372.5ZM1031.29 374.5L1040.15 372.9L1040.15 373.9L1031.29 375.5ZM1075.81 377.97L1084.63 376.2L1084.63 377.2L1075.81 378.97ZM1171.31 386.38L1179.05 384.36L1179.05 385.36L1171.31 387.38ZM1224.27 391.23L1230.96 389.17L1230.96 390.17L1224.27 392.23ZM1280.27 397.06L1285.88 394.95L1285.88 395.95L1280.27 398.06ZM1341.69 403.52L1346.19 401.35L1346.19 402.35L1341.69 404.52Z"/>
<path fill="#616161" fill-opacity="0.323" d="M70.75 398.05L427.43 368.13L427.43 369.13L70.75 399.05ZM501.79 366.7L544.6 362.93L544.6 363.93L501.79 367.7ZM589.4 363.88L618.27 361.2L618.27 362.2L589.4 364.88ZM654.63 362.94L676.52 360.8L676.52 361.8L654.63 363.94ZM708.83 363.04L727.72 361.07L727.72 362.07L708.83 364.04ZM804.08 364.82L818.97 363.06L818.97 364.06L804.08 365.82ZM848.13 366.36L862.02 364.6L862.02 365.6L848.13 367.36ZM891.47 368.25L903.36 366.62L903.36 367.62L891.47 369.25ZM934.68 370.48L945.56 368.86L945.56 369.86L934.68 371.48ZM977.05 373.27L987.91 371.5L987.91 372.5L977.05 374.27ZM1021.45 376.27L1031.29 374.5L1031.29 375.5L1021.45 377.27ZM1067 379.74L1075.81 377.97L1075.81 378.97L1067 380.74ZM1163.57 388.41L1171.31 386.38L1171.31 387.38L1163.57 389.41ZM1216.63 393.59L1224.27 391.23L1224.27 392.23L1216.63 394.59ZM1273.72 399.52L1280.27 397.06L1280.27 398.06L1273.72 400.52ZM1336.28 406.11L1341.69 403.52L1341.69 404.52L1336.28 407.11Z"/>
<path fill="#616161" fill-opacity="0.336" d="M443.05 371.88L501.79 366.7L501.79 367.7L443.05 372.88ZM3 410.67L47.8 406.72L47.8 407.72L3 411.67ZM555.55 367.03L589.4 363.88L589.4 364.88L555.55 368.03ZM629.76 365.39L654.63 362.94L654.63 363.94L629.76 366.39ZM688.95 365.11L708.83 363.04L708.83 364.04L688.95 366.11ZM789.19 366.58L804.08 364.82L804.08 365.82L789.19 367.58ZM835.24 368L848.13 366.36L848.13 367.36L835.24 369ZM879.58 369.88L891.47 368.25L891.47 369.25L879.58 370.88ZM922.81 372.25L934.68 370.48L934.68 371.48L922.81 373.25ZM967.18 374.88L977.05 373.27L977.05 374.27L967.18 375.88ZM1011.61 378.04L1021.45 376.27L1021.45 377.27L1011.61 379.04ZM1057.2 381.71L1067 379.74L1067 380.74L1057.2 382.71ZM1155.83 390.44L1163.57 388.41L1163.57 389.41L1155.83 391.44ZM1209.95 395.66L1216.63 393.59L1216.63 394.59L1209.95 396.66ZM1268.11 401.63L1273.72 399.52L1273.72 400.52L1268.11 402.63ZM1330.88 408.71L1336.28 406.11L1336.28 407.11L1330.88 409.71Z"/>
<path fill="#616161" fill-opacity="0.348" d="M305.66 383.99L443.05 371.88L443.05 372.88L305.66 384.99ZM47.8 406.72L239.95 389.78L239.95 390.78L47.8 407.72ZM515.73 370.73L555.55 367.03L555.55 368.03L515.73 371.73ZM601.9 368.12L629.76 365.39L629.76 366.39L601.9 369.12ZM667.08 367.38L688.95 365.11L688.95 366.11L667.08 368.38ZM773.31 368.46L789.19 366.58L789.19 367.58L773.31 369.46ZM820.36 369.89L835.24 368L835.24 369L820.36 370.89ZM866.71 371.65L879.58 369.88L879.58 370.88L866.71 372.65ZM910.94 374.02L922.81 372.25L922.81 373.25L910.94 375.02ZM956.33 376.65L967.18 374.88L967.18 375.88L956.33 377.65ZM1001.77 379.81L1011.61 378.04L1011.61 379.04L1001.77 380.81ZM1048.38 383.48L1057.2 381.71L1057.2 382.71L1048.38 384.48ZM1148.1 392.46L1155.83 390.44L1155.83 391.44L1148.1 393.46ZM1202.31 398.01L1209.95 395.66L1209.95 396.66L1202.31 399.01ZM1261.56 404.09L1268.11 401.63L1268.11 402.63L1261.56 405.09ZM1325.47 411.31L1330.88 408.71L1330.88 409.71L1325.47 412.31Z"/>
<path fill="#616161" fill-opacity="0.360" d="M239.95 389.78L305.66 383.99L305.66 384.99L239.95 390.78ZM460.97 375.81L515.73 370.73L515.73 371.73L460.97 376.81ZM3 418.35L17.93 416.96L17.93 417.96L3 419.35ZM570.07 371.24L601.9 368.12L601.9 369.12L570.07 372.24ZM643.22 369.87L667.08 367.38L667.08 368.38L643.22 370.87ZM756.44 370.46L773.31 368.46L773.31 369.46L756.44 371.46ZM805.48 371.78L820.36 369.89L820.36 370.89L805.48 372.78ZM852.84 373.55L866.71 371.65L866.71 372.65L852.84 374.55ZM899.07 375.78L910.94 374.02L910.94 375.02L899.07 376.78ZM944.48 378.58L956.33 376.65L956.33 377.65L944.48 379.58ZM990.95 381.76L1001.77 379.81L1001.77 380.81L990.95 382.76ZM1038.58 385.45L1048.38 383.48L1048.38 384.48L1038.58 386.45ZM1140.36 394.49L1148.1 392.46L1148.1 393.46L1140.36 395.49ZM1194.67 400.37L1202.31 398.01L1202.31 399.01L1194.67 401.37ZM1255.01 406.55L1261.56 404.09L1261.56 405.09L1255.01 407.55ZM1319.17 414.34L1325.47 411.31L1325.47 412.31L1319.17 415.34Z"/>
<path fill="#616161" fill-opacity="0.373" d="M360.42 385.15L460.97 375.81L460.97 376.81L360.42 386.15ZM17.93 416.96L176.23 402.26L176.23 403.26L17.93 417.96ZM531.27 375.05L570.07 371.24L570.07 372.24L531.27 376.05ZM616.38 372.66L643.22 369.87L643.22 370.87L616.38 373.66ZM738.57 372.57L756.44 370.46L756.44 371.46L738.57 373.57ZM789.61 373.8L805.48 371.78L805.48 372.78L789.61 374.8ZM838.97 375.45L852.84 373.55L852.84 374.55L838.97 376.45ZM886.22 377.7L899.07 375.78L899.07 376.78L886.22 378.7ZM932.64 380.51L944.48 378.58L944.48 379.58L932.64 381.51ZM980.12 383.71L990.95 381.76L990.95 382.76L980.12 384.71ZM1028.79 387.42L1038.58 385.45L1038.58 386.45L1028.79 388.42ZM1131.66 396.77L1140.36 394.49L1140.36 395.49L1131.66 397.77ZM1187.03 402.73L1194.67 400.37L1194.67 401.37L1187.03 403.73ZM1247.52 409.37L1255.01 406.55L1255.01 407.55L1247.52 410.37ZM1313.76 416.94L1319.17 414.34L1319.17 415.34L1313.76 417.94Z"/>
<path fill="#616161" fill-opacity="0.385" d="M176.23 402.26L360.42 385.15L360.42 386.15L176.23 403.26ZM477.55 380.33L531.27 375.05L531.27 376.05L477.55 381.33ZM583.57 376.08L616.38 372.66L616.38 373.66L583.57 377.08ZM718.71 374.92L738.57 372.57L738.57 373.57L718.71 375.92ZM772.75 375.94L789.61 373.8L789.61 374.8L772.75 376.94ZM823.13 377.62L838.97 375.45L838.97 376.45L823.13 378.62ZM872.37 379.76L886.22 377.7L886.22 378.7L872.37 380.76ZM920.8 382.44L932.64 380.51L932.64 381.51L920.8 383.44ZM968.32 385.84L980.12 383.71L980.12 384.71L968.32 386.84ZM1018.01 389.59L1028.79 387.42L1028.79 388.42L1018.01 390.59ZM1121.98 399.3L1131.66 396.77L1131.66 397.77L1121.98 400.3ZM1179.39 405.09L1187.03 402.73L1187.03 403.73L1179.39 406.09ZM1240.03 412.18L1247.52 409.37L1247.52 410.37L1240.03 413.18ZM1307.46 419.97L1313.76 416.94L1313.76 417.94L1307.46 420.97Z"/>
<path fill="#616161" fill-opacity="0.396" d="M384.03 389.51L477.55 380.33L477.55 381.33L384.03 390.51ZM3 426.91L148.25 412.65L148.25 413.65L3 427.91ZM543.8 380.21L583.57 376.08L583.57 377.08L543.8 381.21ZM695.88 377.63L718.71 374.92L718.71 375.92L695.88 378.63ZM753.9 378.34L772.75 375.94L772.75 376.94L753.9 379.34ZM806.29 379.93L823.13 377.62L823.13 378.62L806.29 380.93ZM857.53 381.97L872.37 379.76L872.37 380.76L857.53 382.97ZM906.98 384.69L920.8 382.44L920.8 383.44L906.98 385.69ZM956.51 387.96L968.32 385.84L968.32 386.84L956.51 388.96ZM1006.25 391.95L1018.01 389.59L1018.01 390.59L1006.25 392.95ZM1112.31 401.83L1121.98 399.3L1121.98 400.3L1112.31 402.83ZM1169.85 408.04L1179.39 405.09L1179.39 406.09L1169.85 409.04ZM1232.55 415L1240.03 412.18L1240.03 413.18L1232.55 416ZM1300.25 423.43L1307.46 419.97L1307.46 420.97L1300.25 424.43Z"/>
<path fill="#616161" fill-opacity="0.408" d="M148.25 412.65L384.03 389.51L384.03 390.51L148.25 413.65ZM485.15 386.32L543.8 380.21L543.8 381.21L485.15 387.32ZM668.09 380.92L695.88 377.63L695.88 378.63L668.09 381.92ZM731.08 381.23L753.9 378.34L753.9 379.34L731.08 382.23ZM787.47 382.51L806.29 379.93L806.29 380.93L787.47 383.51ZM839.73 384.62L857.53 381.97L857.53 382.97L839.73 385.62ZM891.19 387.26L906.98 384.69L906.98 385.69L891.19 388.26ZM941.75 390.62L956.51 387.96L956.51 388.96L941.75 391.62ZM993.52 394.51L1006.25 391.95L1006.25 392.95L993.52 395.51ZM1101.67 404.62L1112.31 401.83L1112.31 402.83L1101.67 405.62ZM1160.3 410.99L1169.85 408.04L1169.85 409.04L1160.3 411.99ZM1223.19 418.52L1232.55 415L1232.55 416L1223.19 419.52ZM1293.04 426.89L1300.25 423.43L1300.25 424.43L1293.04 427.89Z"/>
<path fill="#616161" fill-opacity="0.420" d="M356.91 399.67L485.15 386.32L485.15 387.32L356.91 400.67ZM3 436.5L189.9 417.05L189.9 418.05L3 437.5ZM633.34 385.03L668.09 380.92L668.09 381.92L633.34 386.03ZM703.31 384.76L731.08 381.23L731.08 382.23L703.31 385.76ZM763.7 385.77L787.47 382.51L787.47 383.51L763.7 386.77ZM819.95 387.57L839.73 384.62L839.73 385.62L819.95 388.57ZM873.43 390.16L891.19 387.26L891.19 388.26L873.43 391.16ZM925.02 393.63L941.75 390.62L941.75 391.62L925.02 394.63ZM977.84 397.66L993.52 394.51L993.52 395.51L977.84 398.66ZM1089.1 407.91L1101.67 404.62L1101.67 405.62L1089.1 408.91ZM1148.84 414.52L1160.3 410.99L1160.3 411.99L1148.84 415.52ZM1212.9 422.38L1223.19 418.52L1223.19 419.52L1212.9 423.38ZM1284.03 431.22L1293.04 426.89L1293.04 427.89L1284.03 432.22Z"/>
<path fill="#616161" fill-opacity="0.431" d="M189.9 417.05L356.91 399.67L356.91 400.67L189.9 418.05ZM576.76 391.72L633.34 385.03L633.34 386.03L576.76 392.72ZM661.65 390.06L703.31 384.76L703.31 385.76L661.65 391.06ZM730.02 390.39L763.7 385.77L763.7 386.77L730.02 391.39ZM790.28 391.99L819.95 387.57L819.95 388.57L790.28 392.99ZM846.78 394.5L873.43 390.16L873.43 391.16L846.78 395.5ZM902.39 397.7L925.02 393.63L925.02 394.63L902.39 398.7ZM957.27 401.79L977.84 397.66L977.84 398.66L957.27 402.79ZM1071.69 412.47L1089.1 407.91L1089.1 408.91L1071.69 413.47ZM1132.61 419.53L1148.84 414.52L1148.84 415.52L1132.61 420.53ZM1198.86 427.66L1212.9 422.38L1212.9 423.38L1198.86 428.66ZM1271.42 437.28L1284.03 431.22L1284.03 432.22L1271.42 438.28ZM1352.01 448.97L1357 445.65L1357 446.65L1352.01 449.97Z"/>
<path fill="#616161" fill-opacity="0.443" d="M3 459.62L576.76 391.72L576.76 392.72L3 460.62ZM3 473.74L661.65 390.06L661.65 391.06L3 474.74ZM3 490.09L730.02 390.39L730.02 391.39L3 491.09ZM3 509.26L790.28 391.99L790.28 392.99L3 510.26ZM734.28 412.84L846.78 394.5L846.78 395.5L734.28 413.84ZM3 532.06L603.02 434.24L603.02 435.24L3 533.06ZM753.8 424.45L902.39 397.7L902.39 398.7L753.8 425.45ZM3 559.61L585.53 454.74L585.53 455.74L3 560.61ZM766.22 440.19L957.27 401.79L957.27 402.79L766.22 441.19ZM3 593.57L578.11 477.99L578.11 478.99L3 594.57ZM774.78 490.24L1071.69 412.47L1071.69 413.47L774.78 491.24ZM3 692.38L594.89 537.36L594.89 538.36L3 693.38ZM3 768.29L1132.61 419.53L1132.61 420.53L3 769.29ZM3 877.24L1198.86 427.66L1198.86 428.66L3 878.24ZM301.25 903.5L1271.42 437.28L1271.42 438.28L301.25 904.5ZM669.35 903.5L1352.01 448.97L1352.01 449.97L669.35 904.5ZM1357.5 557.75L1037.94 904L1036.94 904L1356.5 557.75Z"/>
<path fill="#616161" fill-opacity="0.289" d="M752.82 424.63L753.8 424.45L753.8 425.45L752.82 425.63ZM585.53 454.74L586.52 454.56L586.52 455.56L585.53 455.74ZM594.89 537.36L774.78 490.24L774.78 491.24L594.89 538.36Z"/>
<path fill="#616161" fill-opacity="0.017" d="M1305.29 325.01L1357 327.81L1357 328.81L1305.29 326.01ZM1201.3 320.51L1357 329.11L1357 330.11L1201.3 321.51ZM1081.88 316L1357 331.89L1357 332.89L1081.88 317ZM1038.2 314.54L1357 333.37L1357 334.37L1038.2 315.54ZM1002.53 313.49L1357 334.93L1357 335.93L1002.53 314.49ZM966.89 312.4L1265.44 330.89L1265.44 331.89L966.89 313.4ZM939.23 311.75L1166.02 326.15L1166.02 327.15L939.23 312.75ZM911.59 311.08L1098.51 323.25L1098.51 324.25L911.59 312.08ZM887.94 310.63L1046.95 321.26L1046.95 322.26L887.94 311.63ZM842.52 309.8L966.16 318.52L966.16 319.52L842.52 310.8ZM822.79 309.57L934.42 317.66L934.42 318.66L822.79 310.57ZM803.06 309.32L902.69 316.75L902.69 317.75L803.06 310.32ZM783.33 309.05L874.96 316.1L874.96 317.1L783.33 310.05ZM763.6 308.77L851.22 315.72L851.22 316.72L763.6 309.77ZM747.85 308.8L827.48 315.32L827.48 316.32L747.85 309.8ZM728.11 308.49L803.74 314.89L803.74 315.89L728.11 309.49ZM696.58 308.53L760.23 314.3L760.23 315.3L696.58 309.53ZM680.79 308.55L740.46 314.15L740.46 315.15L680.79 309.55ZM665 308.57L720.68 314L720.68 315L665 309.57ZM649.2 308.59L704.87 314.23L704.87 315.23L649.2 309.59ZM633.38 308.61L685.07 314.07L685.07 315.07L633.38 309.61ZM617.55 308.63L665.26 313.89L665.26 314.89L617.55 309.63ZM600.68 308.54L648.2 314.01L648.2 315.01L600.68 309.54ZM572.48 309.02L614.14 314.29L614.14 315.29L572.48 310.02ZM557.38 309.16L597.01 314.44L597.01 315.44L557.38 310.16ZM543.27 309.46L579.9 314.61L579.9 315.61L543.27 310.46ZM528.17 309.65L562.79 314.79L562.79 315.79L528.17 310.65ZM512.89 309.83L546.46 315.13L546.46 316.13L512.89 310.83ZM497.63 310.04L529.17 315.34L529.17 316.34L497.63 311.04ZM483.37 310.46L511.9 315.6L511.9 316.6L483.37 311.46ZM452.52 311.01L477.94 316.35L477.94 317.35L452.52 312.01ZM437.1 311.36L460.49 316.71L460.49 317.71L437.1 312.36ZM421.5 311.74L442.83 317.1L442.83 318.1L421.5 312.74ZM405.78 312.17L425.04 317.54L425.04 318.54L405.78 313.17ZM389.92 312.66L407.08 318.03L407.08 319.03L389.92 313.66ZM372.97 312.89L388.98 318.6L388.98 319.6L372.97 313.89ZM356.69 313.48L370.54 319.23L370.54 320.23L356.69 314.48ZM322.75 314.67L332.12 320.43L332.12 321.43L322.75 315.67ZM304.75 314.99L312.52 321.29L312.52 322.29L304.75 315.99ZM287.43 316.34L292.58 322.45L291.58 322.45L286.43 316.34ZM268.41 315.99L271.68 323.25L270.68 323.25L267.41 315.99ZM249.89 319.49L250.12 323.47L249.12 323.47L248.89 319.49ZM230.43 317.6L227.9 325.17L226.9 325.17L229.43 317.6ZM210.36 318.58L205.66 325.04L204.66 325.04L209.36 318.58ZM155.82 327.71L165.79 321.12L165.79 322.12L155.82 328.71ZM129.45 329.21L143.5 321.84L143.5 322.84L129.45 330.21ZM104.09 329.76L122.14 321.9L122.14 322.9L104.09 330.76ZM73.64 332.03L95.95 323.74L95.95 324.74L73.64 333.03ZM44.44 333.33L70.81 324.77L70.81 325.77L44.44 334.33ZM10.64 335.65L45.02 325.76L45.02 326.76L10.64 336.65ZM3 330.74L18.21 326.81L18.21 327.81L3 331.74Z"/>
<path fill="#616161" fill-opacity="0.034" d="M1265.44 330.89L1357 336.56L1357 337.56L1265.44 331.89ZM1166.02 326.15L1357 338.28L1357 339.28L1166.02 327.15ZM1098.51 323.25L1357 340.08L1357 341.08L1098.51 324.25ZM1046.95 321.26L1305.32 338.52L1305.32 339.52L1046.95 322.26ZM966.16 318.52L1105.74 328.36L1105.74 329.36L966.16 319.52ZM934.42 317.66L1050.03 326.05L1050.03 327.05L934.42 318.66ZM902.69 316.75L1002.32 324.19L1002.32 325.19L902.69 317.75ZM874.96 316.1L962.6 322.84L962.6 323.84L874.96 317.1ZM851.22 315.72L926.89 321.72L926.89 322.72L851.22 316.72ZM827.48 315.32L895.16 320.86L895.16 321.86L827.48 316.32ZM803.74 314.89L867.42 320.27L867.42 321.27L803.74 315.89ZM760.23 314.3L811.95 318.98L811.95 319.98L760.23 315.3ZM740.46 314.15L788.19 318.63L788.19 319.63L740.46 315.15ZM720.68 314L768.4 318.65L768.4 319.65L720.68 315ZM704.87 314.23L744.63 318.27L744.63 319.27L704.87 315.23ZM685.07 314.07L724.83 318.27L724.83 319.27L685.07 315.07ZM665.26 313.89L701.04 317.83L701.04 318.83L665.26 314.89ZM648.2 314.01L683.84 318.11L683.84 319.11L648.2 315.01ZM614.14 314.29L643.89 318.05L643.89 319.05L614.14 315.29ZM597.01 314.44L624.76 318.13L624.76 319.13L597.01 315.44ZM579.9 314.61L606.63 318.36L606.63 319.36L579.9 315.61ZM562.79 314.79L587.52 318.47L587.52 319.47L562.79 315.79ZM546.46 315.13L569.16 318.71L569.16 319.71L546.46 316.13ZM529.17 315.34L550.85 318.99L550.85 319.99L529.17 316.34ZM511.9 315.6L532.56 319.32L532.56 320.32L511.9 316.6ZM477.94 316.35L495.54 320.04L495.54 321.04L477.94 317.35ZM460.49 316.71L477.05 320.5L477.05 321.5L460.49 317.71ZM442.83 317.1L458.34 321L458.34 322L442.83 318.1ZM425.04 317.54L439.48 321.56L439.48 322.56L425.04 318.54ZM407.08 318.03L420.44 322.21L420.44 323.21L407.08 319.03ZM388.98 318.6L400.28 322.63L400.28 323.63L388.98 319.6ZM370.54 319.23L380.7 323.44L380.7 324.44L370.54 320.23ZM332.12 320.43L338.93 324.62L338.93 325.62L332.12 321.43ZM312.52 321.29L317.96 325.69L317.96 326.69L312.52 322.29ZM292.58 322.45L296.44 327.03L295.44 327.03L291.58 322.45ZM271.68 323.25L273.31 326.88L272.31 326.88L270.68 323.25ZM250.12 323.47L250.35 327.44L249.35 327.44L249.12 323.47ZM227.9 325.17L226.63 328.95L225.63 328.95L226.9 325.17ZM205.66 325.04L200.96 331.5L199.96 331.5L204.66 325.04ZM145.85 334.3L155.82 327.71L155.82 328.71L145.85 335.3ZM118.91 334.74L129.45 329.21L129.45 330.21L118.91 335.74ZM89.65 336.04L104.09 329.76L104.09 330.76L89.65 337.04ZM55.05 338.95L73.64 332.03L73.64 333.03L55.05 339.95ZM21.84 340.66L44.44 333.33L44.44 334.33L21.84 341.66ZM3 337.85L10.64 335.65L10.64 336.65L3 338.85Z"/>
<path fill="#616161" fill-opacity="0.051" d="M1305.32 338.52L1357 341.97L1357 342.97L1305.32 339.52ZM1105.74 328.36L1357 346.08L1357 347.08L1105.74 329.36ZM1050.03 326.05L1217.47 338.19L1217.47 339.19L1050.03 327.05ZM1002.32 324.19L1125.86 333.41L1125.86 334.41L1002.32 325.19ZM962.6 322.84L1058.21 330.19L1058.21 331.19L962.6 323.84ZM926.89 321.72L1006.54 328.04L1006.54 329.04L926.89 322.72ZM895.16 320.86L962.84 326.39L962.84 327.39L895.16 321.86ZM867.42 320.27L927.13 325.32L927.13 326.32L867.42 321.27ZM811.95 318.98L863.67 323.66L863.67 324.66L811.95 319.98ZM788.19 318.63L831.95 322.74L831.95 323.74L788.19 319.63ZM768.4 318.65L808.17 322.53L808.17 323.53L768.4 319.65ZM744.63 318.27L780.42 321.89L780.42 322.89L744.63 319.27ZM724.83 318.27L756.64 321.62L756.64 322.62L724.83 319.27ZM701.04 317.83L732.84 321.33L732.84 322.33L701.04 318.83ZM683.84 318.11L711.56 321.3L711.56 322.3L683.84 319.11ZM643.89 318.05L669.68 321.31L669.68 322.31L643.89 319.05ZM624.76 318.13L649.53 321.43L649.53 322.43L624.76 319.13ZM606.63 318.36L628.4 321.42L628.4 322.42L606.63 319.36ZM587.52 318.47L609.27 321.7L609.27 322.7L587.52 319.47ZM569.16 318.71L588.91 321.83L588.91 322.83L569.16 319.71ZM550.85 318.99L569.57 322.14L569.57 323.14L550.85 319.99ZM532.56 319.32L550.27 322.51L550.27 323.51L532.56 320.32ZM495.54 320.04L510.21 323.12L510.21 324.12L495.54 321.04ZM477.05 320.5L490.7 323.62L490.7 324.62L477.05 321.5ZM458.34 321L470.94 324.16L470.94 325.16L458.34 322ZM439.48 321.56L451.03 324.78L451.03 325.78L439.48 322.56ZM420.44 322.21L430.93 325.49L430.93 326.49L420.44 323.21ZM400.28 322.63L409.7 325.99L409.7 326.99L400.28 323.63ZM380.7 323.44L389.01 326.89L389.01 327.89L380.7 324.44ZM338.93 324.62L344.89 328.28L344.89 329.28L338.93 325.62ZM317.96 325.69L322.62 329.47L322.62 330.47L317.96 326.69ZM296.44 327.03L299.65 330.86L298.65 330.86L295.44 327.03ZM273.31 326.88L274.94 330.51L273.94 330.51L272.31 326.88ZM250.35 327.44L250.58 331.42L249.58 331.42L249.35 327.44ZM226.63 328.95L225.36 332.73L224.36 332.73L225.63 328.95ZM200.96 331.5L198.61 334.74L197.61 334.74L199.96 331.5ZM139.21 338.7L145.85 334.3L145.85 335.3L139.21 339.7ZM108.37 340.28L118.91 334.74L118.91 335.74L108.37 341.28ZM75.21 342.33L89.65 336.04L89.65 337.04L75.21 343.33ZM40.18 344.48L55.05 338.95L55.05 339.95L40.18 345.48ZM3 346.78L21.84 340.66L21.84 341.66L3 347.78Z"/>
<path fill="#616161" fill-opacity="0.067" d="M1217.47 338.19L1357 348.31L1357 349.31L1217.47 339.19ZM1125.86 333.41L1357 350.66L1357 351.66L1125.86 334.41ZM1058.21 330.19L1197.65 340.91L1197.65 341.91L1058.21 331.19ZM1006.54 328.04L1106.1 335.93L1106.1 336.93L1006.54 329.04ZM962.84 326.39L1042.47 332.91L1042.47 333.91L962.84 327.39ZM927.13 325.32L990.81 330.7L990.81 331.7L927.13 326.32ZM863.67 323.66L911.41 327.99L911.41 328.99L863.67 324.66ZM831.95 322.74L875.7 326.85L875.7 327.85L831.95 323.74ZM808.17 322.53L843.97 326.02L843.97 327.02L808.17 323.53ZM780.42 321.89L816.21 325.52L816.21 326.52L780.42 322.89ZM756.64 321.62L788.44 324.98L788.44 325.98L756.64 322.62ZM732.84 321.33L764.65 324.83L764.65 325.83L732.84 322.33ZM711.56 321.3L739.28 324.49L739.28 325.49L711.56 322.3ZM669.68 321.31L692.49 324.2L692.49 325.2L669.68 322.31ZM649.53 321.43L670.34 324.2L670.34 325.2L649.53 322.43ZM628.4 321.42L649.19 324.34L649.19 325.34L628.4 322.42ZM609.27 321.7L628.07 324.5L628.07 325.5L609.27 322.7ZM588.91 321.83L606.68 324.63L606.68 325.63L588.91 322.83ZM569.57 322.14L585.34 324.8L585.34 325.8L569.57 323.14ZM550.27 322.51L565.03 325.17L565.03 326.17L550.27 323.51ZM510.21 323.12L523.9 325.99L523.9 326.99L510.21 324.12ZM490.7 323.62L503.36 326.52L503.36 327.52L490.7 324.62ZM470.94 324.16L482.57 327.08L482.57 328.08L470.94 325.16ZM451.03 324.78L460.66 327.46L460.66 328.46L451.03 325.78ZM430.93 325.49L439.51 328.17L439.51 329.17L430.93 326.49ZM409.7 325.99L418.17 329.02L418.17 330.02L409.7 326.99ZM389.01 326.89L395.48 329.57L395.48 330.57L389.01 327.89ZM344.89 328.28L350 331.42L350 332.42L344.89 329.28ZM322.62 329.47L326.5 332.62L326.5 333.62L322.62 330.47ZM299.65 330.86L302.23 333.91L301.23 333.91L298.65 330.86ZM274.94 330.51L276.57 334.14L275.57 334.14L273.94 330.51ZM250.58 331.42L250.8 335.4L249.8 335.4L249.58 331.42ZM225.36 332.73L224.09 336.51L223.09 336.51L224.36 332.73ZM198.61 334.74L193.91 341.2L192.91 341.2L197.61 334.74ZM132.57 343.09L139.21 338.7L139.21 339.7L132.57 344.09ZM101.35 343.97L108.37 340.28L108.37 341.28L101.35 344.97ZM64.38 347.05L75.21 342.33L75.21 343.33L64.38 348.05ZM29.03 348.63L40.18 344.48L40.18 345.48L29.03 349.63Z"/>
<path fill="#616161" fill-opacity="0.084" d="M1197.65 340.91L1357 353.17L1357 354.17L1197.65 341.91ZM1106.1 335.93L1273.37 349.19L1273.37 350.19L1106.1 336.93ZM1042.47 332.91L1145.99 341.38L1145.99 342.38L1042.47 333.91ZM990.81 330.7L1070.42 337.43L1070.42 338.43L990.81 331.7ZM911.41 327.99L963.13 332.67L963.13 333.67L911.41 328.99ZM875.7 326.85L919.46 330.96L919.46 331.96L875.7 327.85ZM843.97 326.02L883.74 329.89L883.74 330.89L843.97 327.02ZM816.21 325.52L852 329.15L852 330.15L816.21 326.52ZM788.44 324.98L820.25 328.34L820.25 329.34L788.44 325.98ZM764.65 324.83L792.47 327.9L792.47 328.9L764.65 325.83ZM739.28 324.49L766.99 327.68L766.99 328.68L739.28 325.49ZM692.49 324.2L715.3 327.09L715.3 328.09L692.49 325.2ZM670.34 324.2L691.14 326.97L691.14 327.97L670.34 325.2ZM649.19 324.34L668 326.98L668 327.98L649.19 325.34ZM628.07 324.5L644.88 327L644.88 328L628.07 325.5ZM606.68 324.63L622.48 327.13L622.48 328.13L606.68 325.63ZM585.34 324.8L601.11 327.45L601.11 328.45L585.34 325.8ZM565.03 325.17L578.8 327.65L578.8 328.65L565.03 326.17ZM523.9 325.99L535.63 328.45L535.63 329.45L523.9 326.99ZM503.36 326.52L514.08 328.97L514.08 329.97L503.36 327.52ZM482.57 327.08L492.27 329.52L492.27 330.52L482.57 328.08ZM460.66 327.46L470.29 330.15L470.29 331.15L460.66 328.46ZM439.51 328.17L448.1 330.86L448.1 331.86L439.51 329.17ZM418.17 329.02L425.7 331.7L425.7 332.7L418.17 330.02ZM395.48 329.57L401.94 332.25L401.94 333.25L395.48 330.57ZM350 331.42L355.11 334.56L355.11 335.56L350 332.42ZM326.5 332.62L330.39 335.77L330.39 336.77L326.5 333.62ZM302.23 333.91L304.8 336.97L303.8 336.97L301.23 333.91ZM276.57 334.14L278.21 337.77L277.21 337.77L275.57 334.14ZM250.8 335.4L251.03 339.37L250.03 339.37L249.8 335.4ZM224.09 336.51L222.82 340.3L221.82 340.3L223.09 336.51ZM193.91 341.2L191.56 344.43L190.56 344.43L192.91 341.2ZM125.92 347.48L132.57 343.09L132.57 344.09L125.92 348.48ZM90.81 349.5L101.35 343.97L101.35 344.97L90.81 350.5ZM53.55 351.76L64.38 347.05L64.38 348.05L53.55 352.76ZM14.15 354.16L29.03 348.63L29.03 349.63L14.15 355.16Z"/>
<path fill="#616161" fill-opacity="0.099" d="M1273.37 349.19L1357 355.82L1357 356.82L1273.37 350.19ZM1145.99 341.38L1345.06 357.67L1345.06 358.67L1145.99 342.38ZM1070.42 337.43L1177.89 346.52L1177.89 347.52L1070.42 338.43ZM963.13 332.67L1022.81 338.07L1022.81 339.07L963.13 333.67ZM919.46 330.96L971.17 335.81L971.17 336.81L919.46 331.96ZM883.74 329.89L927.48 334.16L927.48 335.16L883.74 330.89ZM852 329.15L887.78 332.77L887.78 333.77L852 330.15ZM820.25 328.34L852.06 331.7L852.06 332.7L820.25 329.34ZM792.47 327.9L820.3 330.96L820.3 331.96L792.47 328.9ZM766.99 327.68L790.75 330.41L790.75 331.41L766.99 328.68ZM715.3 327.09L736.13 329.72L736.13 330.72L715.3 328.09ZM691.14 326.97L709.97 329.47L709.97 330.47L691.14 327.97ZM668 326.98L685.82 329.48L685.82 330.48L668 327.98ZM644.88 327L661.69 329.5L661.69 330.5L644.88 328ZM622.48 327.13L638.27 329.62L638.27 330.62L622.48 328.13ZM601.11 327.45L614.91 329.77L614.91 330.77L601.11 328.45ZM578.8 327.65L592.58 330.13L592.58 331.13L578.8 328.65ZM535.63 328.45L547.37 330.91L547.37 331.91L535.63 329.45ZM514.08 328.97L524.8 331.42L524.8 332.42L514.08 329.97ZM492.27 329.52L501.96 331.96L501.96 332.96L492.27 330.52ZM470.29 330.15L478.95 332.56L478.95 333.56L470.29 331.15ZM448.1 330.86L455.73 333.25L455.73 334.25L448.1 331.86ZM425.7 331.7L432.3 334.05L432.3 335.05L425.7 332.7ZM401.94 332.25L408.41 334.93L408.41 335.93L401.94 333.25ZM355.11 334.56L359.36 337.18L359.36 338.18L355.11 335.56ZM330.39 335.77L333.49 338.28L333.49 339.28L330.39 336.77ZM304.8 336.97L307.37 340.03L306.37 340.03L303.8 336.97ZM278.21 337.77L279.84 341.4L278.84 341.4L277.21 337.77ZM251.03 339.37L251.26 343.35L250.26 343.35L250.03 339.37ZM222.82 340.3L221.56 344.08L220.56 344.08L221.82 340.3ZM191.56 344.43L189.21 347.66L188.21 347.66L190.56 344.43ZM122.6 349.68L125.92 347.48L125.92 348.48L122.6 350.68ZM83.79 353.19L90.81 349.5L90.81 350.5L83.79 354.19ZM46.32 354.91L53.55 351.76L53.55 352.76L46.32 355.91ZM3 358.3L14.15 354.16L14.15 355.16L3 359.3Z"/>
<path fill="#616161" fill-opacity="0.115" d="M1345.06 357.67L1357 358.65L1357 359.65L1345.06 358.67ZM1177.89 346.52L1357 361.66L1357 362.66L1177.89 347.52ZM1022.81 338.07L1094.42 344.56L1094.42 345.56L1022.81 339.07ZM971.17 335.81L1026.85 341.04L1026.85 342.04L971.17 336.81ZM927.48 334.16L971.23 338.42L971.23 339.42L927.48 335.16ZM887.78 332.77L923.57 336.4L923.57 337.4L887.78 333.77ZM852.06 331.7L883.86 335.05L883.86 336.05L852.06 332.7ZM820.3 330.96L848.13 334.03L848.13 335.03L820.3 331.96ZM790.75 330.41L814.51 333.15L814.51 334.15L790.75 331.41ZM736.13 329.72L756.96 332.36L756.96 333.36L736.13 330.72ZM709.97 329.47L728.8 331.98L728.8 332.98L709.97 330.47ZM685.82 329.48L702.65 331.85L702.65 332.85L685.82 330.48ZM661.69 329.5L677.52 331.85L677.52 332.85L661.69 330.5ZM638.27 329.62L653.08 331.96L653.08 332.96L638.27 330.62ZM614.91 329.77L628.7 332.09L628.7 333.09L614.91 330.77ZM592.58 330.13L604.38 332.26L604.38 333.26L592.58 331.13ZM547.37 330.91L557.14 332.97L557.14 333.97L547.37 331.91ZM524.8 331.42L534.55 333.65L534.55 334.65L524.8 332.42ZM501.96 331.96L510.69 334.15L510.69 335.15L501.96 332.96ZM478.95 332.56L486.66 334.71L486.66 335.71L478.95 333.56ZM455.73 333.25L463.35 335.63L463.35 336.63L455.73 334.25ZM432.3 334.05L438.89 336.4L438.89 337.4L432.3 335.05ZM408.41 334.93L413.95 337.23L413.95 338.23L408.41 335.93ZM359.36 337.18L362.77 339.27L362.77 340.27L359.36 338.18ZM333.49 338.28L336.6 340.8L336.6 341.8L333.49 339.28ZM307.37 340.03L309.3 342.32L308.3 342.32L306.37 340.03ZM279.84 341.4L281.47 345.03L280.47 345.03L278.84 341.4ZM251.26 343.35L251.49 347.33L250.49 347.33L250.26 343.35ZM221.56 344.08L220.29 347.86L219.29 347.86L220.56 344.08ZM189.21 347.66L186.86 350.89L185.86 350.89L188.21 347.66ZM115.95 354.08L122.6 349.68L122.6 350.68L115.95 355.08ZM76.76 356.87L83.79 353.19L83.79 354.19L76.76 357.87ZM35.49 359.62L46.32 354.91L46.32 355.91L35.49 360.62Z"/>
<path fill="#616161" fill-opacity="0.130" d="M1094.42 344.56L1193.88 353.56L1193.88 354.56L1094.42 345.56ZM1026.85 341.04L1090.5 347.02L1090.5 348.02L1026.85 342.04ZM971.23 338.42L1022.93 343.46L1022.93 344.46L971.23 339.42ZM923.57 336.4L967.31 340.84L967.31 341.84L923.57 337.4ZM883.86 335.05L919.65 338.83L919.65 339.83L883.86 336.05ZM848.13 334.03L879.94 337.53L879.94 338.53L848.13 335.03ZM814.51 333.15L842.23 336.34L842.23 337.34L814.51 334.15ZM756.96 332.36L776.79 334.87L776.79 335.87L756.96 333.36ZM728.8 331.98L747.62 334.49L747.62 335.49L728.8 332.98ZM702.65 331.85L719.48 334.21L719.48 335.21L702.65 332.85ZM677.52 331.85L693.34 334.2L693.34 335.2L677.52 332.85ZM653.08 331.96L666.9 334.14L666.9 335.14L653.08 332.96ZM628.7 332.09L641.51 334.25L641.51 335.25L628.7 333.09ZM604.38 332.26L616.19 334.39L616.19 335.39L604.38 333.26ZM557.14 332.97L567.9 335.22L567.9 336.22L557.14 333.97ZM534.55 333.65L543.32 335.65L543.32 336.65L534.55 334.65ZM510.69 334.15L519.41 336.34L519.41 337.34L510.69 335.15ZM486.66 334.71L494.36 336.85L494.36 337.85L486.66 335.71ZM463.35 335.63L470.03 337.72L470.03 338.72L463.35 336.63ZM438.89 336.4L445.48 338.76L445.48 339.76L438.89 337.4ZM413.95 337.23L419.49 339.53L419.49 340.53L413.95 338.23ZM362.77 339.27L367.03 341.89L367.03 342.89L362.77 340.27ZM336.6 340.8L339.71 343.32L339.71 344.32L336.6 341.8ZM309.3 342.32L311.88 345.38L310.88 345.38L308.3 342.32ZM281.47 345.03L283.1 348.66L282.1 348.66L280.47 345.03ZM220.29 347.86L219.02 351.65L218.02 351.65L219.29 347.86ZM186.86 350.89L184.51 354.12L183.51 354.12L185.86 350.89ZM109.31 358.47L115.95 354.08L115.95 355.08L109.31 359.47ZM69.74 360.56L76.76 356.87L76.76 357.87L69.74 361.56ZM24.66 364.34L35.49 359.62L35.49 360.62L24.66 365.34Z"/>
<path fill="#616161" fill-opacity="0.145" d="M1193.88 353.56L1357 368.34L1357 369.34L1193.88 354.56ZM1090.5 347.02L1181.98 355.61L1181.98 356.61L1090.5 348.02ZM1022.93 343.46L1082.59 349.28L1082.59 350.28L1022.93 344.46ZM967.31 340.84L1011.05 345.27L1011.05 346.27L967.31 341.84ZM919.65 338.83L955.43 342.61L955.43 343.61L919.65 339.83ZM879.94 337.53L907.76 340.59L907.76 341.59L879.94 338.53ZM842.23 336.34L869.95 339.53L869.95 340.53L842.23 337.34ZM776.79 334.87L797.62 337.5L797.62 338.5L776.79 335.87ZM747.62 334.49L766.45 336.99L766.45 337.99L747.62 335.49ZM719.48 334.21L736.31 336.57L736.31 337.57L719.48 335.21ZM693.34 334.2L708.18 336.41L708.18 337.41L693.34 335.2ZM666.9 334.14L680.72 336.32L680.72 337.32L666.9 335.14ZM641.51 334.25L654.33 336.41L654.33 337.41L641.51 335.25ZM616.19 334.39L627.99 336.51L627.99 337.51L616.19 335.39ZM567.9 335.22L577.68 337.28L577.68 338.28L567.9 336.22ZM543.32 335.65L552.09 337.66L552.09 338.66L543.32 336.65ZM519.41 336.34L527.17 338.29L527.17 339.29L519.41 337.34ZM494.36 336.85L502.06 339L502.06 340L494.36 337.85ZM470.03 337.72L476.71 339.81L476.71 340.81L470.03 338.72ZM445.48 338.76L451.13 340.77L451.13 341.77L445.48 339.76ZM419.49 339.53L425.04 341.83L425.04 342.83L419.49 340.53ZM367.03 341.89L370.43 343.98L370.43 344.98L367.03 342.89ZM339.71 343.32L342.82 345.84L342.82 346.84L339.71 344.32ZM311.88 345.38L313.81 347.67L312.81 347.67L310.88 345.38ZM251.49 347.33L251.71 351.3L250.71 351.3L250.49 347.33ZM184.51 354.12L182.16 357.35L181.16 357.35L183.51 354.12ZM105.99 360.67L109.31 358.47L109.31 359.47L105.99 361.67ZM62.71 364.25L69.74 360.56L69.74 361.56L62.71 365.25ZM17.44 367.48L24.66 364.34L24.66 365.34L17.44 368.48Z"/>
<path fill="#616161" fill-opacity="0.160" d="M1181.98 355.61L1349.04 371.29L1349.04 372.29L1181.98 356.61ZM1082.59 349.28L1162.13 357.03L1162.13 358.03L1082.59 350.28ZM1011.05 345.27L1066.72 350.91L1066.72 351.91L1011.05 346.27ZM955.43 342.61L995.19 346.8L995.19 347.8L955.43 343.61ZM907.76 340.59L943.54 344.53L943.54 345.53L907.76 341.59ZM869.95 339.53L897.67 342.72L897.67 343.72L869.95 340.53ZM797.62 337.5L818.45 340.14L818.45 341.14L797.62 338.5ZM766.45 336.99L785.27 339.5L785.27 340.5L766.45 337.99ZM736.31 336.57L753.14 338.94L753.14 339.94L736.31 337.57ZM708.18 336.41L723.02 338.61L723.02 339.61L708.18 337.41ZM680.72 336.32L694.55 338.5L694.55 339.5L680.72 337.32ZM654.33 336.41L667.14 338.56L667.14 339.56L654.33 337.41ZM627.99 336.51L639.8 338.64L639.8 339.64L627.99 337.51ZM577.68 337.28L587.46 339.33L587.46 340.33L577.68 338.28ZM552.09 337.66L560.86 339.66L560.86 340.66L552.09 338.66ZM527.17 338.29L534.92 340.24L534.92 341.24L527.17 339.29ZM502.06 339L509.76 341.15L509.76 342.15L502.06 340ZM476.71 339.81L483.38 341.9L483.38 342.9L476.71 340.81ZM451.13 340.77L456.78 342.79L456.78 343.79L451.13 341.77ZM425.04 341.83L429.65 343.74L429.65 344.74L425.04 342.83ZM370.43 343.98L374.69 346.6L374.69 347.6L370.43 344.98ZM342.82 345.84L345.15 347.72L345.15 348.72L342.82 346.84ZM313.81 347.67L315.74 349.96L314.74 349.96L312.81 347.67ZM283.1 348.66L284.73 352.29L283.73 352.29L282.1 348.66ZM251.71 351.3L251.94 355.28L250.94 355.28L250.71 351.3ZM219.02 351.65L217.75 355.43L216.75 355.43L218.02 351.65ZM99.34 365.06L105.99 360.67L105.99 361.67L99.34 366.06ZM55.69 367.94L62.71 364.25L62.71 365.25L55.69 368.94ZM6.61 372.2L17.44 367.48L17.44 368.48L6.61 373.2Z"/>
<path fill="#616161" fill-opacity="0.175" d="M1349.04 371.29L1357 372.04L1357 373.04L1349.04 372.29ZM1162.13 357.03L1289.39 369.44L1289.39 370.44L1162.13 358.03ZM1066.72 350.91L1134.32 357.76L1134.32 358.76L1066.72 351.91ZM995.19 346.8L1042.9 351.84L1042.9 352.84L995.19 347.8ZM943.54 344.53L979.32 348.47L979.32 349.47L943.54 345.53ZM897.67 342.72L925.39 345.91L925.39 346.91L897.67 343.72ZM818.45 340.14L840.27 342.9L840.27 343.9L818.45 341.14ZM785.27 339.5L804.1 342.01L804.1 343.01L785.27 340.5ZM753.14 338.94L769.97 341.3L769.97 342.3L753.14 339.94ZM723.02 338.61L738.84 340.96L738.84 341.96L723.02 339.61ZM694.55 338.5L708.37 340.69L708.37 341.69L694.55 339.5ZM667.14 338.56L678.96 340.55L678.96 341.55L667.14 339.56ZM639.8 338.64L650.62 340.59L650.62 341.59L639.8 339.64ZM587.46 339.33L596.26 341.17L596.26 342.17L587.46 340.33ZM560.86 339.66L569.63 341.67L569.63 342.67L560.86 340.66ZM534.92 340.24L542.68 342.18L542.68 343.18L534.92 341.24ZM509.76 341.15L516.5 343.02L516.5 344.02L509.76 342.15ZM483.38 341.9L490.06 343.99L490.06 344.99L483.38 342.9ZM456.78 342.79L462.43 344.8L462.43 345.8L456.78 343.79ZM429.65 343.74L435.2 346.04L435.2 347.04L429.65 344.74ZM374.69 346.6L378.09 348.69L378.09 349.69L374.69 347.6ZM345.15 347.72L348.25 350.24L348.25 351.24L345.15 348.72ZM315.74 349.96L317.67 352.25L316.67 352.25L314.74 349.96ZM284.73 352.29L286.36 355.92L285.36 355.92L283.73 352.29ZM217.75 355.43L216.48 359.21L215.48 359.21L216.75 355.43ZM182.16 357.35L179.81 360.59L178.81 360.59L181.16 357.35ZM96.02 367.26L99.34 365.06L99.34 366.06L96.02 368.26ZM48.66 371.63L55.69 367.94L55.69 368.94L48.66 372.63ZM3 373.77L6.61 372.2L6.61 373.2L3 374.77Z"/>
<path fill="#616161" fill-opacity="0.189" d="M1289.39 369.44L1357 376.03L1357 377.03L1289.39 370.44ZM1134.32 357.76L1229.75 367.44L1229.75 368.44L1134.32 358.76ZM1042.9 351.84L1102.54 358.14L1102.54 359.14L1042.9 352.84ZM979.32 348.47L1019.08 352.85L1019.08 353.85L979.32 349.47ZM925.39 345.91L957.06 349.55L957.06 350.55L925.39 346.91ZM840.27 342.9L863.08 345.78L863.08 346.78L840.27 343.9ZM804.1 342.01L822.93 344.51L822.93 345.51L804.1 343.01ZM769.97 341.3L786.79 343.67L786.79 344.67L769.97 342.3ZM738.84 340.96L753.68 343.17L753.68 344.17L738.84 341.96ZM708.37 340.69L722.19 342.87L722.19 343.87L708.37 341.69ZM678.96 340.55L691.78 342.71L691.78 343.71L678.96 341.55ZM650.62 340.59L662.43 342.72L662.43 343.72L650.62 341.59ZM596.26 341.17L606.04 343.23L606.04 344.23L596.26 342.17ZM569.63 341.67L578.4 343.68L578.4 344.68L569.63 342.67ZM542.68 342.18L550.43 344.13L550.43 345.13L542.68 343.18ZM516.5 343.02L523.24 344.9L523.24 345.9L516.5 344.02ZM490.06 343.99L495.78 345.78L495.78 346.78L490.06 344.99ZM462.43 344.8L468.08 346.82L468.08 347.82L462.43 345.8ZM435.2 346.04L439.81 347.96L439.81 348.96L435.2 347.04ZM378.09 348.69L381.5 350.79L381.5 351.79L378.09 349.69ZM348.25 350.24L350.58 352.13L350.58 353.13L348.25 351.24ZM317.67 352.25L319.6 354.55L318.6 354.55L316.67 352.25ZM251.94 355.28L252.17 359.25L251.17 359.25L250.94 355.28ZM216.48 359.21L215.22 363L214.22 363L215.48 359.21ZM179.81 360.59L177.45 363.82L176.45 363.82L178.81 360.59ZM89.38 371.65L96.02 367.26L96.02 368.26L89.38 372.65ZM41.64 375.32L48.66 371.63L48.66 372.63L41.64 376.32Z"/>
<path fill="#616161" fill-opacity="0.203" d="M1229.75 367.44L1357 380.33L1357 381.33L1229.75 368.44ZM1102.54 358.14L1178.08 366.11L1178.08 367.11L1102.54 359.14ZM1019.08 352.85L1066.79 358.1L1066.79 359.1L1019.08 353.85ZM957.06 349.55L992.7 353.65L992.7 354.65L957.06 350.55ZM863.08 345.78L886.88 348.79L886.88 349.79L863.08 346.78ZM822.93 344.51L843.74 347.28L843.74 348.28L822.93 345.51ZM786.79 343.67L804.61 346.17L804.61 347.17L786.79 344.67ZM753.68 343.17L768.51 345.37L768.51 346.37L753.68 344.17ZM722.19 342.87L735.02 344.89L735.02 345.89L722.19 343.87ZM691.78 342.71L703.6 344.7L703.6 345.7L691.78 343.71ZM662.43 342.72L673.25 344.67L673.25 345.67L662.43 343.72ZM606.04 343.23L614.84 345.07L614.84 346.07L606.04 344.23ZM578.4 343.68L586.19 345.46L586.19 346.46L578.4 344.68ZM550.43 344.13L558.19 346.08L558.19 347.08L550.43 345.13ZM523.24 344.9L529.98 346.78L529.98 347.78L523.24 345.9ZM495.78 345.78L501.5 347.57L501.5 348.57L495.78 346.78ZM468.08 346.82L473.73 348.83L473.73 349.83L468.08 347.82ZM439.81 347.96L444.43 349.87L444.43 350.87L439.81 348.96ZM381.5 350.79L384.9 352.88L384.9 353.88L381.5 351.79ZM350.58 352.13L353.69 354.65L353.69 355.65L350.58 353.13ZM319.6 354.55L321.53 356.84L320.53 356.84L318.6 354.55ZM286.36 355.92L288 359.54L287 359.54L285.36 355.92ZM252.17 359.25L252.4 363.23L251.4 363.23L251.17 359.25ZM177.45 363.82L175.1 367.05L174.1 367.05L176.45 363.82ZM86.05 373.85L89.38 371.65L89.38 372.65L86.05 374.85ZM34.61 379.01L41.64 375.32L41.64 376.32L34.61 380.01Z"/>
<path fill="#616161" fill-opacity="0.217" d="M1178.08 366.11L1301.34 379.12L1301.34 380.12L1178.08 367.11ZM1066.79 358.1L1126.42 364.67L1126.42 365.67L1066.79 359.1ZM992.7 353.65L1036.26 358.67L1036.26 359.67L992.7 354.65ZM886.88 348.79L911.68 351.93L911.68 352.93L886.88 349.79ZM843.74 347.28L864.54 350.05L864.54 351.05L843.74 348.28ZM804.61 346.17L822.43 348.67L822.43 349.67L804.61 347.17ZM768.51 345.37L784.34 347.73L784.34 348.73L768.51 346.37ZM735.02 344.89L749.83 347.23L749.83 348.23L735.02 345.89ZM703.6 344.7L716.41 346.85L716.41 347.85L703.6 345.7ZM673.25 344.67L684.07 346.62L684.07 347.62L673.25 345.67ZM614.84 345.07L623.64 346.92L623.64 347.92L614.84 346.07ZM586.19 345.46L594.96 347.46L594.96 348.46L586.19 346.46ZM558.19 346.08L565.94 348.03L565.94 349.03L558.19 347.08ZM529.98 346.78L536.72 348.66L536.72 349.66L529.98 347.78ZM501.5 347.57L508.18 349.66L508.18 350.66L501.5 348.57ZM473.73 348.83L478.44 350.51L478.44 351.51L473.73 349.83ZM444.43 349.87L449.05 351.79L449.05 352.79L444.43 350.87ZM384.9 352.88L388.31 354.97L388.31 355.97L384.9 353.88ZM353.69 354.65L356.02 356.54L356.02 357.54L353.69 355.65ZM321.53 356.84L323.46 359.13L322.46 359.13L320.53 356.84ZM288 359.54L289.63 363.17L288.63 363.17L287 359.54ZM215.22 363L213.95 366.78L212.95 366.78L214.22 363ZM175.1 367.05L172.75 370.28L171.75 370.28L174.1 367.05ZM82.73 376.04L86.05 373.85L86.05 374.85L82.73 377.04ZM31.1 380.85L34.61 379.01L34.61 380.01L31.1 381.85Z"/>
<path fill="#616161" fill-opacity="0.231" d="M1301.34 379.12L1357 384.99L1357 385.99L1301.34 380.12ZM1126.42 364.67L1209.91 373.86L1209.91 374.86L1126.42 365.67ZM1036.26 358.67L1083.78 364.14L1083.78 365.14L1036.26 359.67ZM911.68 351.93L938.46 355.32L938.46 356.32L911.68 352.93ZM864.54 350.05L886.34 352.95L886.34 353.95L864.54 351.05ZM822.43 348.67L841.24 351.31L841.24 352.31L822.43 349.67ZM784.34 347.73L801.15 350.23L801.15 351.23L784.34 348.73ZM749.83 347.23L763.65 349.41L763.65 350.41L749.83 348.23ZM716.41 346.85L728.24 348.84L728.24 349.84L716.41 347.85ZM684.07 346.62L695.88 348.74L695.88 349.74L684.07 347.62ZM623.64 346.92L633.41 348.97L633.41 349.97L623.64 347.92ZM594.96 347.46L602.76 349.25L602.76 350.25L594.96 348.46ZM565.94 348.03L572.73 349.73L572.73 350.73L565.94 349.03ZM536.72 348.66L543.46 350.54L543.46 351.54L536.72 349.66ZM508.18 349.66L513.9 351.45L513.9 352.45L508.18 350.66ZM478.44 350.51L484.09 352.53L484.09 353.53L478.44 351.51ZM449.05 351.79L453.67 353.7L453.67 354.7L449.05 352.79ZM388.31 354.97L391.72 357.07L391.72 358.07L388.31 355.97ZM356.02 356.54L358.35 358.42L358.35 359.42L356.02 357.54ZM323.46 359.13L325.39 361.42L324.39 361.42L322.46 359.13ZM252.4 363.23L252.62 367.21L251.62 367.21L251.4 363.23ZM213.95 366.78L212.68 370.56L211.68 370.56L212.95 366.78ZM172.75 370.28L170.4 373.51L169.4 373.51L171.75 370.28ZM76.09 380.44L82.73 376.04L82.73 377.04L76.09 381.44ZM24.07 384.54L31.1 380.85L31.1 381.85L24.07 385.54Z"/>
<path fill="#616161" fill-opacity="0.245" d="M1209.91 373.86L1357 390.06L1357 391.06L1209.91 374.86ZM1083.78 364.14L1143.17 370.97L1143.17 371.97L1083.78 365.14ZM938.46 355.32L968.21 359.08L968.21 360.08L938.46 356.32ZM886.34 352.95L910.12 356.12L910.12 357.12L886.34 353.95ZM841.24 351.31L861.04 354.09L861.04 355.09L841.24 352.31ZM801.15 350.23L816.98 352.58L816.98 353.58L801.15 351.23ZM763.65 349.41L777.48 351.6L777.48 352.6L763.65 350.41ZM728.24 348.84L741.05 351L741.05 352L728.24 349.84ZM695.88 348.74L706.7 350.69L706.7 351.69L695.88 349.74ZM633.41 348.97L642.21 350.82L642.21 351.82L633.41 349.97ZM602.76 349.25L611.53 351.25L611.53 352.25L602.76 350.25ZM572.73 349.73L580.49 351.68L580.49 352.68L572.73 350.73ZM543.46 350.54L550.2 352.42L550.2 353.42L543.46 351.54ZM513.9 351.45L519.62 353.24L519.62 354.24L513.9 352.45ZM484.09 352.53L489.74 354.54L489.74 355.54L484.09 353.53ZM453.67 353.7L458.29 355.62L458.29 356.62L453.67 354.7ZM391.72 357.07L394.27 358.64L394.27 359.64L391.72 358.07ZM358.35 358.42L361.46 360.94L361.46 361.94L358.35 359.42ZM325.39 361.42L327.32 363.72L326.32 363.72L324.39 361.42ZM289.63 363.17L291.26 366.8L290.26 366.8L288.63 363.17ZM170.4 373.51L168.05 376.74L167.05 376.74L169.4 373.51ZM72.77 382.63L76.09 380.44L76.09 381.44L72.77 383.63ZM17.05 388.23L24.07 384.54L24.07 385.54L17.05 389.23Z"/>
<path fill="#616161" fill-opacity="0.258" d="M1143.17 370.97L1230.29 381L1230.29 382L1143.17 371.97ZM968.21 359.08L1000.94 363.22L1000.94 364.22L968.21 360.08ZM910.12 356.12L934.89 359.42L934.89 360.42L910.12 357.12ZM861.04 354.09L881.83 357.01L881.83 358.01L861.04 355.09ZM816.98 352.58L834.78 355.22L834.78 356.22L816.98 353.58ZM777.48 351.6L793.27 354.09L793.27 355.09L777.48 352.6ZM741.05 351L754.85 353.32L754.85 354.32L741.05 352ZM706.7 350.69L718.5 352.82L718.5 353.82L706.7 351.69ZM642.21 350.82L651.02 352.66L651.02 353.66L642.21 351.82ZM611.53 351.25L619.33 353.03L619.33 354.03L611.53 352.25ZM580.49 351.68L588.24 353.63L588.24 354.63L580.49 352.68ZM550.2 352.42L556.94 354.29L556.94 355.29L550.2 353.42ZM519.62 353.24L526.3 355.33L526.3 356.33L519.62 354.24ZM489.74 354.54L494.45 356.22L494.45 357.22L489.74 355.54ZM458.29 355.62L462.91 357.53L462.91 358.53L458.29 356.62ZM394.27 358.64L397.68 360.73L397.68 361.73L394.27 359.64ZM361.46 360.94L363.79 362.83L363.79 363.83L361.46 361.94ZM327.32 363.72L329.25 366.01L328.25 366.01L326.32 363.72ZM252.62 367.21L252.85 371.18L251.85 371.18L251.62 367.21ZM212.68 370.56L211.41 374.35L210.41 374.35L211.68 370.56ZM66.12 387.03L72.77 382.63L72.77 383.63L66.12 388.03ZM10.02 391.91L17.05 388.23L17.05 389.23L10.02 392.91Z"/>
<path fill="#616161" fill-opacity="0.272" d="M1230.29 381L1357 395.58L1357 396.58L1230.29 382ZM1000.94 363.22L1038.63 367.99L1038.63 368.99L1000.94 364.22ZM934.89 359.42L962.64 363.11L962.64 364.11L934.89 360.42ZM881.83 357.01L903.61 360.07L903.61 361.07L881.83 358.01ZM834.78 355.22L852.58 357.87L852.58 358.87L834.78 356.22ZM793.27 354.09L808.08 356.43L808.08 357.43L793.27 355.09ZM754.85 353.32L767.66 355.48L767.66 356.48L754.85 354.32ZM718.5 352.82L730.31 354.95L730.31 355.95L718.5 353.82ZM651.02 352.66L660.79 354.72L660.79 355.72L651.02 353.66ZM619.33 353.03L628.1 355.04L628.1 356.04L619.33 354.03ZM588.24 353.63L595.03 355.33L595.03 356.33L588.24 354.63ZM556.94 354.29L563.68 356.17L563.68 357.17L556.94 355.29ZM526.3 355.33L532.02 357.12L532.02 358.12L526.3 356.33ZM494.45 356.22L500.1 358.24L500.1 359.24L494.45 357.22ZM462.91 357.53L467.52 359.45L467.52 360.45L462.91 358.53ZM397.68 360.73L401.08 362.83L401.08 363.83L397.68 361.73ZM363.79 362.83L366.12 364.72L366.12 365.72L363.79 363.83ZM329.25 366.01L330.54 367.54L329.54 367.54L328.25 366.01ZM291.26 366.8L292.89 370.43L291.89 370.43L290.26 366.8ZM252.85 371.18L253.08 375.16L252.08 375.16L251.85 371.18ZM211.41 374.35L210.14 378.13L209.14 378.13L210.41 374.35ZM168.05 376.74L165.7 379.97L164.7 379.97L167.05 376.74ZM62.8 389.23L66.12 387.03L66.12 388.03L62.8 390.23ZM3 395.6L10.02 391.91L10.02 392.91L3 396.6Z"/>
<path fill="#616161" fill-opacity="0.285" d="M1038.63 367.99L1083.26 373.64L1083.26 374.64L1038.63 368.99ZM962.64 363.11L994.35 367.33L994.35 368.33L962.64 364.11ZM903.61 360.07L927.37 363.41L927.37 364.41L903.61 361.07ZM852.58 357.87L872.36 360.81L872.36 361.81L852.58 358.87ZM808.08 356.43L824.86 359.08L824.86 360.08L808.08 357.43ZM767.66 355.48L781.46 357.8L781.46 358.8L767.66 356.48ZM730.31 354.95L742.12 357.08L742.12 358.08L730.31 355.95ZM660.79 354.72L670.57 356.77L670.57 357.77L660.79 355.72ZM628.1 355.04L635.89 356.82L635.89 357.82L628.1 356.04ZM595.03 355.33L602.78 357.28L602.78 358.28L595.03 356.33ZM563.68 356.17L570.42 358.05L570.42 359.05L563.68 357.17ZM532.02 357.12L537.75 358.91L537.75 359.91L532.02 358.12ZM500.1 358.24L505.75 360.25L505.75 361.25L500.1 359.24ZM467.52 359.45L472.14 361.36L472.14 362.36L467.52 360.45ZM401.08 362.83L404.49 364.92L404.49 365.92L401.08 363.83ZM366.12 364.72L369.23 367.24L369.23 368.24L366.12 365.72ZM330.54 367.54L332.47 369.83L331.47 369.83L329.54 367.54ZM292.89 370.43L294.52 374.06L293.52 374.06L291.89 370.43ZM165.7 379.97L163.35 383.2L162.35 383.2L164.7 379.97ZM56.16 393.62L62.8 389.23L62.8 390.23L56.16 394.62Z"/>
<path fill="#616161" fill-opacity="0.298" d="M1083.26 373.64L1140.79 380.92L1140.79 381.92L1083.26 374.64ZM994.35 367.33L1030.02 372.08L1030.02 373.08L994.35 368.33ZM927.37 363.41L953.1 367.02L953.1 368.02L927.37 364.41ZM872.36 360.81L893.13 363.9L893.13 364.9L872.36 361.81ZM824.86 359.08L841.65 361.73L841.65 362.73L824.86 360.08ZM781.46 357.8L796.24 360.29L796.24 361.29L781.46 358.8ZM742.12 357.08L754.91 359.38L754.91 360.38L742.12 358.08ZM670.57 356.77L679.37 358.61L679.37 359.61L670.57 357.77ZM635.89 356.82L644.66 358.83L644.66 359.83L635.89 357.82ZM602.78 357.28L610.54 359.23L610.54 360.23L602.78 358.28ZM570.42 358.05L577.16 359.93L577.16 360.93L570.42 359.05ZM537.75 358.91L543.47 360.7L543.47 361.7L537.75 359.91ZM505.75 360.25L510.45 361.93L510.45 362.93L505.75 361.25ZM472.14 361.36L476.76 363.28L476.76 364.28L472.14 362.36ZM404.49 364.92L407.89 367.01L407.89 368.01L404.49 365.92ZM369.23 367.24L371.56 369.12L371.56 370.12L369.23 368.24ZM332.47 369.83L334.4 372.12L333.4 372.12L331.47 369.83ZM253.08 375.16L253.31 379.14L252.31 379.14L252.08 375.16ZM210.14 378.13L208.88 381.91L207.88 381.91L209.14 378.13ZM163.35 383.2L161 386.44L160 386.44L162.35 383.2ZM49.51 398.01L56.16 393.62L56.16 394.62L49.51 399.01Z"/>
<path fill="#616161" fill-opacity="0.311" d="M1140.79 380.92L1221.12 391.08L1221.12 392.08L1140.79 381.92ZM1030.02 372.08L1072.62 377.75L1072.62 378.75L1030.02 373.08ZM953.1 367.02L982.8 371.2L982.8 372.2L953.1 368.02ZM893.13 363.9L914.89 367.13L914.89 368.13L893.13 364.9ZM841.65 361.73L859.42 364.53L859.42 365.53L841.65 362.73ZM796.24 360.29L811.02 362.77L811.02 363.77L796.24 361.29ZM754.91 359.38L767.69 361.68L767.69 362.68L754.91 360.38ZM679.37 358.61L690.13 360.87L690.13 361.87L679.37 359.61ZM644.66 358.83L653.43 360.83L653.43 361.83L644.66 359.83ZM610.54 359.23L618.29 361.18L618.29 362.18L610.54 360.23ZM577.16 359.93L583.9 361.81L583.9 362.81L577.16 360.93ZM543.47 360.7L550.14 362.79L550.14 363.79L543.47 361.7ZM510.45 361.93L516.1 363.94L516.1 364.94L510.45 362.93ZM476.76 363.28L481.38 365.19L481.38 366.19L476.76 364.28ZM407.89 367.01L411.3 369.11L411.3 370.11L407.89 368.01ZM371.56 369.12L374.67 371.64L374.67 372.64L371.56 370.12ZM334.4 372.12L336.33 374.41L335.33 374.41L333.4 372.12ZM294.52 374.06L296.16 377.69L295.16 377.69L293.52 374.06ZM208.88 381.91L207.61 385.7L206.61 385.7L207.88 381.91ZM161 386.44L158.65 389.67L157.65 389.67L160 386.44ZM46.19 400.21L49.51 398.01L49.51 399.01L46.19 401.21Z"/>
<path fill="#616161" fill-opacity="0.323" d="M1221.12 391.08L1357 408.27L1357 409.27L1221.12 392.08ZM1072.62 377.75L1125.14 384.74L1125.14 385.74L1072.62 378.75ZM982.8 371.2L1016.46 375.92L1016.46 376.92L982.8 372.2ZM914.89 367.13L939.62 370.81L939.62 371.81L914.89 368.13ZM859.42 364.53L879.16 367.65L879.16 368.65L859.42 365.53ZM811.02 362.77L827.78 365.59L827.78 366.59L811.02 363.77ZM767.69 361.68L781.47 364.17L781.47 365.17L767.69 362.68ZM690.13 360.87L699.91 362.92L699.91 363.92L690.13 361.87ZM653.43 360.83L662.2 362.84L662.2 363.84L653.43 361.83ZM618.29 361.18L627.02 363.37L627.02 364.37L618.29 362.18ZM583.9 361.81L591.6 363.95L591.6 364.95L583.9 362.81ZM550.14 362.79L556.82 364.88L556.82 365.88L550.14 363.79ZM516.1 363.94L521.75 365.96L521.75 366.96L516.1 364.94ZM481.38 365.19L486.92 367.49L486.92 368.49L481.38 366.19ZM411.3 369.11L414.7 371.2L414.7 372.2L411.3 370.11ZM374.67 371.64L377 373.53L377 374.53L374.67 372.64ZM336.33 374.41L338.26 376.71L337.26 376.71L335.33 374.41ZM296.16 377.69L297.79 381.32L296.79 381.32L295.16 377.69ZM253.31 379.14L253.53 383.11L252.53 383.11L252.31 379.14ZM207.61 385.7L206.34 389.48L205.34 389.48L206.61 385.7ZM158.65 389.67L156.3 392.9L155.3 392.9L157.65 389.67ZM39.54 404.6L46.19 400.21L46.19 401.21L39.54 405.6Z"/>
<path fill="#616161" fill-opacity="0.336" d="M1125.14 384.74L1199.45 394.63L1199.45 395.63L1125.14 385.74ZM1016.46 375.92L1056.06 381.49L1056.06 382.49L1016.46 376.92ZM939.62 370.81L967.31 374.93L967.31 375.93L939.62 371.81ZM879.16 367.65L899.9 370.92L899.9 371.92L879.16 368.65ZM827.78 365.59L844.53 368.41L844.53 369.41L827.78 366.59ZM781.47 364.17L796.23 366.82L796.23 367.82L781.47 365.17ZM699.91 362.92L710.66 365.18L710.66 366.18L699.91 363.92ZM662.2 362.84L671.95 365.07L671.95 366.07L662.2 363.84ZM627.02 363.37L634.77 365.32L634.77 366.32L627.02 364.37ZM591.6 363.95L598.34 365.83L598.34 366.83L591.6 364.95ZM556.82 364.88L562.54 366.67L562.54 367.67L556.82 365.88ZM521.75 365.96L527.4 367.98L527.4 368.98L521.75 366.96ZM486.92 367.49L491.54 369.41L491.54 370.41L486.92 368.49ZM414.7 371.2L418.11 373.29L418.11 374.29L414.7 372.2ZM377 373.53L380.11 376.05L380.11 377.05L377 374.53ZM338.26 376.71L340.19 379L339.19 379L337.26 376.71ZM253.53 383.11L253.76 387.09L252.76 387.09L252.53 383.11ZM156.3 392.9L153.95 396.13L152.95 396.13L155.3 392.9ZM32.9 409L39.54 404.6L39.54 405.6L32.9 410Z"/>
<path fill="#616161" fill-opacity="0.348" d="M1199.45 394.63L1332.23 412.31L1332.23 413.31L1199.45 395.63ZM1056.06 381.49L1105.56 388.44L1105.56 389.44L1056.06 382.49ZM967.31 374.93L998.96 379.63L998.96 380.63L967.31 375.93ZM899.9 370.92L923.59 374.66L923.59 375.66L899.9 371.92ZM844.53 368.41L863.26 371.56L863.26 372.56L844.53 369.41ZM796.23 366.82L810.98 369.48L810.98 370.48L796.23 367.82ZM710.66 365.18L722.4 367.64L722.4 368.64L710.66 366.18ZM671.95 365.07L681.69 367.3L681.69 368.3L671.95 366.07ZM634.77 365.32L643.5 367.51L643.5 368.51L634.77 366.32ZM598.34 365.83L606.04 367.98L606.04 368.98L598.34 366.83ZM562.54 366.67L569.22 368.76L569.22 369.76L562.54 367.67ZM527.4 367.98L533.05 369.99L533.05 370.99L527.4 368.98ZM491.54 369.41L497.08 371.7L497.08 372.7L491.54 370.41ZM418.11 373.29L421.51 375.39L421.51 376.39L418.11 374.29ZM380.11 376.05L382.44 377.94L382.44 378.94L380.11 377.05ZM340.19 379L342.12 381.29L341.12 381.29L339.19 379ZM297.79 381.32L299.42 384.95L298.42 384.95L296.79 381.32ZM206.34 389.48L205.07 393.26L204.07 393.26L205.34 389.48ZM153.95 396.13L151.6 399.36L150.6 399.36L152.95 396.13ZM29.58 411.19L32.9 409L32.9 410L29.58 412.19Z"/>
<path fill="#616161" fill-opacity="0.360" d="M1332.23 412.31L1357 415.61L1357 416.61L1332.23 413.31ZM1105.56 388.44L1173.86 398.03L1173.86 399.03L1105.56 389.44ZM998.96 379.63L1037.54 385.36L1037.54 386.36L998.96 380.63ZM923.59 374.66L950.25 378.87L950.25 379.87L923.59 375.66ZM863.26 371.56L883.95 375.05L883.95 376.05L863.26 372.56ZM810.98 369.48L827.71 372.5L827.71 373.5L810.98 370.48ZM722.4 367.64L734.13 370.1L734.13 371.1L722.4 368.64ZM681.69 367.3L692.41 369.75L692.41 370.75L681.69 368.3ZM643.5 367.51L652.22 369.7L652.22 370.7L643.5 368.51ZM606.04 367.98L613.74 370.12L613.74 371.12L606.04 368.98ZM569.22 368.76L576.85 371.14L576.85 372.14L569.22 369.76ZM533.05 369.99L539.65 372.34L539.65 373.34L533.05 370.99ZM497.08 371.7L501.7 373.62L501.7 374.62L497.08 372.7ZM421.51 375.39L425.77 378L425.77 379L421.51 376.39ZM382.44 377.94L385.54 380.45L385.54 381.45L382.44 378.94ZM342.12 381.29L344.69 384.35L343.69 384.35L341.12 381.29ZM299.42 384.95L301.05 388.58L300.05 388.58L298.42 384.95ZM253.76 387.09L253.99 391.06L252.99 391.06L252.76 387.09ZM205.07 393.26L203.81 397.05L202.81 397.05L204.07 393.26ZM151.6 399.36L149.25 402.59L148.25 402.59L150.6 399.36ZM22.93 415.59L29.58 411.19L29.58 412.19L22.93 416.59Z"/>
<path fill="#616161" fill-opacity="0.373" d="M1173.86 398.03L1287.7 414.02L1287.7 415.02L1173.86 399.03ZM1037.54 385.36L1085.01 392.42L1085.01 393.42L1037.54 386.36ZM950.25 378.87L980.85 383.7L980.85 384.7L950.25 379.87ZM883.95 375.05L906.62 378.86L906.62 379.86L883.95 376.05ZM827.71 372.5L846.4 375.86L846.4 376.86L827.71 373.5ZM734.13 370.1L746.84 372.77L746.84 373.77L734.13 371.1ZM692.41 369.75L703.13 372.2L703.13 373.2L692.41 370.75ZM652.22 369.7L661.92 372.14L661.92 373.14L652.22 370.7ZM613.74 370.12L622.41 372.54L622.41 373.54L613.74 371.12ZM576.85 371.14L583.52 373.23L583.52 374.23L576.85 372.14ZM539.65 372.34L546.24 374.69L546.24 375.69L539.65 373.34ZM501.7 373.62L507.24 375.92L507.24 376.92L501.7 374.62ZM425.77 378L429.18 380.1L429.18 381.1L425.77 379ZM385.54 380.45L388.65 382.97L388.65 383.97L385.54 381.45ZM344.69 384.35L346.62 386.64L345.62 386.64L343.69 384.35ZM301.05 388.58L302.68 392.21L301.68 392.21L300.05 388.58ZM253.99 391.06L254.22 395.04L253.22 395.04L252.99 391.06ZM203.81 397.05L202.54 400.83L201.54 400.83L202.81 397.05ZM149.25 402.59L146.89 405.82L145.89 405.82L148.25 402.59ZM16.29 419.98L22.93 415.59L22.93 416.59L16.29 420.98Z"/>
<path fill="#616161" fill-opacity="0.385" d="M1287.7 414.02L1357 423.75L1357 424.75L1287.7 415.02ZM1085.01 392.42L1150.29 402.12L1150.29 403.12L1085.01 393.42ZM980.85 383.7L1018.37 389.62L1018.37 390.62L980.85 384.7ZM906.62 378.86L933.23 383.34L933.23 384.34L906.62 379.86ZM846.4 375.86L866.08 379.41L866.08 380.41L846.4 376.86ZM746.84 372.77L760.53 375.64L760.53 376.64L746.84 373.77ZM703.13 372.2L714.82 374.87L714.82 375.87L703.13 373.2ZM661.92 372.14L672.58 374.82L672.58 375.82L661.92 373.14ZM622.41 372.54L632.03 375.22L632.03 376.22L622.41 373.54ZM583.52 373.23L592.11 375.92L592.11 376.92L583.52 374.23ZM546.24 374.69L552.83 377.04L552.83 378.04L546.24 375.69ZM507.24 375.92L513.71 378.6L513.71 379.6L507.24 376.92ZM429.18 380.1L433.43 382.71L433.43 383.71L429.18 381.1ZM388.65 382.97L391.76 385.49L391.76 386.49L388.65 383.97ZM346.62 386.64L349.2 389.7L348.2 389.7L345.62 386.64ZM254.22 395.04L254.44 399.02L253.44 399.02L253.22 395.04ZM202.54 400.83L201.27 404.61L200.27 404.61L201.54 400.83ZM146.89 405.82L144.54 409.05L143.54 409.05L145.89 405.82ZM6.32 426.57L16.29 419.98L16.29 420.98L6.32 427.57Z"/>
<path fill="#616161" fill-opacity="0.396" d="M1150.29 402.12L1260.07 418.44L1260.07 419.44L1150.29 403.12ZM1018.37 389.62L1066.74 397.26L1066.74 398.26L1018.37 390.62ZM933.23 383.34L964.76 388.65L964.76 389.65L933.23 384.34ZM866.08 379.41L890.67 383.84L890.67 384.84L866.08 380.41ZM760.53 375.64L776.18 378.93L776.18 379.93L760.53 376.64ZM714.82 374.87L728.47 377.99L728.47 378.99L714.82 375.87ZM672.58 374.82L684.22 377.74L684.22 378.74L672.58 375.82ZM632.03 375.22L641.66 377.9L641.66 378.9L632.03 376.22ZM592.11 375.92L600.69 378.6L600.69 379.6L592.11 376.92ZM552.83 377.04L560.36 379.73L560.36 380.73L552.83 378.04ZM513.71 378.6L520.17 381.28L520.17 382.28L513.71 379.6ZM433.43 382.71L438.54 385.86L438.54 386.86L433.43 383.71ZM391.76 385.49L395.64 388.64L395.64 389.64L391.76 386.49ZM349.2 389.7L351.77 392.76L350.77 392.76L348.2 389.7ZM302.68 392.21L304.31 395.84L303.31 395.84L301.68 392.21ZM254.44 399.02L254.67 402.99L253.67 402.99L253.44 399.02ZM201.27 404.61L200 408.4L199 408.4L200.27 404.61ZM144.54 409.05L139.84 415.52L138.84 415.52L143.54 409.05ZM3 428.77L6.32 426.57L6.32 427.57L3 429.77Z"/>
<path fill="#616161" fill-opacity="0.408" d="M1260.07 418.44L1357 432.85L1357 433.85L1260.07 419.44ZM1066.74 397.26L1137.83 408.48L1137.83 409.48L1066.74 398.26ZM964.76 388.65L1006.16 395.61L1006.16 396.61L964.76 389.65ZM890.67 383.84L919.2 388.98L919.2 389.98L890.67 384.84ZM776.18 378.93L794.75 382.83L794.75 383.83L776.18 379.93ZM728.47 377.99L743.08 381.33L743.08 382.33L728.47 378.99ZM684.22 377.74L696.82 380.9L696.82 381.9L684.22 378.74ZM641.66 377.9L652.25 380.85L652.25 381.85L641.66 378.9ZM600.69 378.6L610.23 381.59L610.23 382.59L600.69 379.6ZM560.36 379.73L568.84 382.75L568.84 383.75L560.36 380.73ZM520.17 381.28L527.56 384.34L527.56 385.34L520.17 382.28ZM438.54 385.86L443.65 389L443.65 390L438.54 386.86ZM395.64 388.64L399.53 391.78L399.53 392.78L395.64 389.64ZM351.77 392.76L354.34 395.81L353.34 395.81L350.77 392.76ZM304.31 395.84L305.95 399.47L304.95 399.47L303.31 395.84ZM254.67 402.99L254.9 406.97L253.9 406.97L253.67 402.99ZM200 408.4L198.73 412.18L197.73 412.18L199 408.4ZM139.84 415.52L137.49 418.75L136.49 418.75L138.84 415.52Z"/>
<path fill="#616161" fill-opacity="0.420" d="M1137.83 408.48L1279.99 430.92L1279.99 431.92L1137.83 409.48ZM1006.16 395.61L1065.29 405.56L1065.29 406.56L1006.16 396.61ZM919.2 388.98L957.57 395.89L957.57 396.89L919.2 389.98ZM794.75 382.83L817.24 387.55L817.24 388.55L794.75 383.83ZM743.08 381.33L762.57 385.79L762.57 386.79L743.08 382.33ZM696.82 380.9L712.33 384.8L712.33 385.8L696.82 381.9ZM652.25 380.85L665.73 384.61L665.73 385.61L652.25 381.85ZM610.23 381.59L621.67 385.17L621.67 386.17L610.23 382.59ZM568.84 382.75L578.25 386.11L578.25 387.11L568.84 383.75ZM527.56 384.34L535.87 387.79L535.87 388.79L527.56 385.34ZM443.65 389L449.61 392.66L449.61 393.66L443.65 390ZM399.53 391.78L404.19 395.56L404.19 396.56L399.53 392.78ZM354.34 395.81L358.2 400.4L357.2 400.4L353.34 395.81ZM305.95 399.47L307.58 403.1L306.58 403.1L304.95 399.47ZM254.9 406.97L255.13 410.95L254.13 410.95L253.9 406.97ZM198.73 412.18L197.47 415.96L196.47 415.96L197.73 412.18ZM137.49 418.75L132.79 425.21L131.79 425.21L136.49 418.75Z"/>
<path fill="#616161" fill-opacity="0.431" d="M1279.99 430.92L1357 443.08L1357 444.08L1279.99 431.92ZM1065.29 405.56L1188.48 426.29L1188.48 427.29L1065.29 406.56ZM957.57 395.89L1022.5 407.59L1022.5 408.59L957.57 396.89ZM817.24 387.55L851.47 394.73L851.47 395.73L817.24 388.55ZM762.57 385.79L789.86 392.03L789.86 393.03L762.57 386.79ZM712.33 384.8L735.6 390.65L735.6 391.65L712.33 385.8ZM665.73 384.61L684.99 389.98L684.99 390.98L665.73 385.61ZM621.67 385.17L637.89 390.24L637.89 391.24L621.67 386.17ZM578.25 386.11L592.38 391.15L592.38 392.15L578.25 387.11ZM535.87 387.79L547.88 392.77L547.88 393.77L535.87 388.79ZM449.61 392.66L458.12 397.89L458.12 398.89L449.61 393.66ZM404.19 395.56L411.18 401.22L411.18 402.22L404.19 396.56ZM358.2 400.4L362.71 405.75L361.71 405.75L357.2 400.4ZM307.58 403.1L310.84 410.36L309.84 410.36L306.58 403.1ZM255.13 410.95L255.35 414.92L254.35 414.92L254.13 410.95ZM197.47 415.96L194.93 423.53L193.93 423.53L196.47 415.96ZM132.79 425.21L128.09 431.67L127.09 431.67L131.79 425.21Z"/>
<path fill="#616161" fill-opacity="0.443" d="M1188.48 426.29L1357 454.65L1357 455.65L1188.48 427.29ZM1022.5 407.59L1357 467.86L1357 468.86L1022.5 408.59ZM851.47 394.73L1357 500.81L1357 501.81L851.47 395.73ZM789.86 392.03L1357 521.72L1357 522.72L789.86 393.03ZM735.6 390.65L1357 546.75L1357 547.75L735.6 391.65ZM684.99 389.98L1357 577.25L1357 578.25L684.99 390.98ZM637.89 390.24L696.07 408.45L696.07 409.45L637.89 391.24ZM756.15 427.24L1357 615.24L1357 616.24L756.15 428.24ZM592.38 391.15L658.29 414.66L658.29 415.66L592.38 392.15ZM774.12 455.97L1357 663.87L1357 664.87L774.12 456.97ZM547.88 392.77L620.85 423.03L620.85 424.03L547.88 393.77ZM776.02 487.38L1357 728.31L1357 729.31L776.02 488.38ZM458.12 397.89L579.02 472.22L579.02 473.22L458.12 398.89ZM703.33 548.63L1280.57 903.5L1280.57 904.5L703.33 549.63ZM411.18 401.22L1031.14 903.5L1031.14 904.5L411.18 402.22ZM362.71 405.75L782.21 904L781.21 904L361.71 405.75ZM310.84 410.36L532.77 904L531.77 904L309.84 410.36ZM255.35 414.92L283.34 904L282.34 904L254.35 414.92ZM194.93 423.53L33.91 904L32.91 904L193.93 423.53ZM128.09 431.67L3.5 602.93L2.5 602.93L127.09 431.67Z"/>
<path fill="#616161" fill-opacity="0.289" d="M696.07 408.45L697.02 408.74L697.02 409.74L696.07 409.45ZM773.18 455.63L774.12 455.97L774.12 456.97L773.18 456.63ZM773.25 486.23L776.02 487.38L776.02 488.38L773.25 487.23ZM652.24 517.23L703.33 548.63L703.33 549.63L652.24 518.23Z"/>
<path fill="#808080" fill-opacity="0.032" d="M90.85 323.41L394.32 312.4L394.32 313.4L90.85 324.41ZM537.27 315.18L692.77 308.4L692.77 309.4L537.27 316.18ZM767.61 314.6L851.24 310.02L851.24 311.02L767.61 315.6ZM938.85 317.94L1002.57 313.27L1002.57 314.27L938.85 318.94ZM1116.6 323.99L1162.29 318.93L1162.29 319.93L1116.6 324.99Z"/>
<path fill="#808080" fill-opacity="0.061" d="M3 338.49L537.27 315.18L537.27 316.18L3 339.49ZM703.89 318.08L767.61 314.6L767.61 315.6L703.89 319.08ZM899.03 320.85L938.85 317.94L938.85 318.94L899.03 321.85ZM1084.81 327.51L1116.6 323.99L1116.6 324.99L1084.81 328.51Z"/>
<path fill="#808080" fill-opacity="0.090" d="M644.16 321.34L703.89 318.08L703.89 319.08L644.16 322.34ZM863.19 323.48L899.03 320.85L899.03 321.85L863.19 324.48ZM1059.97 330.26L1084.81 327.51L1084.81 328.51L1059.97 331.26Z"/>
<path fill="#808080" fill-opacity="0.117" d="M576.46 325.04L644.16 321.34L644.16 322.34L576.46 326.04ZM831.33 325.81L863.19 323.48L863.19 324.48L831.33 326.81ZM1038.12 332.68L1059.97 330.26L1059.97 331.26L1038.12 333.68Z"/>
<path fill="#808080" fill-opacity="0.143" d="M496.81 329.4L576.46 325.04L576.46 326.04L496.81 330.4ZM799.47 328.14L831.33 325.81L831.33 326.81L799.47 329.14ZM1018.25 334.88L1038.12 332.68L1038.12 333.68L1018.25 335.88Z"/>
<path fill="#808080" fill-opacity="0.168" d="M349.46 337.45L496.81 329.4L496.81 330.4L349.46 338.45ZM3 356.39L166.28 347.47L166.28 348.47L3 357.39ZM771.59 330.18L799.47 328.14L799.47 329.14L771.59 331.18ZM999.38 336.97L1018.25 334.88L1018.25 335.88L999.38 337.97Z"/>
<path fill="#808080" fill-opacity="0.192" d="M166.28 347.47L349.46 337.45L349.46 338.45L166.28 348.47ZM743.72 332.22L771.59 330.18L771.59 331.18L743.72 333.22ZM982.49 338.84L999.38 336.97L999.38 337.97L982.49 339.84Z"/>
<path fill="#808080" fill-opacity="0.215" d="M715.84 334.26L743.72 332.22L743.72 333.22L715.84 335.26ZM965.6 340.71L982.49 338.84L982.49 339.84L965.6 341.71Z"/>
<path fill="#808080" fill-opacity="0.237" d="M687.96 336.3L715.84 334.26L715.84 335.26L687.96 337.3ZM949.71 342.47L965.6 340.71L965.6 341.71L949.71 343.47Z"/>
<path fill="#808080" fill-opacity="0.259" d="M656.11 338.63L687.96 336.3L687.96 337.3L656.11 339.63ZM934.81 344.12L949.71 342.47L949.71 343.47L934.81 345.12Z"/>
<path fill="#808080" fill-opacity="0.280" d="M624.25 340.97L656.11 338.63L656.11 339.63L624.25 341.97ZM919.91 345.77L934.81 344.12L934.81 345.12L919.91 346.77Z"/>
<path fill="#808080" fill-opacity="0.301" d="M592.39 343.3L624.25 340.97L624.25 341.97L592.39 344.3ZM906 347.31L919.91 345.77L919.91 346.77L906 348.31Z"/>
<path fill="#808080" fill-opacity="0.321" d="M552.56 346.21L592.39 343.3L592.39 344.3L552.56 347.21ZM891.1 348.96L906 347.31L906 348.31L891.1 349.96Z"/>
<path fill="#808080" fill-opacity="0.340" d="M504.78 349.71L552.56 346.21L552.56 347.21L504.78 350.71ZM877.19 350.5L891.1 348.96L891.1 349.96L877.19 351.5Z"/>
<path fill="#808080" fill-opacity="0.359" d="M441.06 354.37L504.78 349.71L504.78 350.71L441.06 355.37ZM3 386.44L38.84 383.82L38.84 384.82L3 387.44ZM863.28 352.04L877.19 350.5L877.19 351.5L863.28 353.04Z"/>
<path fill="#808080" fill-opacity="0.378" d="M38.84 383.82L441.06 354.37L441.06 355.37L38.84 384.82ZM849.37 353.58L863.28 352.04L863.28 353.04L849.37 354.58Z"/>
<path fill="#808080" fill-opacity="0.396" d="M834.47 355.23L849.37 353.58L849.37 354.58L834.47 356.23Z"/>
<path fill="#808080" fill-opacity="0.413" d="M820.57 356.77L834.47 355.23L834.47 356.23L820.57 357.77Z"/>
<path fill="#808080" fill-opacity="0.431" d="M805.66 358.42L820.57 356.77L820.57 357.77L805.66 359.42Z"/>
<path fill="#808080" fill-opacity="0.448" d="M790.76 360.07L805.66 358.42L805.66 359.42L790.76 361.07Z"/>
<path fill="#808080" fill-opacity="0.464" d="M774.87 361.83L790.76 360.07L790.76 361.07L774.87 362.83Z"/>
<path fill="#808080" fill-opacity="0.481" d="M757.98 363.7L774.87 361.83L774.87 362.83L757.98 364.7Z"/>
<path fill="#808080" fill-opacity="0.497" d="M741.09 365.57L757.98 363.7L757.98 364.7L741.09 366.57Z"/>
<path fill="#808080" fill-opacity="0.513" d="M723.21 367.55L741.09 365.57L741.09 366.57L723.21 368.55Z"/>
<path fill="#808080" fill-opacity="0.528" d="M703.34 369.75L723.21 367.55L723.21 368.55L703.34 370.75Z"/>
<path fill="#808080" fill-opacity="0.543" d="M681.49 372.18L703.34 369.75L703.34 370.75L681.49 373.18Z"/>
<path fill="#808080" fill-opacity="0.558" d="M657.65 374.82L681.49 372.18L681.49 373.18L657.65 375.82Z"/>
<path fill="#808080" fill-opacity="0.573" d="M628.84 378.01L657.65 374.82L657.65 375.82L628.84 379.01Z"/>
<path fill="#808080" fill-opacity="0.588" d="M593.08 381.97L628.84 378.01L628.84 379.01L593.08 382.97Z"/>
<path fill="#808080" fill-opacity="0.602" d="M543.41 387.47L593.08 381.97L593.08 382.97L543.41 388.47Z"/>
<path fill="#808080" fill-opacity="0.616" d="M440.09 398.91L543.41 387.47L543.41 388.47L440.09 399.91ZM3 447.32L71.54 439.73L71.54 440.73L3 448.32Z"/>
<path fill="#808080" fill-opacity="0.630" d="M71.54 439.73L440.09 398.91L440.09 399.91L71.54 440.73Z"/>
<path fill="#808080" fill-opacity="0.032" d="M1133.58 317.85L1357 330.47L1357 331.47L1133.58 318.85ZM862.26 310.02L1005.89 319.88L1005.89 320.88L862.26 311.02ZM712.35 308.51L783.98 314.78L783.98 315.78L712.35 309.51ZM587.59 308.89L631.27 314.15L631.27 315.15L587.59 309.89ZM468 310.72L495.47 316.05L495.47 317.05L468 311.72ZM180.31 326.84L189.18 318.93L189.18 319.93L180.31 327.84Z"/>
<path fill="#808080" fill-opacity="0.061" d="M1005.89 319.88L1181.45 331.92L1181.45 332.92L1005.89 320.88ZM783.98 314.78L839.69 319.65L839.69 320.65L783.98 315.78ZM631.27 314.15L663.04 317.98L663.04 318.98L631.27 315.15ZM495.47 316.05L514.11 319.66L514.11 320.66L495.47 317.05ZM174.4 332.12L180.31 326.84L180.31 327.84L174.4 333.12Z"/>
<path fill="#808080" fill-opacity="0.090" d="M1181.45 331.92L1357 343.97L1357 344.97L1181.45 332.92ZM839.69 319.65L891.42 324.17L891.42 325.17L839.69 320.65ZM663.04 317.98L690.84 321.33L690.84 322.33L663.04 318.98ZM514.11 319.66L529.81 322.71L529.81 323.71L514.11 320.66ZM168.49 337.4L174.4 332.12L174.4 333.12L168.49 338.4Z"/>
<path fill="#808080" fill-opacity="0.117" d="M891.42 324.17L947.13 329.04L947.13 330.04L891.42 325.17ZM690.84 321.33L715.66 324.32L715.66 325.32L690.84 322.33ZM529.81 322.71L544.53 325.56L544.53 326.56L529.81 323.71ZM165.54 340.04L168.49 337.4L168.49 338.4L165.54 341.04Z"/>
<path fill="#808080" fill-opacity="0.143" d="M947.13 329.04L1010.8 334.61L1010.8 335.61L947.13 330.04ZM715.66 324.32L739.48 327.2L739.48 328.2L715.66 325.32ZM544.53 325.56L557.29 328.04L557.29 329.04L544.53 326.56ZM159.63 345.32L165.54 340.04L165.54 341.04L159.63 346.32Z"/>
<path fill="#808080" fill-opacity="0.168" d="M1010.8 334.61L1086.41 341.22L1086.41 342.22L1010.8 335.61ZM739.48 327.2L762.32 329.95L762.32 330.95L739.48 328.2ZM557.29 328.04L569.06 330.32L569.06 331.32L557.29 329.04ZM156.67 347.95L159.63 345.32L159.63 346.32L156.67 348.95Z"/>
<path fill="#808080" fill-opacity="0.192" d="M1086.41 341.22L1193.85 350.62L1193.85 351.62L1086.41 342.22ZM762.32 329.95L785.15 332.7L785.15 333.7L762.32 330.95ZM569.06 330.32L580.84 332.6L580.84 333.6L569.06 331.32ZM153.72 350.59L156.67 347.95L156.67 348.95L153.72 351.59Z"/>
<path fill="#808080" fill-opacity="0.215" d="M1193.85 350.62L1357 364.88L1357 365.88L1193.85 351.62ZM785.15 332.7L807.99 335.45L807.99 336.45L785.15 333.7ZM580.84 332.6L591.63 334.69L591.63 335.69L580.84 333.6ZM147.81 355.87L153.72 350.59L153.72 351.59L147.81 356.87Z"/>
<path fill="#808080" fill-opacity="0.237" d="M807.99 335.45L831.81 338.32L831.81 339.32L807.99 336.45ZM591.63 334.69L602.43 336.79L602.43 337.79L591.63 335.69ZM144.85 358.51L147.81 355.87L147.81 356.87L144.85 359.51Z"/>
<path fill="#808080" fill-opacity="0.259" d="M831.81 338.32L855.64 341.2L855.64 342.2L831.81 339.32ZM602.43 336.79L613.22 338.88L613.22 339.88L602.43 337.79ZM141.89 361.15L144.85 358.51L144.85 359.51L141.89 362.15Z"/>
<path fill="#808080" fill-opacity="0.280" d="M855.64 341.2L880.46 344.19L880.46 345.19L855.64 342.2ZM613.22 338.88L623.03 340.78L623.03 341.78L613.22 339.88ZM138.94 363.79L141.89 361.15L141.89 362.15L138.94 364.79Z"/>
<path fill="#808080" fill-opacity="0.301" d="M880.46 344.19L907.27 347.42L907.27 348.42L880.46 345.19ZM623.03 340.78L633.83 342.87L633.83 343.87L623.03 341.78ZM135.98 366.43L138.94 363.79L138.94 364.79L135.98 367.43Z"/>
<path fill="#808080" fill-opacity="0.321" d="M907.27 347.42L935.06 350.77L935.06 351.77L907.27 348.42ZM633.83 342.87L643.64 344.78L643.64 345.78L633.83 343.87ZM133.03 369.07L135.98 366.43L135.98 367.43L133.03 370.07Z"/>
<path fill="#808080" fill-opacity="0.340" d="M935.06 350.77L966.83 354.6L966.83 355.6L935.06 351.77ZM643.64 344.78L653.45 346.68L653.45 347.68L643.64 345.78ZM127.12 374.34L133.03 369.07L133.03 370.07L127.12 375.34Z"/>
<path fill="#808080" fill-opacity="0.359" d="M966.83 354.6L1000.59 358.67L1000.59 359.67L966.83 355.6ZM653.45 346.68L664.24 348.77L664.24 349.77L653.45 347.68ZM124.16 376.98L127.12 374.34L127.12 375.34L124.16 377.98Z"/>
<path fill="#808080" fill-opacity="0.378" d="M1000.59 358.67L1040.3 363.45L1040.3 364.45L1000.59 359.67ZM664.24 348.77L674.06 350.67L674.06 351.67L664.24 349.77ZM121.21 379.62L124.16 376.98L124.16 377.98L121.21 380.62Z"/>
<path fill="#808080" fill-opacity="0.396" d="M1040.3 363.45L1087.95 369.2L1087.95 370.2L1040.3 364.45ZM674.06 350.67L683.87 352.58L683.87 353.58L674.06 351.67ZM118.25 382.26L121.21 379.62L121.21 380.62L118.25 383.26Z"/>
<path fill="#808080" fill-opacity="0.413" d="M1087.95 369.2L1147.52 376.38L1147.52 377.38L1087.95 370.2ZM683.87 352.58L694.66 354.67L694.66 355.67L683.87 353.58ZM115.3 384.9L118.25 382.26L118.25 383.26L115.3 385.9Z"/>
<path fill="#808080" fill-opacity="0.431" d="M1147.52 376.38L1232.9 386.67L1232.9 387.67L1147.52 377.38ZM694.66 354.67L705.46 356.76L705.46 357.76L694.66 355.67ZM112.34 387.54L115.3 384.9L115.3 385.9L112.34 388.54Z"/>
<path fill="#808080" fill-opacity="0.448" d="M1232.9 386.67L1357 401.62L1357 402.62L1232.9 387.67ZM705.46 356.76L716.25 358.85L716.25 359.85L705.46 357.76ZM109.39 390.18L112.34 387.54L112.34 388.54L109.39 391.18Z"/>
<path fill="#808080" fill-opacity="0.464" d="M716.25 358.85L728.02 361.14L728.02 362.14L716.25 359.85ZM103.48 395.45L109.39 390.18L109.39 391.18L103.48 396.45Z"/>
<path fill="#808080" fill-opacity="0.481" d="M728.02 361.14L739.8 363.42L739.8 364.42L728.02 362.14ZM100.52 398.09L103.48 395.45L103.48 396.45L100.52 399.09Z"/>
<path fill="#808080" fill-opacity="0.497" d="M739.8 363.42L751.57 365.7L751.57 366.7L739.8 364.42ZM97.57 400.73L100.52 398.09L100.52 399.09L97.57 401.73Z"/>
<path fill="#808080" fill-opacity="0.513" d="M751.57 365.7L764.33 368.18L764.33 369.18L751.57 366.7ZM91.66 406.01L97.57 400.73L97.57 401.73L91.66 407.01Z"/>
<path fill="#808080" fill-opacity="0.528" d="M764.33 368.18L779.05 371.03L779.05 372.03L764.33 369.18ZM88.7 408.65L91.66 406.01L91.66 407.01L88.7 409.65Z"/>
<path fill="#808080" fill-opacity="0.543" d="M779.05 371.03L793.77 373.88L793.77 374.88L779.05 372.03ZM85.75 411.29L88.7 408.65L88.7 409.65L85.75 412.29Z"/>
<path fill="#808080" fill-opacity="0.558" d="M793.77 373.88L810.45 377.12L810.45 378.12L793.77 374.88ZM79.84 416.57L85.75 411.29L85.75 412.29L79.84 417.57Z"/>
<path fill="#808080" fill-opacity="0.573" d="M810.45 377.12L829.09 380.73L829.09 381.73L810.45 378.12ZM73.93 421.84L79.84 416.57L79.84 417.57L73.93 422.84Z"/>
<path fill="#808080" fill-opacity="0.588" d="M829.09 380.73L851.66 385.11L851.66 386.11L829.09 381.73ZM68.01 427.12L73.93 421.84L73.93 422.84L68.01 428.12Z"/>
<path fill="#808080" fill-opacity="0.602" d="M851.66 385.11L880.12 390.62L880.12 391.62L851.66 386.11ZM62.1 432.4L68.01 427.12L68.01 428.12L62.1 433.4Z"/>
<path fill="#808080" fill-opacity="0.616" d="M880.12 390.62L924.27 399.19L924.27 400.19L880.12 391.62ZM50.28 442.96L62.1 432.4L62.1 433.4L50.28 443.96Z"/>
<path fill="#808080" fill-opacity="0.630" d="M924.27 399.19L1357 483.08L1357 484.08L924.27 400.19ZM3 485.18L50.28 442.96L50.28 443.96L3 486.18Z"/>
</g>
<path d="M649.0 419.5L650.3 420.0M709.1 410.1L710.6 410.6M649.0 419.5L652.2 419.0M652.2 419.0L655.3 418.5M655.3 418.5L658.5 418.0M664.7 417.0L667.8 416.5M667.8 416.5L670.9 416.1M670.9 416.1L674.0 415.6M680.0 414.6L683.0 414.2M683.0 414.2L686.0 413.7M686.0 413.7L688.9 413.3M694.8 412.4L697.7 411.9M697.7 411.9L700.6 411.5M700.6 411.5L703.4 411.0M649.0 419.5L646.7 419.8M691.7 512.5L689.4 513.1M650.3 420.0L651.7 420.7M710.6 410.6L712.1 411.2M646.7 419.8L644.5 420.3M689.4 513.1L687.0 513.6M651.7 420.7L653.1 421.4M712.1 411.2L713.5 411.9M644.5 420.3L642.2 420.9M687.0 513.6L684.6 514.2M655.9 423.2L657.3 424.2M716.5 413.5L718.0 414.4M637.7 422.3L635.5 423.2M679.6 515.1L677.0 515.5M657.3 424.2L658.7 425.3M718.0 414.4L719.5 415.4M635.5 423.2L633.3 424.1M677.0 515.5L674.4 515.9M658.7 425.3L660.1 426.5M719.5 415.4L720.9 416.5M633.3 424.1L631.1 425.1M674.4 515.9L671.7 516.3M662.8 429.2L664.2 430.7M723.9 419.0L725.3 420.3M626.7 427.4L624.5 428.7M666.3 516.9L663.5 517.1M664.2 430.7L665.6 432.2M725.3 420.3L726.7 421.7M624.5 428.7L622.4 430.1M663.5 517.1L660.7 517.3M665.6 432.2L666.9 433.8M726.7 421.7L728.1 423.3M622.4 430.1L620.3 431.5M660.7 517.3L657.9 517.5M669.6 437.4L670.8 439.2M730.9 426.5L732.2 428.2M616.2 434.7L614.2 436.3M652.3 517.8L649.5 517.8M670.8 439.2L672.1 441.2M732.2 428.2L733.5 430.0M614.2 436.3L612.3 438.1M649.5 517.8L646.6 517.8M672.1 441.2L673.4 443.2M733.5 430.0L734.8 431.9M612.3 438.1L610.4 439.9M646.6 517.8L643.8 517.8M675.8 447.5L676.9 449.7M737.3 435.9L738.5 437.9M606.7 443.8L605.0 445.8M638.2 517.7L635.4 517.5M676.9 449.7L678.1 452.0M738.5 437.9L739.6 440.1M605.0 445.8L603.3 447.9M635.4 517.5L632.6 517.4M678.1 452.0L679.2 454.4M739.6 440.1L740.7 442.2M603.3 447.9L601.6 450.0M632.6 517.4L629.9 517.2M681.3 459.2L682.2 461.7M742.8 446.7L743.8 449.1M598.6 454.5L597.1 456.8M624.5 516.6L621.9 516.3M682.2 461.7L683.2 464.3M743.8 449.1L744.7 451.4M597.1 456.8L595.8 459.1M621.9 516.3L619.3 516.0M683.2 464.3L684.1 466.8M744.7 451.4L745.6 453.8M595.8 459.1L594.5 461.5M619.3 516.0L616.8 515.6M685.8 472.1L686.5 474.8M747.3 458.7L748.0 461.2M592.1 466.4L591.0 468.9M611.9 514.7L609.6 514.2M686.5 474.8L687.2 477.5M748.0 461.2L748.7 463.7M591.0 468.9L590.0 471.4M609.6 514.2L607.3 513.7M687.2 477.5L687.9 480.2M748.7 463.7L749.3 466.3M590.0 471.4L589.1 473.9M607.3 513.7L605.1 513.2M689.1 485.6L689.6 488.4M750.4 471.4L750.8 474.0M587.5 479.0L586.8 481.6M600.8 512.0L598.8 511.3M689.6 488.4L690.0 491.1M750.8 474.0L751.2 476.5M586.8 481.6L586.2 484.2M598.8 511.3L596.9 510.7M690.0 491.1L690.4 493.9M751.2 476.5L751.6 479.1M586.2 484.2L585.7 486.8M596.9 510.7L595.1 510.0M691.1 499.3L691.3 502.0M752.1 484.2L752.3 486.7M585.0 492.0L584.8 494.5M591.7 508.6L590.1 507.8M691.3 502.0L691.5 504.7M752.3 486.7L752.4 489.2M584.8 494.5L584.6 497.1M590.1 507.8L588.6 507.1M691.5 504.7L691.6 507.3M752.4 489.2L752.4 491.7M584.6 497.1L584.5 499.7M588.6 507.1L587.2 506.3M691.7 512.5L691.6 515.1M752.3 496.6L752.2 499.0M691.7 512.5L694.9 511.7M694.9 511.7L698.1 510.8M698.1 510.8L701.3 510.0M707.6 508.3L710.7 507.5M710.7 507.5L713.8 506.7M713.8 506.7L716.9 505.9M723.0 504.3L726.0 503.5M726.0 503.5L729.0 502.7M729.0 502.7L732.0 501.9M737.9 500.4L740.8 499.6M740.8 499.6L743.7 498.9M743.7 498.9L746.6 498.1M584.6 504.7L584.8 507.2M584.6 504.7L583.5 503.9M691.6 515.1L691.5 517.6M752.2 499.0L752.0 501.4M584.8 507.2L585.1 509.6M583.5 503.9L582.5 503.0M691.5 517.6L691.4 520.0M752.0 501.4L751.7 503.7M585.1 509.6L585.5 512.0M582.5 503.0L581.6 502.2M690.9 524.8L690.6 527.1M751.1 508.2L750.6 510.4M586.4 516.7L587.0 519.0M580.0 500.4L579.3 499.6M690.6 527.1L690.2 529.3M750.6 510.4L750.2 512.5M587.0 519.0L587.7 521.3M579.3 499.6L578.7 498.7M690.2 529.3L689.8 531.5M750.2 512.5L749.6 514.6M587.7 521.3L588.4 523.5M578.7 498.7L578.3 497.8M688.8 535.6L688.2 537.6M748.4 518.6L747.8 520.5M590.2 527.7L591.1 529.8M577.6 496.0L577.5 495.1M688.2 537.6L687.6 539.5M747.8 520.5L747.0 522.3M591.1 529.8L592.2 531.7M577.5 495.1L577.4 494.2M687.6 539.5L687.0 541.3M747.0 522.3L746.3 524.0M592.2 531.7L593.3 533.6M685.5 544.7L684.7 546.3M744.6 527.3L743.7 528.8M595.7 537.3L597.0 539.0M684.7 546.3L683.9 547.8M743.7 528.8L742.7 530.3M597.0 539.0L598.4 540.6M683.9 547.8L683.0 549.2M742.7 530.3L741.7 531.7M598.4 540.6L599.8 542.2M681.2 551.8L680.2 552.9M739.7 534.2L738.6 535.3M602.9 545.1L604.4 546.5M680.2 552.9L679.2 554.0M738.6 535.3L737.4 536.4M679.2 554.0L678.2 555.0M737.4 536.4L736.3 537.4M676.0 556.7L674.9 557.4M733.9 539.1L732.7 539.8M674.9 557.4L673.8 558.0M732.7 539.8L731.4 540.5M673.8 558.0L672.7 558.6M731.4 540.5L730.1 541.0M776.4 480.5L776.3 481.3M775.9 482.8L775.5 483.6M775.5 483.6L775.1 484.4M775.1 484.4L774.5 485.2M773.2 486.7L772.4 487.5M772.4 487.5L771.5 488.2M771.5 488.2L770.5 489.0M727.9 411.3L726.1 410.8M768.3 490.4L767.1 491.1M726.1 410.8L724.3 410.4M767.1 491.1L765.8 491.8M638.6 418.3L639.8 418.1M697.8 409.3L699.1 409.1M724.3 410.4L722.5 410.1M765.8 491.8L764.4 492.5M642.3 418.0L643.6 418.1M701.9 409.0L703.3 409.0M718.8 409.7L716.9 409.6M761.3 493.8L759.7 494.4M643.6 418.1L644.9 418.3M703.3 409.0L704.7 409.2M716.9 409.6L715.0 409.6M759.7 494.4L757.9 495.0M644.9 418.3L646.3 418.6M704.7 409.2L706.2 409.4M715.0 409.6L713.0 409.7M757.9 495.0L756.1 495.5" fill="none" stroke="#80b3ff" stroke-opacity="0.36" stroke-width="1" shape-rendering="crispEdges"/>
<g shape-rendering="crispEdges">
<path fill="#f53352" d="M252.23 270.63L596.29 441.04L596.29 442.04L252.23 271.63ZM722.63 503.61L1357 817.81L1357 818.81L722.63 504.61Z"/>
<path fill="#298cf5" d="M775.04 460.88L1357 328.53L1357 329.53L775.04 461.88ZM3 636.47L584.96 504.12L584.96 505.12L3 637.47Z"/>
<rect x="679" y="62" width="1" height="353" fill="#87d603"/>
<rect x="679" y="556" width="1" height="348" fill="#87d603"/>
</g>
<circle cx="1299.9" cy="94.8" r="8" fill="rgb(245,51,82)" fill-opacity="0.56"/>
<circle cx="1299.9" cy="94.8" r="6.4" fill="rgb(147,31,49)" fill-opacity="0.56"/>
<circle cx="1340.0" cy="97.8" r="8" fill="rgb(41,140,245)" fill-opacity="0.62"/>
<circle cx="1340.0" cy="97.8" r="6.4" fill="rgb(24,84,147)" fill-opacity="0.62"/>
<circle cx="1315.9" cy="130.9" r="8" fill="rgb(135,214,3)" fill-opacity="0.67"/>
<circle cx="1315.9" cy="130.9" r="6.4" fill="rgb(81,129,2)" fill-opacity="0.67"/>
<line x1="1315.9" y1="102.8" x2="1315.9" y2="74.8" stroke="rgb(135,214,3)" stroke-opacity="0.83" stroke-width="2"/>
<circle cx="1315.9" cy="74.8" r="8" fill="rgb(135,214,3)" fill-opacity="0.83"/>
<text x="1315.9" y="79.6" font-family="Liberation Sans, sans-serif" font-size="13" text-anchor="middle" fill="#000" fill-opacity="0.83">Y</text>
<line x1="1315.9" y1="102.8" x2="1291.9" y2="107.9" stroke="rgb(41,140,245)" stroke-opacity="0.88" stroke-width="2"/>
<circle cx="1291.9" cy="107.9" r="8" fill="rgb(41,140,245)" fill-opacity="0.88"/>
<text x="1291.9" y="112.7" font-family="Liberation Sans, sans-serif" font-size="13" text-anchor="middle" fill="#000" fill-opacity="0.88">Z</text>
<line x1="1315.9" y1="102.8" x2="1332.0" y2="110.9" stroke="rgb(245,51,82)" stroke-opacity="0.94" stroke-width="2"/>
<circle cx="1332.0" cy="110.9" r="8" fill="rgb(245,51,82)" fill-opacity="0.94"/>
<text x="1332.0" y="115.7" font-family="Liberation Sans, sans-serif" font-size="13" text-anchor="middle" fill="#000" fill-opacity="0.94">X</text></svg>
<div class="abs" id="persp"></div>
<div class="abs txt" id="persptxt">Perspective</div>
<div class="abs" id="vp"></div>
<svg width="1364" height="906" viewBox="0 0 1364 906" style="position:absolute;left:0;top:0"><g transform="translate(10 5)" ><circle cx="8" cy="8" r="5" fill="none" stroke="#fc9c9c" stroke-width="2"/></g><g transform="translate(74 5)" ><path d="M3.05 3.05L12.95 12.95M12.95 3.05L3.05 12.95" stroke="#e0e0e0" stroke-width="2" fill="none"/></g><g transform="translate(103 4)" ><path d="M7 1v6H1v2h6v6h2V9h6V7H9V1z" fill="#e0e0e0" fill-opacity="0.5"/></g><g transform="translate(1338 5)" ><path d="M1 1h5L4.3 2.7L7 5.4L5.4 7L2.7 4.3L1 6zM15 1h-5L11.7 2.7L9 5.4L10.6 7L13.3 4.3L15 6zM1 15h5L4.3 13.3L7 10.6L5.4 9L2.7 11.7L1 10zM15 15h-5L11.7 13.3L9 10.6L10.6 9L13.3 11.7L15 10z" fill="#e0e0e0"/></g><g transform="translate(8 36)" ><path d="M2 2L13.6 6.5L10 8.4L12.6 11L11 12.6L8.4 10L6.5 13.6Z" fill="#699ce8"/></g><g transform="translate(48 36)" ><path d="M8 0.8L10.7 4.3H5.3zM8 15.2L10.7 11.7H5.3zM0.8 8L4.3 5.3V10.7zM15.2 8L11.7 5.3V10.7z" fill="#e0e0e0"/><circle cx="8" cy="8" r="3.9" fill="#333b4f"/><circle cx="8" cy="8" r="2.1" fill="#e0e0e0"/></g><g transform="translate(80 36)" ><path d="M3.76 12.24A6 6 0 1 1 12.24 12.24" fill="none" stroke="#e0e0e0" stroke-width="2"/><path d="M2 15h5v-5z" fill="#e0e0e0"/><circle cx="8" cy="8" r="2" fill="#e0e0e0"/></g><g transform="translate(112 36)" ><path d="M8 1h7v7h-2V4.4l-2.3 2.3-1.4-1.4L11.6 3H8zM1 8v7h7v-2H4.4l2.3-2.3-1.4-1.4L3 11.6V8z" fill="#e0e0e0"/><path d="M9.5 2.5h4v4zM2.5 9.5v4h4z" fill="#e0e0e0" fill-opacity="0.35"/><circle cx="8" cy="8" r="2" fill="#e0e0e0"/></g><g transform="translate(152 36)" ><path d="M1 1h11v14H1z" fill="#e0e0e0"/><path d="M3 3h7v2H3zM3 7h7v2H3zM3 11h7v2H3z" fill="#20263a"/><path d="M7.9 7.9L15.9 11.2L13.4 12.5L15.4 14.5L14.3 15.6L12.3 13.6L11.2 15.9Z" fill="#333b4f" stroke="#333b4f" stroke-width="2.2" stroke-linejoin="miter"/><path d="M7.9 7.9L15.9 11.2L13.4 12.5L15.4 14.5L14.3 15.6L12.3 13.6L11.2 15.9Z" fill="#e0e0e0"/></g><g transform="translate(184 36)" opacity="0.4"><path fill-rule="evenodd" d="M8 1a5 5 0 0 0-5 5v2H2v7h12V8h-1V6a5 5 0 0 0-5-5zM8 3a3 3 0 0 1 3 3v2H5V6a3 3 0 0 1 3-3zM7 10h2v3H7z" fill="#e0e0e0"/></g><g transform="translate(216 36)" opacity="0.4"><path fill-rule="evenodd" d="M7 1v6H1v8h8V9h6V1zM9 3h4v4H9z" fill="#e0e0e0" fill-opacity="0.39"/><path d="M1 1v2h2V1zM13 1v2h2V1zM1 13v2h2v-2zM13 13v2h2v-2z" fill="#e0e0e0"/></g><g transform="translate(256 36)" ><path fill-rule="evenodd" d="M8 0.7L15 4.2V11.8L8 15.3L1 11.8V4.2zM8 2.9L11.6 4.7L8 6.5L4.4 4.7zM3 7.1L7 9.1V12.9L3 10.9z" fill="#e0e0e0"/></g><g transform="translate(288 36)" ><path d="M3 3v2h2V3zM9 3v2h2V3zM3 9v2h2V9zM7 13v2h2v-2zM13 13v2h2v-2z" fill="#e0e0e0"/><path d="M11 7a4 4 0 0 0-4 4v2h2v-2a2 2 0 0 1 4 0v2h2v-2a4 4 0 0 0-4-4z" fill="#e0e0e0" fill-opacity="0.69"/></g><g transform="translate(328 36)" opacity="0.4"><g fill="#fc9c9c"><circle cx="9.3" cy="5" r="3"/><circle cx="3.6" cy="6.6" r="2.6"/><rect x="3" y="6.5" width="8" height="6.6" rx="0.8"/><path d="M10.8 9.9L14 7v6.2z"/></g></g><circle cx="24" cy="78" r="2" fill="#e0e0e0"/><circle cx="24" cy="84" r="2" fill="#e0e0e0"/><circle cx="24" cy="90" r="2" fill="#e0e0e0"/></svg>
</body></html>
